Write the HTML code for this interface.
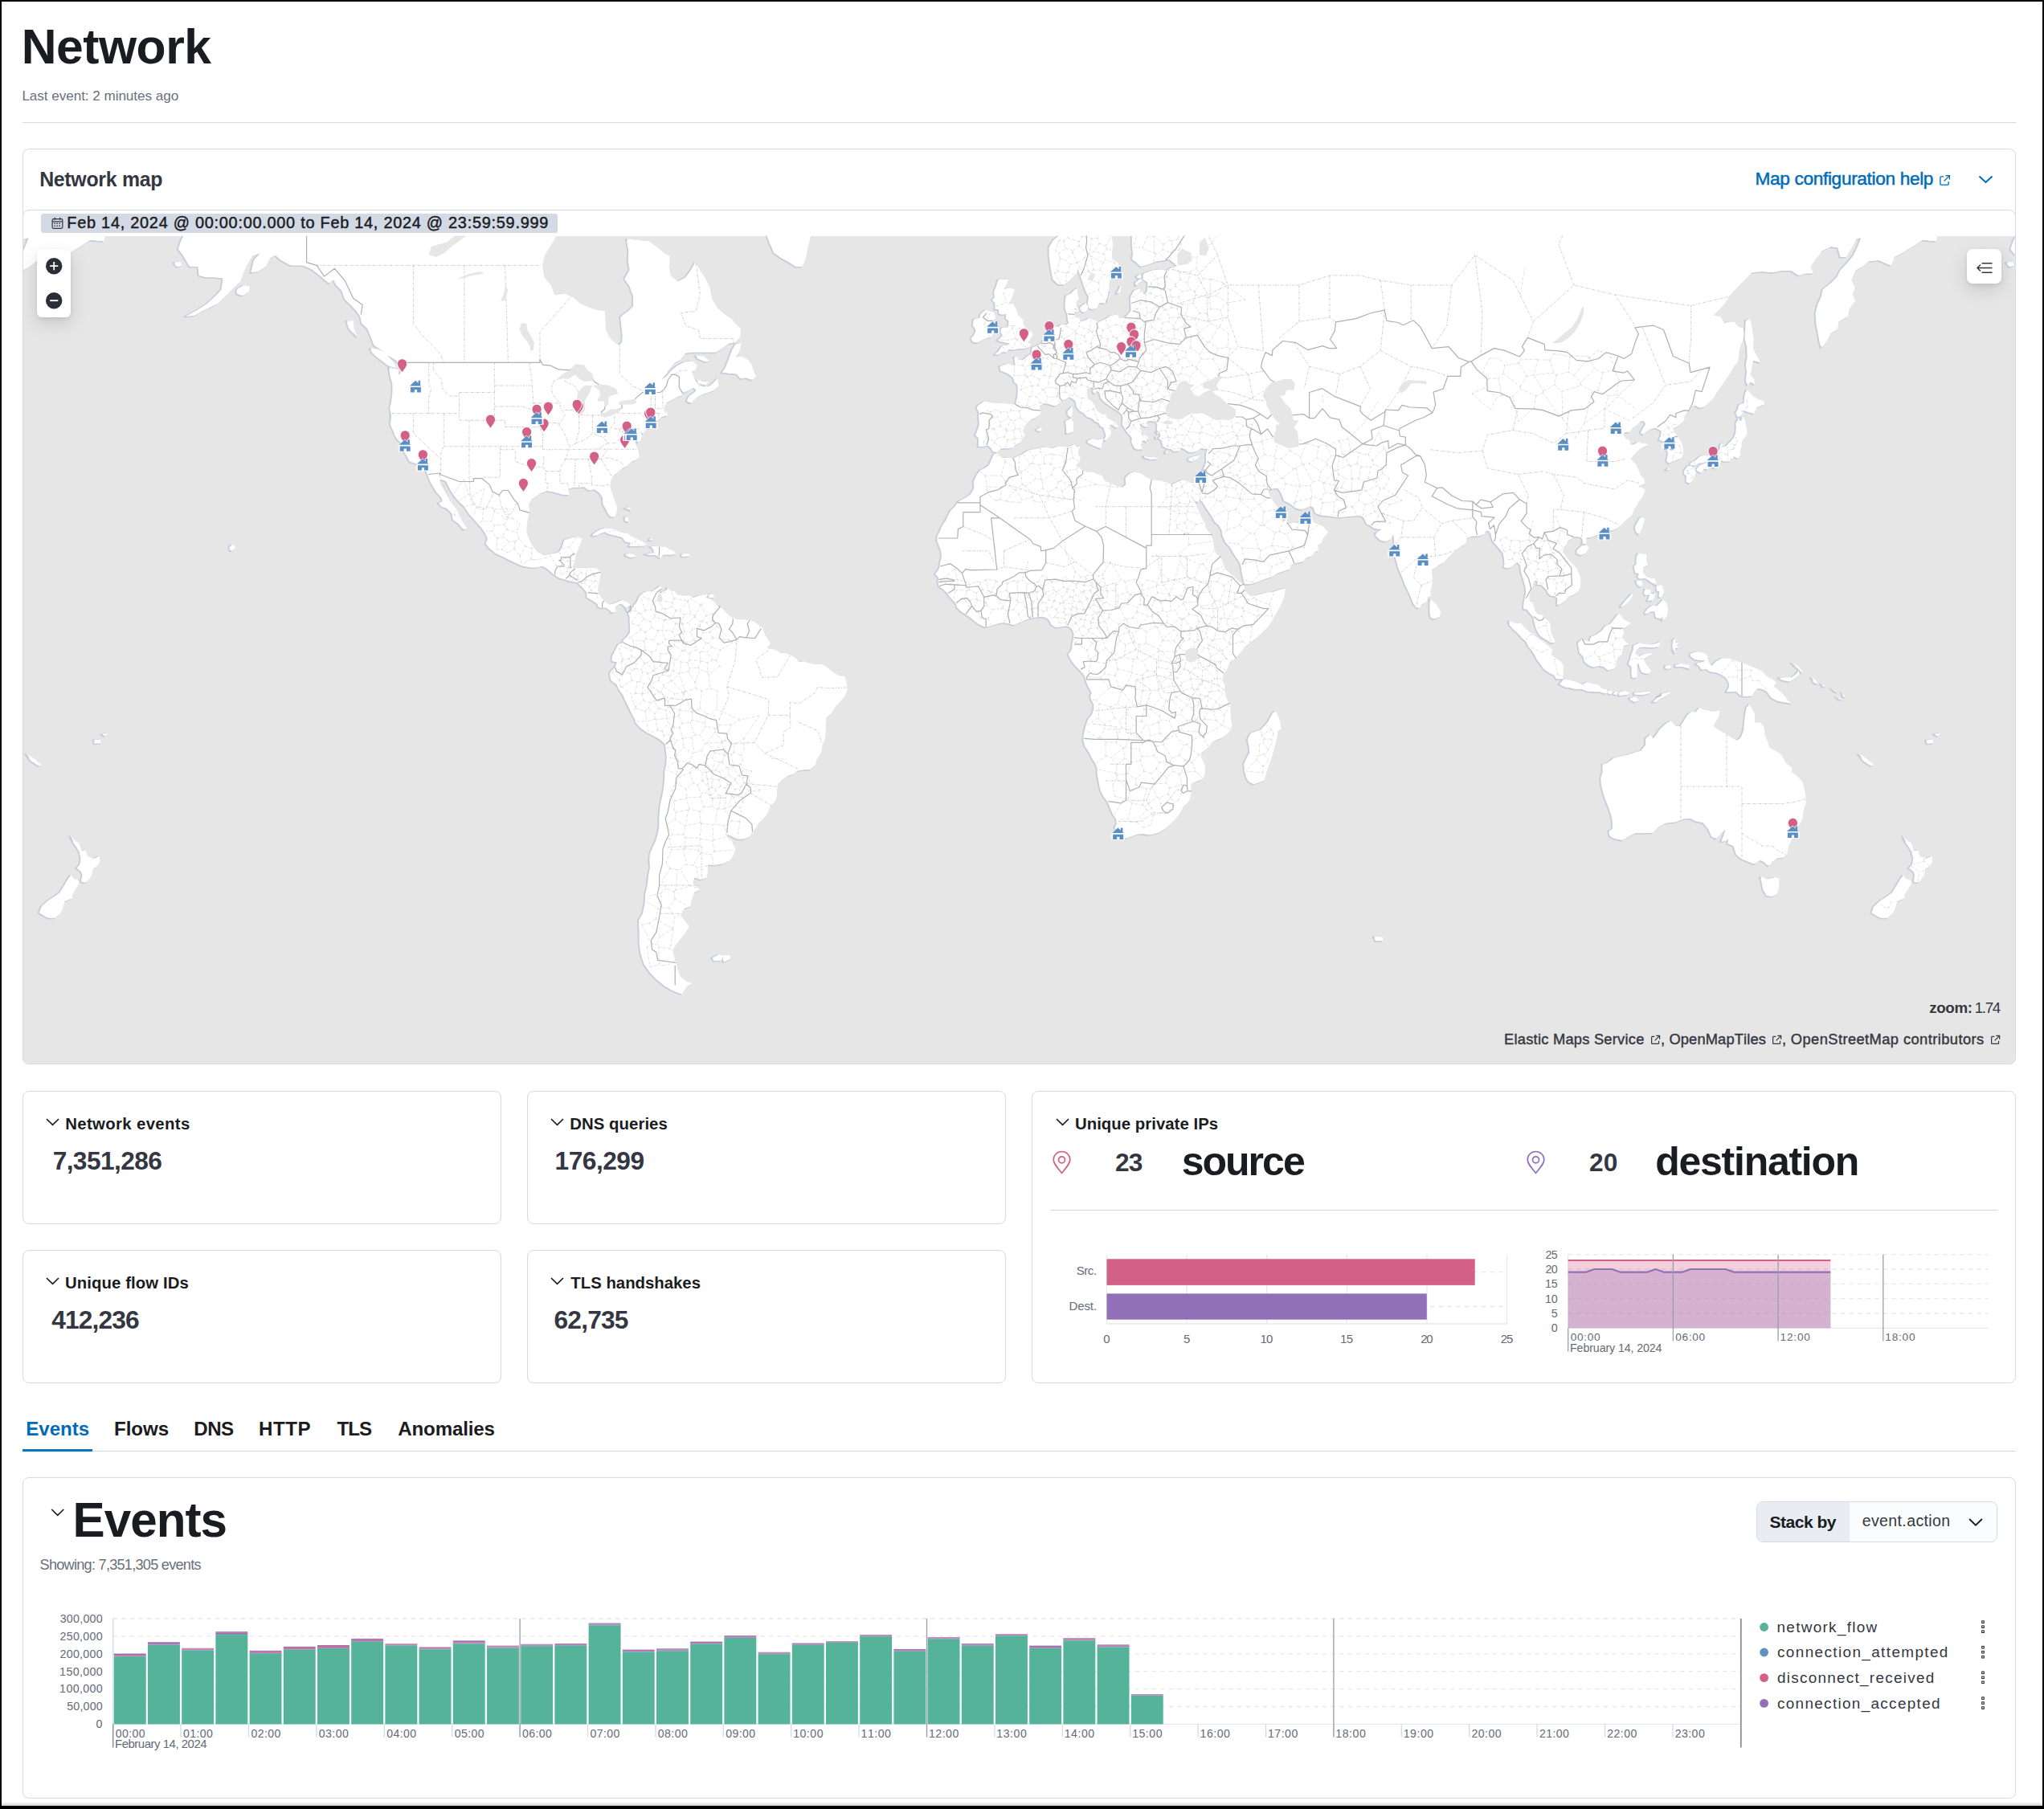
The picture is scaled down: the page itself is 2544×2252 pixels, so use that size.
<!DOCTYPE html><html lang="en"><head><meta charset="utf-8"><title>Network</title><style>
*{box-sizing:border-box;margin:0;padding:0}
html,body{width:2544px;height:2252px;background:#fff;overflow:hidden}
body{position:relative;font-family:"Liberation Sans",sans-serif;font-kerning:none;color:#343741}
.t{position:absolute;white-space:nowrap;line-height:1;display:block}
.p{position:absolute;border:1.3px solid #d3dae6;border-radius:8px;background:#fff}
.a{position:absolute}
svg{position:absolute;overflow:visible}
</style></head><body>
<div class="a" style="left:0;top:0;width:2544px;height:2px;background:#000"></div>
<div class="a" style="left:0;top:0;width:2px;height:2252px;background:#000"></div>
<div class="a" style="left:2542px;top:0;width:2px;height:2252px;background:#000"></div>
<div class="a" style="left:2px;top:2243px;width:2540px;height:5px;background:linear-gradient(#fff,#d4d4d4)"></div>
<div class="a" style="left:0;top:2248px;width:2544px;height:4px;background:#000"></div>
<header>
<span class="t" style="left:26.75px;top:28.39px;font-size:60.61px;letter-spacing:-0.489px;color:#1a1c21;font-weight:700;">Network</span>
<span class="t" style="left:27.39px;top:110.78px;font-size:17.15px;letter-spacing:-0.062px;color:#69707d;">Last event: 2 minutes ago</span>
<div class="a" style="left:28px;top:151.5px;width:2481px;height:1.3px;background:#d3dae6"></div>
</header>
<section class="p" style="left:28px;top:185px;width:2481px;height:1140px"></section>
<span class="t" style="left:49.14px;top:211.26px;font-size:24.86px;letter-spacing:-0.269px;color:#343741;font-weight:700;">Network map</span>
<span class="t" style="left:2184.54px;top:211.21px;font-size:22.67px;letter-spacing:-0.348px;color:#006bb8;-webkit-text-stroke:0.5px #006bb8;">Map configuration help</span>
<svg style="left:2413px;top:217px" width="15" height="15" viewBox="0 0 16 16" fill="none" stroke="#006bb8" stroke-width="1.4"><path d="M6.5 3H3.2A1.2 1.2 0 0 0 2 4.2v8.6A1.2 1.2 0 0 0 3.2 14h8.6a1.2 1.2 0 0 0 1.2-1.2V9.5M9 1.7h5.3V7M14 2 7 9"/></svg>
<svg style="left:2462px;top:218px" width="19" height="11" viewBox="0 0 19 11" fill="none" stroke="#006bb8" stroke-width="2"><path d="M1.5 1.5 9.5 9 17.5 1.5"/></svg>
<div class="p" style="left:28px;top:261px;width:2481px;height:1064px;border-radius:8px;overflow:hidden">
<div class="a" style="left:0;top:31.5px;width:2481px;height:1031px;background:#e6e6e6"></div>
<svg style="left:0;top:0" width="2478.4" height="1061.0" viewBox="0 0 2478.4 1061.0"><defs><clipPath id="mc"><rect x="0" y="31.5" width="2478.4" height="1029.5"/></clipPath></defs><g clip-path="url(#mc)"><path d="M837.2 180.6L846.7 181.5L854.3 187.4L849.9 188.4L840.4 184.5ZM749.1 370.8L754.2 369.4L756.7 373.6L752.3 371.5ZM749.1 382.1L752.9 381.4L753.6 387.6L750.4 386.9ZM779.5 408.9L782.7 408.3L783.3 410.6L779.5 410.6ZM708.0 404.5L711.8 400.7L718.1 397.3L724.4 395.2L731.4 395.9L737.1 397.3L744.1 400.7L751.7 402.1L756.7 405.5L764.3 408.9L770.7 412.3L775.7 415.7L773.2 417.4L765.6 417.7L754.2 418.1L756.7 413.7L750.4 412.3L746.6 406.9L737.7 404.8L729.5 402.8L725.1 400.1L718.7 402.1L713.7 404.8ZM858.1 930.3L865.7 926.2L872.0 927.2L868.9 933.4L860.6 934.4ZM872.0 926.7L879.6 927.2L879.6 932.3L872.0 935.4ZM910.0 -15.6L916.4 7.1L922.7 21.5L929.0 38.2L935.4 52.9L944.9 59.4L954.4 64.6L962.0 69.7L969.6 69.7L973.4 60.7L975.9 49.0L979.7 32.7L987.3 17.2L992.4 -0.4L1005.1 -15.6L1005.1 -83.5L910.0 -83.5ZM403.2 137.3L410.8 137.3L411.5 146.9L415.9 157.4L410.8 152.2L405.8 145.9ZM774.2 427.8L781.4 426.4L786.5 426.4L784.6 421.1L780.8 418.4L786.5 417.7L791.6 418.4L799.2 418.4L803.6 421.8L809.3 423.8L812.5 427.1L808.7 428.5L802.3 428.5L796.6 428.5L792.8 432.4L788.4 429.1L780.2 429.1ZM749.5 428.1L754.8 427.1L761.8 429.1L762.4 431.1L756.7 432.1L750.4 429.5ZM266.4 97.8L274.6 93.0L281.6 94.2L281.0 101.3L273.4 106.0L266.4 103.6ZM870.1 201.7L874.6 195.1L878.4 185.4L882.8 173.6L886.6 166.6L893.6 164.6L891.7 174.6L886.6 182.5L893.6 181.5L901.2 185.4L906.2 191.3L909.4 200.8L911.9 206.4L907.5 211.0L900.5 208.3L893.6 209.2L889.1 203.6L879.6 202.7ZM181.5 -15.6L206.9 -23.5L222.7 7.1L213.2 7.1L201.8 27.1L196.7 38.2L193.6 47.6L200.5 56.8L208.1 69.7L218.3 69.7L219.5 80.9L229.0 83.3L239.8 83.3L249.3 84.6L247.4 97.8L239.8 106.0L228.4 116.3L216.4 124.1L201.8 131.9L213.2 130.8L222.7 125.3L232.2 120.8L241.7 116.3L253.7 104.8L262.6 95.4L270.2 88.2L274.0 77.2L280.3 64.6L285.4 56.8L295.5 52.9L287.9 60.7L284.1 77.2L292.4 75.9L301.9 69.7L307.0 59.4L314.6 55.5L322.2 62.0L333.6 68.4L349.4 68.4L360.2 73.4L371.6 82.1L381.1 90.6L386.8 85.8L390.6 93.0L396.9 99.0L401.3 110.6L409.6 118.5L415.9 125.3L420.3 131.9L422.2 140.5L429.2 146.9L433.7 157.4L437.5 167.6L446.3 173.6L453.9 179.6L461.5 184.5L466.0 187.4L468.5 191.3L470.4 198.9L469.8 205.5L466.6 202.7L467.9 197.9L461.5 197.0L455.8 195.1L457.7 206.4L460.3 215.6L460.3 226.5L459.0 237.1L457.1 245.8L459.0 254.4L457.7 266.2L461.5 274.4L464.1 281.0L467.2 285.8L470.4 288.2L472.3 294.6L473.6 298.5L478.0 304.8L481.8 312.5L488.8 314.8L495.1 317.1L498.3 319.4L502.7 324.7L504.0 328.5L506.5 335.2L510.9 343.4L515.4 350.7L521.7 357.9L522.3 362.2L517.3 363.7L521.7 368.7L528.0 370.8L534.4 377.1L535.6 384.8L542.6 389.7L548.9 397.3L552.1 395.2L547.0 388.3L542.6 379.3L538.8 371.5L532.5 363.7L528.7 355.8L523.6 348.5L519.2 341.2L518.5 334.5L526.8 336.7L529.9 342.6L533.7 349.9L538.8 357.2L543.2 362.2L550.2 368.7L553.4 374.3L558.5 380.7L564.8 387.6L571.1 394.6L576.2 402.1L578.7 408.3L576.2 414.4L581.9 421.1L589.5 427.1L598.4 431.1L606.0 435.1L612.9 438.4L621.8 442.4L631.3 444.4L638.9 444.4L646.5 442.4L652.8 445.7L661.1 452.9L668.0 457.5L675.6 459.4L683.3 462.0L690.2 462.7L692.8 465.3L697.8 469.8L702.3 475.6L702.3 481.4L707.3 484.7L709.9 485.9L715.6 489.8L716.2 493.0L720.6 494.9L726.3 494.3L731.4 498.1L733.3 500.7L737.7 499.4L736.5 494.3L740.9 490.4L745.3 489.2L749.8 493.0L751.0 496.8L754.2 500.0L758.0 498.8L756.1 491.7L751.7 487.2L745.3 485.3L739.6 487.2L733.9 489.8L729.5 490.4L725.1 487.9L720.6 483.4L716.2 477.6L714.9 471.1L716.8 463.3L718.1 455.5L718.7 450.3L713.7 445.7L707.3 444.4L699.7 445.0L691.5 445.0L685.2 445.0L683.3 443.7L686.4 437.1L687.7 428.5L690.9 421.1L693.4 414.4L695.9 408.3L689.6 406.2L682.0 407.6L673.7 410.3L671.8 417.7L668.0 424.4L663.0 426.4L655.4 427.8L647.1 429.1L640.8 425.8L636.4 421.1L631.9 414.4L628.1 406.2L626.2 399.4L626.9 389.7L628.8 380.7L630.0 373.6L628.8 365.8L632.6 359.4L638.9 355.8L645.2 351.4L651.6 349.2L659.2 349.9L666.1 352.1L671.8 353.6L679.5 354.3L678.2 347.0L684.5 344.8L691.5 344.8L699.1 344.1L704.8 348.5L711.8 347.0L718.1 351.4L721.9 357.2L721.9 364.4L726.3 372.2L728.2 376.4L732.0 381.4L735.8 381.4L738.4 376.4L739.0 369.4L735.8 360.1L732.7 351.4L730.1 343.4L731.4 336.0L734.6 330.0L739.6 326.2L745.3 320.9L751.7 317.9L757.4 312.5L761.8 311.0L766.9 307.1L765.6 300.1L763.7 294.6L761.8 289.8L762.4 284.2L761.2 276.1L764.3 279.3L765.0 289.0L768.1 286.6L770.0 281.0L767.5 274.4L771.3 277.7L775.7 272.0L777.0 266.2L777.6 262.8L784.6 262.8L789.7 261.2L794.7 257.0L798.5 256.1L802.3 255.3L801.1 251.9L797.3 250.1L797.9 244.1L801.1 238.9L806.8 236.3L813.1 232.7L819.5 230.1L822.0 226.5L829.0 223.8L835.3 220.2L838.5 223.8L829.0 231.0L826.4 237.1L831.5 239.8L838.5 232.7L844.8 229.2L853.0 226.5L859.4 223.8L865.7 218.4L863.8 209.2L858.1 215.6L853.0 219.3L844.8 219.3L838.5 214.7L834.7 208.3L832.1 200.8L836.6 198.9L838.5 192.2L832.8 187.4L823.3 188.4L813.8 193.2L806.2 199.8L800.4 207.3L794.7 210.1L799.2 204.5L803.6 197.9L810.0 190.3L818.2 185.4L824.5 177.6L834.0 176.6L843.5 176.6L853.0 176.6L862.5 176.6L870.1 171.6L878.4 165.6L886.0 164.6L892.3 157.4L892.9 146.9L886.0 140.5L881.5 135.1L873.3 129.7L864.4 121.9L856.8 109.4L854.3 95.4L848.0 83.3L841.6 73.4L836.6 64.6L830.9 74.7L824.5 83.3L815.0 88.2L806.2 82.1L803.6 70.9L804.9 56.8L797.3 52.9L789.7 46.3L778.3 38.2L764.3 36.8L751.7 35.5L754.2 50.3L753.6 63.3L755.5 73.4L749.1 84.6L755.5 94.2L759.9 106.0L759.9 118.5L752.9 125.3L744.1 131.9L745.3 143.7L746.6 154.3L746.0 163.5L741.5 167.6L735.8 164.6L729.5 157.4L725.1 149.0L724.4 136.2L723.8 125.3L713.7 124.1L704.2 120.8L693.4 116.3L684.5 108.3L673.7 103.6L661.1 104.8L656.6 93.0L648.4 83.3L645.9 68.4L649.0 55.5L656.6 43.6L663.0 32.7L672.5 20.1L675.6 -83.5L181.5 -83.5ZM2462.1 -15.6L2487.5 -23.5L2503.3 7.1L2493.8 7.1L2482.4 27.1L2477.3 38.2L2474.2 47.6L2481.1 56.8L2488.7 69.7L2498.9 69.7L2500.1 80.9L2509.6 83.3L2520.4 83.3L2529.9 84.6L2528.0 97.8L2520.4 106.0L2509.0 116.3L2497.0 124.1L2482.4 131.9L2493.8 130.8L2503.3 125.3L2512.8 120.8L2522.3 116.3L2534.3 104.8L2543.2 95.4L2550.8 88.2L2554.6 77.2L2560.9 64.6L2566.0 56.8L2576.1 52.9L2568.5 60.7L2564.7 77.2L2573.0 75.9L2582.5 69.7L2587.6 59.4L2595.2 55.5L2602.8 62.0L2614.2 68.4L2630.0 68.4L2640.8 73.4L2652.2 82.1L2661.7 90.6L2667.4 85.8L2671.2 93.0L2677.5 99.0L2681.9 110.6L2690.2 118.5L2696.5 125.3L2700.9 131.9L2702.8 140.5L2709.8 146.9L2714.3 157.4L2718.1 167.6L2726.9 173.6L2734.5 179.6L2742.1 184.5L2746.6 187.4L2749.1 191.3L2751.0 198.9L2750.4 205.5L2747.2 202.7L2748.5 197.9L2742.1 197.0L2736.4 195.1L2738.3 206.4L2740.9 215.6L2740.9 226.5L2739.6 237.1L2737.7 245.8L2739.6 254.4L2738.3 266.2L2742.1 274.4L2744.7 281.0L2747.8 285.8L2751.0 288.2L2752.9 294.6L2754.2 298.5L2758.6 304.8L2762.4 312.5L2769.4 314.8L2775.7 317.1L2778.9 319.4L2783.3 324.7L2784.6 328.5L2787.1 335.2L2791.5 343.4L2796.0 350.7L2802.3 357.9L2802.9 362.2L2797.9 363.7L2802.3 368.7L2808.6 370.8L2815.0 377.1L2816.2 384.8L2823.2 389.7L2829.5 397.3L2832.7 395.2L2827.6 388.3L2823.2 379.3L2819.4 371.5L2813.1 363.7L2809.3 355.8L2804.2 348.5L2799.8 341.2L2799.1 334.5L2807.4 336.7L2810.5 342.6L2814.3 349.9L2819.4 357.2L2823.8 362.2L2830.8 368.7L2834.0 374.3L2839.1 380.7L2845.4 387.6L2851.7 394.6L2856.8 402.1L2859.3 408.3L2856.8 414.4L2862.5 421.1L2870.1 427.1L2879.0 431.1L2886.6 435.1L2893.5 438.4L2902.4 442.4L2911.9 444.4L2919.5 444.4L2927.1 442.4L2933.4 445.7L2941.7 452.9L2948.6 457.5L2956.2 459.4L2963.9 462.0L2970.8 462.7L2973.4 465.3L2978.4 469.8L2982.9 475.6L2982.9 481.4L2987.9 484.7L2990.5 485.9L2996.2 489.8L2996.8 493.0L3001.2 494.9L3006.9 494.3L3012.0 498.1L3013.9 500.7L3018.3 499.4L3017.1 494.3L3021.5 490.4L3025.9 489.2L3030.4 493.0L3031.6 496.8L3034.8 500.0L3038.6 498.8L3036.7 491.7L3032.3 487.2L3025.9 485.3L3020.2 487.2L3014.5 489.8L3010.1 490.4L3005.7 487.9L3001.2 483.4L2996.8 477.6L2995.5 471.1L2997.4 463.3L2998.7 455.5L2999.3 450.3L2994.3 445.7L2987.9 444.4L2980.3 445.0L2972.1 445.0L2965.8 445.0L2963.9 443.7L2967.0 437.1L2968.3 428.5L2971.5 421.1L2974.0 414.4L2976.5 408.3L2970.2 406.2L2962.6 407.6L2954.3 410.3L2952.4 417.7L2948.6 424.4L2943.6 426.4L2936.0 427.8L2927.7 429.1L2921.4 425.8L2917.0 421.1L2912.5 414.4L2908.7 406.2L2906.8 399.4L2907.5 389.7L2909.4 380.7L2910.6 373.6L2909.4 365.8L2913.2 359.4L2919.5 355.8L2925.8 351.4L2932.2 349.2L2939.8 349.9L2946.7 352.1L2952.4 353.6L2960.1 354.3L2958.8 347.0L2965.1 344.8L2972.1 344.8L2979.7 344.1L2985.4 348.5L2992.4 347.0L2998.7 351.4L3002.5 357.2L3002.5 364.4L3006.9 372.2L3008.8 376.4L3012.6 381.4L3016.4 381.4L3019.0 376.4L3019.6 369.4L3016.4 360.1L3013.3 351.4L3010.7 343.4L3012.0 336.0L3015.2 330.0L3020.2 326.2L3025.9 320.9L3032.3 317.9L3038.0 312.5L3042.4 311.0L3047.5 307.1L3046.2 300.1L3044.3 294.6L3042.4 289.8L3043.0 284.2L3041.8 276.1L3044.9 279.3L3045.6 289.0L3048.7 286.6L3050.6 281.0L3048.1 274.4L3051.9 277.7L3056.3 272.0L3057.6 266.2L3058.2 262.8L3065.2 262.8L3070.3 261.2L3075.3 257.0L3079.1 256.1L3082.9 255.3L3081.7 251.9L3077.9 250.1L3078.5 244.1L3081.7 238.9L3087.4 236.3L3093.7 232.7L3100.1 230.1L3102.6 226.5L3109.6 223.8L3115.9 220.2L3119.1 223.8L3109.6 231.0L3107.0 237.1L3112.1 239.8L3119.1 232.7L3125.4 229.2L3133.6 226.5L3140.0 223.8L3146.3 218.4L3144.4 209.2L3138.7 215.6L3133.6 219.3L3125.4 219.3L3119.1 214.7L3115.3 208.3L3112.7 200.8L3117.2 198.9L3119.1 192.2L3113.4 187.4L3103.9 188.4L3094.4 193.2L3086.8 199.8L3081.0 207.3L3075.3 210.1L3079.8 204.5L3084.2 197.9L3090.6 190.3L3098.8 185.4L3105.1 177.6L3114.6 176.6L3124.1 176.6L3133.6 176.6L3143.1 176.6L3150.7 171.6L3159.0 165.6L3166.6 164.6L3172.9 157.4L3173.5 146.9L3166.6 140.5L3162.1 135.1L3153.9 129.7L3145.0 121.9L3137.4 109.4L3134.9 95.4L3128.6 83.3L3122.2 73.4L3117.2 64.6L3111.5 74.7L3105.1 83.3L3095.6 88.2L3086.8 82.1L3084.2 70.9L3085.5 56.8L3077.9 52.9L3070.3 46.3L3058.9 38.2L3044.9 36.8L3032.3 35.5L3034.8 50.3L3034.2 63.3L3036.1 73.4L3029.7 84.6L3036.1 94.2L3040.5 106.0L3040.5 118.5L3033.5 125.3L3024.7 131.9L3025.9 143.7L3027.2 154.3L3026.6 163.5L3022.1 167.6L3016.4 164.6L3010.1 157.4L3005.7 149.0L3005.0 136.2L3004.4 125.3L2994.3 124.1L2984.8 120.8L2974.0 116.3L2965.1 108.3L2954.3 103.6L2941.7 104.8L2937.2 93.0L2929.0 83.3L2926.5 68.4L2929.6 55.5L2937.2 43.6L2943.6 32.7L2953.1 20.1L2956.2 -83.5L2462.1 -83.5ZM187.9 64.6L195.5 64.0L197.4 68.4L192.3 70.3ZM2468.5 64.6L2476.1 64.0L2478.0 68.4L2472.9 70.3ZM837.8 210.1L845.4 212.9L853.0 213.3L849.9 217.5L841.6 215.6ZM819.8 427.5L826.4 427.1L829.9 428.5L828.3 430.5L820.1 430.8ZM755.5 491.7L758.6 495.6L761.2 490.4L765.0 485.9L767.5 479.5L771.3 476.3L775.7 474.3L782.1 474.3L787.8 471.1L792.8 467.2L794.7 470.5L790.9 474.3L792.8 477.6L796.0 474.3L801.1 473.1L802.3 468.9L804.3 473.1L810.6 474.3L813.8 478.2L821.4 479.5L827.7 478.9L834.0 482.1L840.4 479.5L846.7 478.2L853.0 478.2L849.2 481.4L854.9 483.4L860.0 487.2L863.8 492.4L870.1 495.6L875.2 501.3L881.5 506.4L887.9 509.0L895.5 509.0L903.7 510.2L910.0 512.1L916.4 517.2L920.8 520.4L922.7 527.4L927.1 534.4L929.7 540.1L925.2 545.1L932.2 545.8L938.6 548.3L941.7 550.8L948.1 550.8L955.7 554.0L962.0 557.8L965.2 562.2L971.5 561.6L979.7 564.1L987.3 564.8L993.7 564.8L1001.3 569.2L1008.2 574.9L1014.6 578.7L1022.2 580.0L1024.7 587.7L1025.3 597.2L1022.2 605.6L1015.8 612.6L1010.1 619.1L1005.1 626.9L999.4 631.4L998.7 641.2L998.7 649.1L997.5 659.7L994.3 665.7L993.7 673.7L990.5 678.4L986.7 685.2L986.1 690.0L979.7 695.8L972.1 696.2L963.9 697.6L958.2 701.7L951.9 703.8L944.9 708.6L939.2 714.2L937.9 721.3L937.9 729.9L935.4 736.3L929.7 742.1L925.9 750.9L920.2 758.3L915.1 762.8L911.3 769.6L906.9 774.9L903.7 779.5L897.4 782.6L889.8 782.6L883.4 779.5L877.1 776.4L875.2 778.7L881.5 784.1L883.4 789.6L886.6 795.1L883.4 803.8L879.0 809.4L870.1 813.5L859.4 815.1L851.8 814.3L851.8 823.3L850.5 830.8L843.5 832.9L835.3 830.0L833.4 837.5L839.1 842.7L842.3 846.1L835.3 848.7L832.1 857.4L830.2 866.3L822.6 869.0L818.2 877.2L823.3 884.5L829.0 891.1L824.5 898.7L817.6 907.4L811.2 915.2L808.1 921.2L810.0 929.3L812.5 936.5L813.8 942.7L817.6 953.3L825.2 959.8L832.8 962.0L825.8 966.4L819.5 975.4L808.7 970.9L799.2 965.3L789.7 957.7L781.4 949.1L773.8 938.5L769.4 925.2L767.5 911.3L767.5 896.8L766.9 882.7L771.9 874.4L774.5 861.8L775.1 850.4L777.6 839.2L778.9 827.4L780.8 817.5L780.2 807.0L780.8 800.6L784.6 791.1L788.4 783.3L790.9 774.1L792.2 766.6L792.2 756.8L792.8 748.0L793.5 739.9L795.4 731.3L797.3 722.7L798.5 713.5L799.2 705.2L799.2 697.6L801.1 689.3L801.7 679.1L800.4 669.0L799.8 664.3L794.1 659.0L787.1 655.0L778.3 650.4L769.4 644.5L763.1 637.3L761.8 632.7L757.4 624.3L754.2 617.8L750.4 610.1L747.2 603.0L742.2 596.0L739.6 590.2L732.7 585.1L731.4 580.0L730.8 574.9L734.6 570.5L737.7 567.3L739.6 562.2L733.3 561.0L733.9 554.0L736.5 548.9L739.0 543.9L740.9 540.1L746.0 538.2L747.9 533.7L752.3 529.9L756.1 524.2L756.1 517.9L755.5 510.9L755.5 504.5L752.9 499.4L750.4 495.6ZM853.7 477.9L859.4 477.6L859.4 481.8L853.7 482.4ZM432.4 171.6L441.3 172.6L451.4 177.6L457.7 185.4L463.4 193.2L462.8 196.0L455.2 193.2L447.6 187.4L440.0 181.5L434.9 176.6ZM1208.4 303.2L1212.2 302.5L1217.9 307.9L1224.9 307.9L1231.9 308.7L1238.2 305.6L1243.9 303.2L1250.9 298.5L1258.5 297.0L1264.8 295.4L1272.4 294.6L1280.0 296.2L1287.6 293.8L1295.2 293.8L1301.5 293.8L1307.9 291.4L1311.1 294.6L1315.5 293.8L1313.0 298.5L1313.0 304.0L1316.1 307.9L1314.2 313.3L1309.8 317.9L1314.2 320.2L1318.0 323.2L1324.4 325.5L1330.7 325.5L1337.7 328.5L1342.7 330.0L1345.9 336.7L1353.5 339.7L1361.1 343.4L1368.1 344.8L1373.1 340.4L1372.5 332.2L1377.6 327.0L1383.9 325.5L1391.5 327.8L1397.8 332.2L1404.2 335.2L1413.7 336.0L1421.9 338.2L1429.5 341.2L1435.8 338.2L1442.2 335.6L1448.5 336.7L1450.7 337.8L1452.0 347.0L1452.3 350.7L1454.2 357.2L1458.0 362.2L1460.6 368.7L1463.7 375.7L1466.9 382.8L1470.7 389.7L1471.3 395.2L1477.0 401.4L1479.6 406.9L1481.5 414.4L1482.1 422.4L1485.3 427.8L1489.7 430.5L1492.9 438.4L1496.0 446.3L1501.1 450.9L1507.4 456.2L1513.1 462.0L1518.8 465.9L1520.1 470.5L1516.9 473.1L1521.4 474.3L1526.4 479.5L1532.8 479.5L1540.4 477.6L1547.3 475.6L1554.9 475.0L1562.5 472.4L1570.2 470.5L1570.2 476.3L1569.5 480.2L1567.6 485.9L1564.5 492.4L1561.3 498.1L1557.5 505.1L1553.7 512.1L1549.2 518.5L1542.3 525.5L1534.7 532.5L1527.7 537.5L1520.7 543.2L1515.0 550.2L1510.0 555.9L1505.5 560.3L1501.1 562.9L1499.8 567.3L1497.3 572.4L1494.1 577.5L1491.6 584.5L1495.4 590.2L1495.4 597.2L1496.7 604.9L1499.8 611.4L1502.4 615.2L1502.4 624.3L1503.0 632.7L1504.3 639.9L1503.0 646.5L1498.6 651.7L1492.2 656.4L1485.3 659.0L1479.6 662.3L1475.8 667.7L1469.4 673.1L1466.3 675.1L1465.6 680.5L1468.8 685.9L1470.7 691.4L1470.7 698.9L1470.1 704.5L1466.3 708.6L1458.7 711.4L1453.6 714.2L1453.0 717.8L1454.2 723.4L1452.3 731.3L1449.8 737.0L1444.1 742.1L1440.9 748.0L1437.1 753.9L1432.0 759.8L1426.3 765.8L1421.3 769.6L1414.3 774.1L1408.6 775.7L1402.9 777.2L1394.7 776.0L1387.1 776.4L1380.1 779.1L1372.5 781.8L1367.4 779.5L1362.7 778.0L1362.4 774.1L1359.2 767.3L1361.7 762.8L1361.1 757.6L1356.7 750.9L1353.5 742.9L1350.3 735.6L1345.9 729.9L1342.1 722.7L1340.2 715.7L1338.9 708.6L1337.3 700.3L1337.7 694.8L1335.1 688.0L1330.7 681.2L1327.5 674.4L1322.5 667.0L1320.2 659.7L1320.6 652.4L1321.8 646.5L1323.7 639.2L1326.3 632.1L1330.7 626.9L1333.2 620.4L1333.2 614.6L1330.1 608.8L1328.8 603.6L1330.7 599.8L1326.9 593.4L1323.7 585.8L1323.1 582.6L1321.2 578.1L1317.4 573.7L1312.3 568.6L1307.9 563.5L1304.1 557.8L1301.2 551.5L1304.7 548.3L1306.0 543.9L1306.6 538.8L1307.9 531.8L1308.5 526.8L1306.6 521.7L1302.2 517.9L1298.4 517.2L1292.0 518.2L1285.7 519.1L1280.6 515.3L1277.5 509.6L1273.0 506.4L1266.7 505.8L1260.4 506.4L1253.4 507.7L1247.7 509.6L1240.7 512.8L1233.1 516.0L1226.8 514.1L1220.5 513.1L1214.1 514.1L1207.8 516.0L1201.5 517.9L1197.7 518.5L1192.0 516.0L1185.6 511.5L1179.3 506.4L1173.6 502.6L1167.9 498.8L1163.4 494.3L1161.5 489.2L1158.4 485.3L1153.3 480.2L1150.8 476.3L1145.7 471.1L1140.6 467.9L1139.4 462.0L1140.0 456.8L1135.6 452.2L1138.1 449.0L1141.3 443.7L1141.9 437.1L1143.8 430.5L1143.2 423.8L1141.3 418.4L1138.1 411.0L1138.1 405.5L1141.9 398.0L1144.4 391.8L1148.9 385.5L1152.0 378.6L1154.6 373.6L1159.6 368.7L1164.1 362.2L1171.0 358.6L1177.4 355.0L1181.8 349.9L1184.4 344.1L1183.7 336.7L1186.9 329.3L1191.3 323.2L1197.7 320.2L1202.7 316.4L1205.9 309.5ZM1300.3 249.3L1305.3 244.1L1306.3 251.0L1304.1 257.8L1300.9 254.4ZM1394.7 305.6L1399.7 306.7L1405.4 306.7L1412.4 307.9L1410.5 309.5L1402.9 309.8L1395.3 307.5ZM1450.4 309.1L1454.9 306.7L1464.7 304.4L1461.2 309.5L1454.9 312.5L1451.1 311.4ZM1392.8 278.1L1398.5 281.0L1401.3 285.8L1395.3 281.8ZM-899.9 -83.5L-899.9 29.9L-899.9 42.3L-898.6 52.9L-899.9 60.7L-894.2 64.6L-889.1 69.7L-879.6 67.1L-870.1 63.3L-860.6 62.0L-853.0 60.7L-843.5 69.0L-851.1 70.9L-857.4 74.7L-866.9 73.4L-876.4 74.7L-885.9 78.4L-885.9 85.8L-880.2 89.4L-880.9 100.1L-885.3 104.8L-891.6 97.8L-897.3 99.0L-901.8 107.1L-901.4 116.3L-901.1 124.1L-904.9 128.6L-909.4 133.5L-916.3 134.0L-918.9 129.7L-927.1 130.8L-933.4 135.1L-942.3 138.9L-948.0 136.2L-953.7 134.0L-958.8 136.8L-965.1 138.4L-966.4 134.0L-971.5 133.0L-972.1 127.5L-969.5 120.8L-970.2 114.0L-966.4 110.6L-968.9 102.5L-968.0 96.6L-972.1 98.4L-976.5 103.6L-982.2 106.0L-983.2 116.3L-982.9 123.0L-980.3 128.6L-979.7 136.2L-978.4 139.5L-982.9 142.7L-989.2 142.1L-991.7 144.8L-999.3 145.3L-1004.4 150.1L-1006.9 157.4L-1010.1 161.5L-1013.3 165.6L-1019.0 168.6L-1024.7 170.6L-1024.7 177.6L-1030.4 181.0L-1034.2 184.5L-1037.3 186.4L-1042.4 185.4L-1043.0 182.5L-1046.8 182.5L-1044.9 192.2L-1049.4 192.7L-1055.7 190.8L-1064.6 194.1L-1063.3 199.4L-1055.1 202.7L-1050.6 205.5L-1047.5 208.3L-1046.2 213.8L-1042.4 216.6L-1041.8 222.0L-1042.4 230.1L-1044.3 239.8L-1047.5 241.5L-1057.0 240.2L-1066.5 239.8L-1076.0 239.3L-1084.8 237.6L-1091.8 242.4L-1093.4 245.0L-1090.5 251.0L-1090.5 258.6L-1089.9 265.4L-1092.4 273.6L-1095.0 279.7L-1091.2 282.2L-1090.5 287.4L-1091.5 293.8L-1084.8 293.8L-1079.8 292.2L-1075.3 295.4L-1072.8 300.1L-1069.0 300.9L-1063.3 296.2L-1057.0 296.2L-1049.4 295.4L-1046.2 292.2L-1039.9 289.0L-1036.1 282.6L-1033.5 279.7L-1036.7 274.4L-1032.9 267.0L-1029.1 262.8L-1024.7 259.5L-1020.2 257.8L-1014.5 253.6L-1014.5 249.3L-1015.8 244.1L-1010.1 239.8L-1005.0 240.6L-1000.6 242.0L-995.5 243.3L-991.1 240.2L-987.3 237.1L-982.2 234.5L-978.4 231.9L-973.4 234.5L-970.2 237.1L-968.9 244.1L-965.1 249.3L-960.0 251.9L-955.6 257.0L-949.3 259.1L-945.5 262.8L-941.0 264.5L-938.5 269.1L-935.3 270.3L-933.4 276.1L-932.2 280.2L-935.3 285.8L-932.8 286.2L-929.6 282.6L-926.5 277.7L-927.1 273.6L-929.6 272.0L-927.7 266.2L-923.9 267.0L-920.1 270.3L-917.6 268.7L-920.8 264.1L-927.1 260.8L-933.4 257.4L-932.2 253.6L-938.5 253.6L-944.2 249.3L-948.0 241.5L-951.2 237.1L-955.6 234.5L-956.9 227.4L-956.2 222.9L-950.5 219.7L-947.7 221.1L-948.6 225.6L-946.7 228.3L-944.2 223.8L-940.4 226.5L-938.5 233.6L-933.4 238.9L-927.1 243.3L-920.8 247.6L-916.3 250.1L-911.9 254.4L-911.3 259.5L-911.9 266.2L-908.1 272.0L-904.9 276.9L-901.8 280.2L-899.9 283.0L-900.5 287.4L-898.0 293.0L-896.7 295.8L-892.9 297.7L-889.7 297.0L-887.8 298.1L-889.7 291.4L-887.8 289.0L-888.5 286.6L-884.7 286.2L-882.4 288.2L-882.1 284.2L-886.6 281.0L-889.7 277.7L-889.1 275.3L-891.0 270.3L-891.0 266.2L-889.1 264.5L-885.9 267.8L-883.4 269.5L-880.2 268.3L-883.4 265.4L-881.5 262.4L-876.4 262.0L-870.1 262.8L-868.2 266.2L-868.8 269.1L-868.8 273.6L-865.0 276.1L-864.4 281.0L-867.6 283.4L-863.1 285.8L-861.9 290.6L-861.2 293.8L-856.2 296.2L-851.1 297.0L-847.3 300.1L-841.6 299.3L-839.7 295.0L-834.6 297.0L-828.9 300.9L-824.5 300.9L-819.4 299.3L-814.3 295.4L-809.3 297.0L-805.5 295.4L-807.4 300.9L-808.0 306.4L-807.4 312.5L-809.3 317.1L-811.8 323.2L-813.4 327.0L-815.0 333.0L-817.5 336.7L-821.9 338.9L-827.6 338.9L-829.9 337.8L-828.6 347.0L-827.6 350.7L-824.5 357.2L-821.3 361.5L-817.8 363.3L-816.2 358.6L-813.7 351.4L-813.1 350.7L-814.0 355.0L-815.0 360.1L-811.8 362.9L-808.0 369.4L-803.6 375.7L-799.1 382.8L-796.6 387.6L-792.2 391.1L-788.4 397.3L-787.1 404.8L-783.3 413.0L-778.2 418.4L-773.8 425.8L-770.0 431.8L-765.6 437.8L-763.7 445.0L-763.0 451.6L-761.1 459.4L-759.2 465.3L-752.9 465.0L-746.6 463.3L-740.2 460.7L-733.3 458.1L-726.3 456.2L-719.3 451.6L-711.7 449.0L-704.1 446.3L-702.8 441.7L-695.9 438.7L-687.6 437.1L-683.8 432.4L-677.5 430.5L-672.4 424.4L-668.6 423.8L-669.3 417.1L-664.8 413.7L-662.9 408.3L-658.5 403.5L-656.0 400.1L-659.1 398.0L-662.9 393.2L-668.6 391.1L-673.7 389.0L-676.9 384.8L-677.5 378.6L-677.2 373.6L-679.4 375.7L-680.0 378.6L-684.5 381.0L-688.9 385.5L-694.0 389.0L-700.3 388.7L-706.0 389.7L-707.9 386.9L-707.9 381.4L-709.2 375.0L-712.3 377.8L-713.0 384.2L-716.1 379.3L-717.4 373.6L-720.6 367.9L-724.4 362.9L-727.6 357.2L-730.7 351.4L-731.4 347.0L-726.9 347.0L-721.2 345.6L-717.4 346.3L-713.6 352.9L-710.4 361.5L-705.4 363.7L-700.9 366.5L-695.2 370.8L-688.9 372.2L-682.6 370.1L-677.5 367.6L-673.7 370.1L-671.8 376.4L-667.4 378.6L-661.0 380.0L-654.7 380.3L-648.4 381.4L-642.0 381.7L-635.7 381.4L-629.4 380.7L-623.0 380.3L-616.7 379.6L-612.3 381.4L-610.4 384.2L-607.2 390.4L-602.8 392.5L-597.7 395.9L-589.4 397.0L-596.4 401.1L-596.4 404.8L-590.7 410.3L-585.0 412.3L-578.7 409.6L-576.1 404.2L-574.9 401.4L-573.6 408.3L-573.6 415.7L-573.6 423.1L-572.3 430.5L-570.4 437.1L-568.5 444.4L-565.4 451.6L-562.2 459.4L-559.7 466.6L-555.9 473.7L-552.1 482.7L-549.5 489.2L-545.7 494.3L-543.2 494.9L-540.0 490.4L-534.3 487.2L-532.4 481.4L-529.0 480.8L-529.3 473.1L-527.4 466.6L-526.1 460.7L-527.4 453.6L-527.4 447.6L-522.9 444.7L-519.1 441.7L-513.4 439.1L-507.7 433.1L-502.7 427.8L-497.0 422.4L-491.3 418.4L-485.6 414.4L-483.7 408.3L-478.0 405.5L-472.3 405.5L-466.6 404.8L-462.1 402.8L-460.2 398.7L-455.8 398.7L-453.2 402.1L-452.0 408.3L-450.1 412.3L-446.3 416.4L-441.8 421.8L-438.0 426.4L-436.8 433.1L-436.1 439.7L-437.7 443.7L-433.0 445.3L-428.5 443.7L-424.7 440.4L-420.3 437.1L-419.0 439.1L-416.5 441.7L-415.9 448.3L-414.0 454.9L-412.1 461.4L-410.2 468.5L-409.5 475.0L-410.8 481.4L-412.1 487.9L-412.7 494.3L-411.4 496.5L-408.3 496.2L-405.7 500.0L-401.9 503.9L-400.0 507.0L-399.1 512.1L-397.5 518.5L-395.6 522.9L-393.1 527.7L-389.3 531.2L-385.5 533.4L-380.4 536.6L-378.5 538.2L-374.7 537.8L-374.7 534.4L-377.2 529.9L-379.4 524.8L-379.8 519.8L-379.8 516.0L-381.7 512.1L-384.8 509.0L-387.4 507.0L-391.2 502.9L-395.6 502.6L-398.1 500.0L-400.7 493.0L-401.9 487.9L-405.7 486.6L-406.4 480.2L-404.5 475.0L-402.6 469.8L-401.3 463.3L-398.1 460.1L-395.0 461.4L-395.6 465.9L-390.5 465.9L-386.7 469.2L-383.6 472.4L-381.7 476.3L-378.5 479.5L-373.4 480.2L-370.3 482.7L-370.9 491.4L-367.1 489.8L-362.0 486.6L-358.9 482.7L-355.7 480.2L-350.6 478.2L-345.6 474.3L-343.0 470.5L-342.4 464.6L-342.4 458.8L-344.3 452.2L-346.8 446.3L-349.4 442.7L-353.8 439.1L-358.2 433.8L-361.4 429.1L-364.6 425.1L-363.9 419.7L-360.1 415.7L-358.2 411.6L-353.8 408.9L-349.4 406.2L-344.3 406.2L-340.5 406.9L-338.6 411.0L-339.9 414.4L-336.0 415.0L-334.8 410.3L-335.4 407.6L-329.7 406.9L-324.0 404.8L-318.9 402.8L-315.1 400.1L-311.3 401.4L-307.5 398.7L-301.8 398.0L-296.1 395.2L-291.1 391.1L-286.6 386.2L-282.2 382.8L-277.8 378.6L-276.5 373.6L-273.3 368.7L-270.2 362.9L-266.4 358.6L-263.8 352.9L-261.9 347.8L-266.4 344.8L-270.8 344.1L-266.4 341.9L-262.6 339.7L-263.2 334.5L-267.6 330.0L-269.5 324.7L-272.7 317.1L-277.1 312.5L-279.7 309.5L-276.5 304.8L-272.7 300.9L-268.3 297.0L-262.6 294.2L-258.4 292.2L-261.3 289.8L-266.4 289.4L-271.4 288.2L-275.9 291.4L-280.9 291.4L-280.9 286.6L-286.0 284.2L-289.2 279.3L-287.3 276.1L-281.6 276.1L-277.8 271.2L-272.1 267.0L-267.6 262.4L-262.6 262.0L-260.7 265.4L-263.8 270.3L-267.0 276.1L-264.5 278.9L-260.0 275.3L-254.3 272.0L-248.0 270.3L-244.2 272.8L-241.0 274.4L-241.7 280.2L-244.2 285.0L-239.1 287.4L-235.3 288.2L-232.8 292.2L-234.7 296.2L-232.8 300.9L-233.4 306.4L-234.7 311.0L-232.2 314.5L-227.1 312.5L-222.7 310.6L-217.6 308.7L-215.1 304.8L-214.4 300.9L-215.1 294.6L-216.3 289.8L-219.5 284.2L-222.0 280.2L-226.5 275.7L-227.1 271.2L-222.0 268.7L-216.3 264.5L-213.2 261.2L-213.2 256.1L-209.3 251.0L-206.8 250.1L-203.0 244.1L-198.6 242.4L-193.5 245.8L-188.4 244.6L-182.7 239.8L-177.7 234.5L-173.2 227.4L-168.8 221.1L-164.4 214.7L-159.3 207.3L-154.9 200.8L-151.1 194.1L-146.6 188.4L-145.4 179.6L-144.1 170.6L-140.3 161.5L-139.0 153.2L-140.3 145.9L-146.0 144.8L-151.1 138.4L-157.4 138.4L-163.7 140.5L-168.2 131.9L-177.0 130.8L-170.1 124.1L-163.1 116.3L-157.4 107.1L-147.9 96.6L-138.4 87.0L-128.9 77.2L-116.2 75.9L-103.6 77.2L-90.9 74.7L-79.5 74.7L-70.0 80.9L-62.4 78.4L-52.9 78.4L-56.0 69.7L-49.7 60.7L-41.5 50.3L-30.7 45.0L-21.2 46.3L-18.0 58.1L-11.7 58.1L-5.4 47.6L1.0 35.5L7.3 34.1L2.9 45.0L-2.2 55.5L-8.5 63.3L-18.0 73.4L-22.5 82.1L-30.7 90.6L-40.2 97.8L-42.1 107.1L-46.5 116.3L-49.1 127.5L-48.4 140.5L-45.9 153.2L-44.0 163.5L-42.1 170.6L-36.4 163.5L-31.3 153.2L-22.5 148.0L-21.2 138.4L-9.8 131.9L-7.9 123.0L-2.8 115.2L-0.3 112.9L-4.1 104.8L-0.9 95.4L-5.4 87.0L-0.3 74.7L8.6 69.7L16.8 63.3L29.5 62.0L44.1 68.4L48.5 58.1L58.0 52.9L70.7 45.0L83.3 36.8L100.4 38.2L102.3 28.5L96.0 14.3L105.5 -0.4L130.8 7.1L149.8 10.0L168.8 -12.5L168.8 -83.5ZM1380.7 -83.5L1380.7 29.9L1380.7 42.3L1382.0 52.9L1380.7 60.7L1386.4 64.6L1391.5 69.7L1401.0 67.1L1410.5 63.3L1420.0 62.0L1427.6 60.7L1437.1 69.0L1429.5 70.9L1423.2 74.7L1413.7 73.4L1404.2 74.7L1394.7 78.4L1394.7 85.8L1400.4 89.4L1399.7 100.1L1395.3 104.8L1389.0 97.8L1383.3 99.0L1378.8 107.1L1379.2 116.3L1379.5 124.1L1375.7 128.6L1371.2 133.5L1364.3 134.0L1361.7 129.7L1353.5 130.8L1347.2 135.1L1338.3 138.9L1332.6 136.2L1326.9 134.0L1321.8 136.8L1315.5 138.4L1314.2 134.0L1309.1 133.0L1308.5 127.5L1311.1 120.8L1310.4 114.0L1314.2 110.6L1311.7 102.5L1312.6 96.6L1308.5 98.4L1304.1 103.6L1298.4 106.0L1297.4 116.3L1297.7 123.0L1300.3 128.6L1300.9 136.2L1302.2 139.5L1297.7 142.7L1291.4 142.1L1288.9 144.8L1281.3 145.3L1276.2 150.1L1273.7 157.4L1270.5 161.5L1267.3 165.6L1261.6 168.6L1255.9 170.6L1255.9 177.6L1250.2 181.0L1246.4 184.5L1243.3 186.4L1238.2 185.4L1237.6 182.5L1233.8 182.5L1235.7 192.2L1231.2 192.7L1224.9 190.8L1216.0 194.1L1217.3 199.4L1225.5 202.7L1230.0 205.5L1233.1 208.3L1234.4 213.8L1238.2 216.6L1238.8 222.0L1238.2 230.1L1236.3 239.8L1233.1 241.5L1223.6 240.2L1214.1 239.8L1204.6 239.3L1195.8 237.6L1188.8 242.4L1187.2 245.0L1190.1 251.0L1190.1 258.6L1190.7 265.4L1188.2 273.6L1185.6 279.7L1189.4 282.2L1190.1 287.4L1189.1 293.8L1195.8 293.8L1200.8 292.2L1205.3 295.4L1207.8 300.1L1211.6 300.9L1217.3 296.2L1223.6 296.2L1231.2 295.4L1234.4 292.2L1240.7 289.0L1244.5 282.6L1247.1 279.7L1243.9 274.4L1247.7 267.0L1251.5 262.8L1255.9 259.5L1260.4 257.8L1266.1 253.6L1266.1 249.3L1264.8 244.1L1270.5 239.8L1275.6 240.6L1280.0 242.0L1285.1 243.3L1289.5 240.2L1293.3 237.1L1298.4 234.5L1302.2 231.9L1307.2 234.5L1310.4 237.1L1311.7 244.1L1315.5 249.3L1320.6 251.9L1325.0 257.0L1331.3 259.1L1335.1 262.8L1339.6 264.5L1342.1 269.1L1345.3 270.3L1347.2 276.1L1348.4 280.2L1345.3 285.8L1347.8 286.2L1351.0 282.6L1354.1 277.7L1353.5 273.6L1351.0 272.0L1352.9 266.2L1356.7 267.0L1360.5 270.3L1363.0 268.7L1359.8 264.1L1353.5 260.8L1347.2 257.4L1348.4 253.6L1342.1 253.6L1336.4 249.3L1332.6 241.5L1329.4 237.1L1325.0 234.5L1323.7 227.4L1324.4 222.9L1330.1 219.7L1332.9 221.1L1332.0 225.6L1333.9 228.3L1336.4 223.8L1340.2 226.5L1342.1 233.6L1347.2 238.9L1353.5 243.3L1359.8 247.6L1364.3 250.1L1368.7 254.4L1369.3 259.5L1368.7 266.2L1372.5 272.0L1375.7 276.9L1378.8 280.2L1380.7 283.0L1380.1 287.4L1382.6 293.0L1383.9 295.8L1387.7 297.7L1390.9 297.0L1392.8 298.1L1390.9 291.4L1392.8 289.0L1392.1 286.6L1395.9 286.2L1398.2 288.2L1398.5 284.2L1394.0 281.0L1390.9 277.7L1391.5 275.3L1389.6 270.3L1389.6 266.2L1391.5 264.5L1394.7 267.8L1397.2 269.5L1400.4 268.3L1397.2 265.4L1399.1 262.4L1404.2 262.0L1410.5 262.8L1412.4 266.2L1411.8 269.1L1411.8 273.6L1415.6 276.1L1416.2 281.0L1413.0 283.4L1417.5 285.8L1418.7 290.6L1419.4 293.8L1424.4 296.2L1429.5 297.0L1433.3 300.1L1439.0 299.3L1440.9 295.0L1446.0 297.0L1451.7 300.9L1456.1 300.9L1461.2 299.3L1466.3 295.4L1471.3 297.0L1475.1 295.4L1473.2 300.9L1472.6 306.4L1473.2 312.5L1471.3 317.1L1468.8 323.2L1467.2 327.0L1465.6 333.0L1463.1 336.7L1458.7 338.9L1453.0 338.9L1450.7 337.8L1452.0 347.0L1453.0 350.7L1456.1 357.2L1459.3 361.5L1462.8 363.3L1464.4 358.6L1466.9 351.4L1467.5 350.7L1466.6 355.0L1465.6 360.1L1468.8 362.9L1472.6 369.4L1477.0 375.7L1481.5 382.8L1484.0 387.6L1488.4 391.1L1492.2 397.3L1493.5 404.8L1497.3 413.0L1502.4 418.4L1506.8 425.8L1510.6 431.8L1515.0 437.8L1516.9 445.0L1517.6 451.6L1519.5 459.4L1521.4 465.3L1527.7 465.0L1534.0 463.3L1540.4 460.7L1547.3 458.1L1554.3 456.2L1561.3 451.6L1568.9 449.0L1576.5 446.3L1577.8 441.7L1584.7 438.7L1593.0 437.1L1596.8 432.4L1603.1 430.5L1608.2 424.4L1612.0 423.8L1611.3 417.1L1615.8 413.7L1617.7 408.3L1622.1 403.5L1624.6 400.1L1621.5 398.0L1617.7 393.2L1612.0 391.1L1606.9 389.0L1603.7 384.8L1603.1 378.6L1603.4 373.6L1601.2 375.7L1600.6 378.6L1596.1 381.0L1591.7 385.5L1586.6 389.0L1580.3 388.7L1574.6 389.7L1572.7 386.9L1572.7 381.4L1571.4 375.0L1568.3 377.8L1567.6 384.2L1564.5 379.3L1563.2 373.6L1560.0 367.9L1556.2 362.9L1553.0 357.2L1549.9 351.4L1549.2 347.0L1553.7 347.0L1559.4 345.6L1563.2 346.3L1567.0 352.9L1570.2 361.5L1575.2 363.7L1579.7 366.5L1585.4 370.8L1591.7 372.2L1598.0 370.1L1603.1 367.6L1606.9 370.1L1608.8 376.4L1613.2 378.6L1619.6 380.0L1625.9 380.3L1632.2 381.4L1638.6 381.7L1644.9 381.4L1651.2 380.7L1657.6 380.3L1663.9 379.6L1668.3 381.4L1670.2 384.2L1673.4 390.4L1677.8 392.5L1682.9 395.9L1691.2 397.0L1684.2 401.1L1684.2 404.8L1689.9 410.3L1695.6 412.3L1701.9 409.6L1704.5 404.2L1705.7 401.4L1707.0 408.3L1707.0 415.7L1707.0 423.1L1708.3 430.5L1710.2 437.1L1712.1 444.4L1715.2 451.6L1718.4 459.4L1720.9 466.6L1724.7 473.7L1728.5 482.7L1731.1 489.2L1734.9 494.3L1737.4 494.9L1740.6 490.4L1746.3 487.2L1748.2 481.4L1751.6 480.8L1751.3 473.1L1753.2 466.6L1754.5 460.7L1753.2 453.6L1753.2 447.6L1757.7 444.7L1761.5 441.7L1767.2 439.1L1772.9 433.1L1777.9 427.8L1783.6 422.4L1789.3 418.4L1795.0 414.4L1796.9 408.3L1802.6 405.5L1808.3 405.5L1814.0 404.8L1818.5 402.8L1820.4 398.7L1824.8 398.7L1827.4 402.1L1828.6 408.3L1830.5 412.3L1834.3 416.4L1838.8 421.8L1842.6 426.4L1843.8 433.1L1844.5 439.7L1842.9 443.7L1847.6 445.3L1852.1 443.7L1855.9 440.4L1860.3 437.1L1861.6 439.1L1864.1 441.7L1864.7 448.3L1866.6 454.9L1868.5 461.4L1870.4 468.5L1871.1 475.0L1869.8 481.4L1868.5 487.9L1867.9 494.3L1869.2 496.5L1872.3 496.2L1874.9 500.0L1878.7 503.9L1880.6 507.0L1881.5 512.1L1883.1 518.5L1885.0 522.9L1887.5 527.7L1891.3 531.2L1895.1 533.4L1900.2 536.6L1902.1 538.2L1905.9 537.8L1905.9 534.4L1903.4 529.9L1901.2 524.8L1900.8 519.8L1900.8 516.0L1898.9 512.1L1895.8 509.0L1893.2 507.0L1889.4 502.9L1885.0 502.6L1882.5 500.0L1879.9 493.0L1878.7 487.9L1874.9 486.6L1874.2 480.2L1876.1 475.0L1878.0 469.8L1879.3 463.3L1882.5 460.1L1885.6 461.4L1885.0 465.9L1890.1 465.9L1893.9 469.2L1897.0 472.4L1898.9 476.3L1902.1 479.5L1907.2 480.2L1910.3 482.7L1909.7 491.4L1913.5 489.8L1918.6 486.6L1921.7 482.7L1924.9 480.2L1930.0 478.2L1935.0 474.3L1937.6 470.5L1938.2 464.6L1938.2 458.8L1936.3 452.2L1933.8 446.3L1931.2 442.7L1926.8 439.1L1922.4 433.8L1919.2 429.1L1916.0 425.1L1916.7 419.7L1920.5 415.7L1922.4 411.6L1926.8 408.9L1931.2 406.2L1936.3 406.2L1940.1 406.9L1942.0 411.0L1940.7 414.4L1944.6 415.0L1945.8 410.3L1945.2 407.6L1950.9 406.9L1956.6 404.8L1961.7 402.8L1965.5 400.1L1969.3 401.4L1973.1 398.7L1978.8 398.0L1984.5 395.2L1989.5 391.1L1994.0 386.2L1998.4 382.8L2002.8 378.6L2004.1 373.6L2007.3 368.7L2010.4 362.9L2014.2 358.6L2016.8 352.9L2018.7 347.8L2014.2 344.8L2009.8 344.1L2014.2 341.9L2018.0 339.7L2017.4 334.5L2013.0 330.0L2011.1 324.7L2007.9 317.1L2003.5 312.5L2000.9 309.5L2004.1 304.8L2007.9 300.9L2012.3 297.0L2018.0 294.2L2022.2 292.2L2019.3 289.8L2014.2 289.4L2009.2 288.2L2004.7 291.4L1999.7 291.4L1999.7 286.6L1994.6 284.2L1991.4 279.3L1993.3 276.1L1999.0 276.1L2002.8 271.2L2008.5 267.0L2013.0 262.4L2018.0 262.0L2019.9 265.4L2016.8 270.3L2013.6 276.1L2016.1 278.9L2020.6 275.3L2026.3 272.0L2032.6 270.3L2036.4 272.8L2039.6 274.4L2038.9 280.2L2036.4 285.0L2041.5 287.4L2045.3 288.2L2047.8 292.2L2045.9 296.2L2047.8 300.9L2047.2 306.4L2045.9 311.0L2048.4 314.5L2053.5 312.5L2057.9 310.6L2063.0 308.7L2065.5 304.8L2066.2 300.9L2065.5 294.6L2064.3 289.8L2061.1 284.2L2058.6 280.2L2054.1 275.7L2053.5 271.2L2058.6 268.7L2064.3 264.5L2067.4 261.2L2067.4 256.1L2071.3 251.0L2073.8 250.1L2077.6 244.1L2082.0 242.4L2087.1 245.8L2092.2 244.6L2097.9 239.8L2102.9 234.5L2107.4 227.4L2111.8 221.1L2116.2 214.7L2121.3 207.3L2125.7 200.8L2129.5 194.1L2134.0 188.4L2135.2 179.6L2136.5 170.6L2140.3 161.5L2141.6 153.2L2140.3 145.9L2134.6 144.8L2129.5 138.4L2123.2 138.4L2116.9 140.5L2112.4 131.9L2103.6 130.8L2110.5 124.1L2117.5 116.3L2123.2 107.1L2132.7 96.6L2142.2 87.0L2151.7 77.2L2164.4 75.9L2177.0 77.2L2189.7 74.7L2201.1 74.7L2210.6 80.9L2218.2 78.4L2227.7 78.4L2224.6 69.7L2230.9 60.7L2239.1 50.3L2249.9 45.0L2259.4 46.3L2262.6 58.1L2268.9 58.1L2275.2 47.6L2281.6 35.5L2287.9 34.1L2283.5 45.0L2278.4 55.5L2272.1 63.3L2262.6 73.4L2258.1 82.1L2249.9 90.6L2240.4 97.8L2238.5 107.1L2234.1 116.3L2231.5 127.5L2232.2 140.5L2234.7 153.2L2236.6 163.5L2238.5 170.6L2244.2 163.5L2249.3 153.2L2258.1 148.0L2259.4 138.4L2270.8 131.9L2272.7 123.0L2277.8 115.2L2280.3 112.9L2276.5 104.8L2279.7 95.4L2275.2 87.0L2280.3 74.7L2289.2 69.7L2297.4 63.3L2310.1 62.0L2324.7 68.4L2329.1 58.1L2338.6 52.9L2351.3 45.0L2363.9 36.8L2381.0 38.2L2382.9 28.5L2376.6 14.3L2386.1 -0.4L2411.4 7.1L2430.4 10.0L2449.4 -12.5L2449.4 -83.5ZM1307.9 121.9L1312.3 120.8L1314.2 125.3L1310.4 126.9ZM1361.1 103.6L1365.5 94.2L1366.8 95.4L1364.3 102.5ZM1209.7 179.1L1213.5 179.6L1219.2 176.1L1223.6 176.6L1226.8 172.6L1233.1 173.6L1238.8 172.1L1245.8 172.1L1252.1 170.1L1254.7 166.6L1250.2 165.1L1252.8 161.5L1256.6 154.3L1254.0 149.6L1247.7 150.1L1247.1 145.9L1244.5 141.6L1244.5 136.2L1238.2 130.8L1235.7 123.0L1231.9 116.3L1225.5 116.3L1229.3 111.7L1231.9 104.8L1233.8 97.8L1226.8 96.6L1220.5 97.8L1224.3 90.6L1226.2 85.8L1217.3 85.8L1214.1 85.8L1211.6 94.2L1209.1 100.1L1209.7 108.3L1206.5 110.6L1210.3 115.2L1210.3 123.0L1214.8 123.0L1215.4 128.6L1219.2 129.7L1224.3 128.6L1223.6 134.0L1227.4 137.3L1226.8 143.7L1224.9 145.3L1217.9 145.9L1217.3 151.1L1219.8 155.3L1216.0 158.9L1212.9 161.5L1218.6 163.5L1225.5 165.1L1228.7 164.6L1224.9 167.6L1218.6 168.6L1214.1 175.1ZM1934.4 422.4L1939.5 417.4L1945.8 416.7L1949.0 419.7L1944.6 426.4L1939.5 429.1L1934.4 427.1ZM1385.8 82.1L1389.6 79.7L1391.5 83.3L1388.3 84.6ZM2134.6 257.4L2139.0 254.4L2140.9 248.4L2147.9 251.0L2153.6 252.7L2158.0 245.0L2166.9 241.5L2166.3 237.1L2159.9 235.4L2153.0 231.0L2145.4 222.9L2143.5 228.3L2142.2 239.8L2135.9 241.5L2134.6 247.6L2132.1 251.0ZM2138.4 257.0L2141.6 257.8L2144.7 269.5L2145.4 277.7L2142.2 283.4L2139.0 287.4L2138.4 294.6L2136.5 300.1L2137.8 304.0L2134.0 308.7L2131.4 307.1L2130.8 304.8L2127.6 307.9L2125.1 309.5L2124.5 311.8L2121.3 312.5L2116.9 312.2L2113.1 310.2L2112.4 314.1L2109.3 317.9L2106.1 321.3L2101.7 317.9L2102.3 314.1L2097.9 311.8L2091.5 314.1L2085.2 314.8L2080.8 317.5L2075.1 317.1L2075.7 314.1L2080.8 311.8L2086.5 306.4L2090.3 305.2L2096.6 305.2L2102.9 304.8L2107.4 304.0L2111.8 297.0L2112.4 291.0L2115.6 289.8L2113.7 295.0L2120.0 293.0L2125.1 287.4L2129.5 282.6L2132.1 276.1L2132.7 269.5L2132.1 264.5L2134.6 259.9L2137.8 262.4L2139.7 259.5ZM1091.2 -7.9L1106.4 -21.9L1131.8 -20.3L1153.3 -15.6L1159.6 -0.4L1150.8 10.0L1128.6 22.9L1115.9 21.5L1102.6 16.5L1106.4 7.1L1093.8 1.1ZM1207.2 145.9L1206.5 137.3L1210.3 134.0L1208.4 127.5L1202.7 125.3L1197.7 124.1L1192.0 128.6L1191.3 134.0L1183.7 135.1L1182.5 142.7L1186.3 148.0L1184.4 154.3L1180.5 158.4L1182.5 163.5L1187.5 164.6L1193.9 161.5L1200.2 158.4L1205.3 157.4L1207.2 152.2ZM2045.0 322.5L2047.8 320.6L2050.0 321.3L2047.2 323.2ZM2068.1 323.2L2071.9 317.9L2075.7 317.9L2080.1 320.9L2082.0 326.2L2078.9 333.7L2075.7 338.2L2073.8 339.7L2070.6 337.5L2070.6 330.0L2067.4 327.0ZM2009.8 427.1L2016.1 427.5L2020.6 427.8L2019.9 435.1L2021.8 441.1L2016.1 445.0L2016.1 450.9L2020.6 456.2L2025.0 457.5L2030.7 458.1L2032.0 465.9L2026.9 462.7L2022.5 459.4L2017.4 457.5L2012.3 458.8L2009.8 454.9L2011.7 452.2L2007.3 450.9L2005.4 442.4L2008.5 439.7L2008.5 433.1ZM1558.1 623.0L1561.9 629.5L1564.5 637.3L1565.7 645.8L1561.3 649.1L1560.6 655.7L1558.7 663.7L1556.2 672.4L1553.7 681.2L1549.9 691.4L1546.7 701.7L1544.2 709.3L1538.5 712.1L1532.1 714.2L1525.8 710.7L1522.6 704.5L1520.7 696.2L1520.1 688.0L1523.3 681.2L1527.1 674.4L1526.4 666.4L1524.5 658.4L1527.7 651.1L1534.0 648.4L1540.4 646.5L1545.4 641.2L1549.9 636.0L1552.4 631.4L1555.6 625.6ZM1261.0 272.8L1266.1 269.9L1267.7 272.8L1265.1 275.3ZM2018.7 500.7L2021.8 495.6L2027.5 491.7L2033.2 492.4L2036.4 489.2L2040.8 484.7L2045.3 488.5L2047.2 496.8L2045.3 505.8L2040.2 510.9L2041.5 503.2L2038.3 508.3L2032.6 506.4L2031.3 499.4L2026.9 498.8L2019.9 502.6ZM1349.7 114.0L1354.1 101.3L1352.9 101.3L1350.3 110.6ZM1988.3 493.0L1994.6 485.3L2002.2 476.9L2003.5 479.5L1997.1 487.9L1990.2 493.6ZM2033.2 466.6L2039.6 466.6L2042.1 475.0L2038.9 481.4L2036.4 481.4L2037.0 473.7L2033.9 473.7ZM2018.7 471.1L2025.6 472.4L2025.0 476.9L2019.9 479.5L2018.0 476.3ZM2024.4 476.9L2028.2 476.9L2026.9 485.3L2021.8 485.9L2024.4 480.8ZM2027.5 479.5L2031.3 475.0L2029.4 482.7L2026.9 486.6ZM2007.9 460.7L2013.6 460.7L2015.5 466.6L2012.3 468.5L2008.5 463.3ZM1421.3 300.5L1424.4 298.5L1423.8 301.7L1421.9 302.5ZM1410.5 275.3L1414.3 276.9L1411.8 278.1ZM1409.9 281.4L1411.5 283.4L1409.9 284.2ZM1384.5 89.4L1390.2 85.2L1393.4 87.6L1388.3 90.6L1385.2 93.6ZM2144.7 136.2L2149.2 135.1L2151.7 146.9L2153.6 159.4L2153.0 171.6L2156.8 179.6L2161.8 189.3L2153.0 186.4L2151.1 198.9L2149.2 204.5L2154.2 210.1L2154.9 216.6L2149.8 212.9L2146.0 217.5L2144.7 210.1L2146.0 200.8L2144.7 191.3L2146.6 180.6L2146.0 169.6L2143.5 159.4L2144.1 146.9ZM1297.7 262.0L1304.1 259.1L1307.2 264.5L1306.6 275.3L1302.8 276.9L1299.0 277.7L1299.0 270.3ZM1356.7 -83.5L1354.8 31.3L1356.0 42.3L1354.8 55.5L1355.4 60.7L1361.7 64.6L1365.5 70.9L1361.7 77.2L1356.7 83.3L1351.6 88.2L1351.0 97.8L1349.7 108.3L1345.9 115.2L1338.9 115.2L1335.8 121.9L1330.1 123.0L1326.9 120.8L1325.6 114.0L1326.9 107.1L1323.1 100.1L1320.6 93.0L1317.4 83.3L1315.5 78.4L1313.0 70.9L1311.7 77.2L1307.2 82.1L1301.5 88.2L1295.2 92.4L1288.9 91.8L1282.5 85.8L1280.6 77.2L1278.7 65.9L1277.5 55.5L1277.5 45.0L1282.5 36.8L1288.9 31.3L1296.5 21.5L1306.0 14.3L1309.1 -83.5ZM2082.7 322.1L2087.1 317.1L2093.4 314.5L2098.5 315.6L2099.1 318.7L2096.0 322.5L2092.2 320.9L2088.4 326.6L2085.2 324.7ZM1324.7 286.6L1330.1 284.2L1337.7 285.4L1344.6 283.8L1342.1 291.4L1341.5 296.2L1336.4 294.2L1330.1 291.4L1325.6 289.0ZM1751.3 484.0L1754.5 485.9L1760.2 492.4L1764.3 499.4L1762.7 505.8L1756.4 508.6L1752.6 506.4L1751.3 500.7L1751.3 493.6ZM2006.6 393.2L2012.3 382.8L2016.1 381.4L2018.0 384.8L2014.9 395.2L2011.1 403.5L2007.9 399.4ZM1316.1 119.7L1322.5 115.2L1325.6 119.7L1323.1 125.3L1319.9 126.9L1316.8 124.1ZM2148.5 614.6L2154.9 626.2L2154.9 637.3L2161.2 637.3L2166.3 642.5L2167.5 652.4L2171.3 662.3L2173.2 668.4L2181.5 673.1L2188.4 677.8L2193.5 688.0L2201.1 693.4L2201.1 699.6L2207.5 703.8L2214.4 711.4L2216.3 718.5L2218.2 727.7L2218.9 737.0L2215.7 747.2L2214.4 757.6L2210.6 764.3L2205.6 770.3L2203.7 775.7L2201.1 783.3L2197.3 791.1L2195.4 800.6L2191.0 805.4L2183.4 806.2L2177.0 811.0L2172.6 815.9L2167.5 811.0L2162.5 808.6L2154.9 813.5L2146.6 810.2L2139.0 807.0L2132.7 801.4L2129.5 791.1L2121.9 788.0L2123.2 781.8L2118.8 784.9L2113.7 785.7L2116.9 778.0L2119.4 769.6L2115.0 774.1L2107.4 781.8L2102.3 779.5L2097.9 769.6L2091.5 762.0L2083.3 760.6L2075.7 756.8L2066.2 757.6L2056.7 761.3L2044.0 762.8L2034.5 768.1L2028.2 774.9L2018.7 774.9L2006.0 775.3L1996.5 780.3L1990.2 784.1L1980.7 781.8L1975.0 778.0L1974.3 771.9L1978.8 769.6L1978.8 760.6L1976.9 751.6L1973.7 742.1L1969.3 731.3L1966.7 722.7L1964.8 714.2L1964.2 705.9L1966.7 697.6L1966.1 689.3L1971.2 688.0L1979.4 681.8L1987.0 679.8L1996.5 677.8L2004.7 675.1L2013.6 672.4L2019.9 665.0L2019.9 657.0L2025.0 652.4L2028.8 657.7L2033.2 651.7L2037.7 645.2L2044.0 639.2L2050.3 635.3L2056.7 641.9L2063.0 641.9L2067.4 634.7L2071.3 628.2L2075.7 624.3L2082.0 624.3L2085.8 619.1L2092.2 621.7L2101.0 623.6L2111.2 622.3L2110.5 629.5L2106.7 636.0L2103.6 641.9L2110.5 647.1L2118.1 651.1L2126.4 656.4L2132.7 659.7L2138.4 655.7L2142.2 645.8L2142.8 636.0L2144.1 626.2L2145.4 618.5ZM1971.2 598.2L1975.6 597.6L1978.8 599.8L1975.6 602.4L1971.8 599.8ZM1980.0 599.2L1985.1 599.2L1983.8 603.0L1980.0 602.4ZM1985.7 599.8L1993.3 597.9L1999.7 600.4L1996.5 602.7L1987.0 604.0ZM2005.4 600.4L2012.3 599.8L2023.7 598.5L2024.4 601.1L2015.5 603.0L2005.4 602.4ZM1999.7 606.9L2006.0 605.6L2011.1 610.1L2006.0 612.0L2000.9 608.8ZM2028.2 612.0L2034.5 605.6L2038.9 601.7L2047.2 599.8L2051.6 599.8L2044.0 604.9L2037.7 608.1L2032.0 612.0ZM1936.3 536.9L1940.1 533.7L1944.6 535.6L1950.3 536.9L1951.5 530.6L1959.1 527.4L1965.5 522.3L1969.3 517.2L1975.6 514.7L1980.7 508.3L1985.1 502.3L1988.9 504.5L1991.4 509.0L1996.5 511.5L2000.9 513.4L1995.2 518.5L1990.8 520.4L1992.1 525.5L1990.2 531.2L1993.3 536.3L1998.4 540.1L1992.1 542.0L1990.2 547.7L1989.5 552.7L1983.8 557.8L1982.6 565.4L1980.7 569.9L1973.1 572.4L1968.0 568.0L1961.7 566.7L1954.7 568.6L1948.4 565.4L1943.9 561.6L1942.6 555.3L1937.6 550.2L1936.9 543.9L1935.7 540.1ZM2053.5 534.4L2056.7 532.5L2056.0 538.2L2061.1 537.5L2057.3 542.0L2060.5 544.5L2056.0 545.1L2056.0 551.5L2053.5 546.4L2053.5 540.1ZM257.2 418.7L260.1 415.7L263.6 418.4L263.2 421.1L259.4 424.1L257.9 421.8ZM1912.2 589.6L1917.3 583.8L1923.6 584.2L1931.9 586.4L1939.5 589.9L1946.5 587.3L1952.2 588.9L1959.1 590.2L1965.5 595.3L1971.2 596.0L1970.5 601.7L1962.9 599.2L1955.3 599.2L1947.7 598.5L1939.5 595.6L1932.5 596.0L1925.5 594.0L1919.8 593.4L1914.1 590.2ZM1681.6 903.5L1691.8 904.4L1692.4 909.3L1684.2 909.3ZM2185.3 581.9L2192.9 581.3L2201.1 581.3L2206.2 577.5L2210.0 573.0L2210.6 578.1L2204.9 582.6L2198.6 586.4L2191.0 585.1ZM2075.7 551.5L2083.9 548.9L2091.5 550.8L2096.0 554.0L2096.6 560.3L2101.0 567.3L2107.4 561.0L2115.0 557.2L2123.2 557.8L2132.7 561.0L2139.0 562.9L2148.5 566.7L2158.0 570.5L2164.4 573.7L2169.4 580.0L2177.0 583.8L2182.1 587.7L2178.3 592.1L2184.6 597.2L2191.6 603.6L2197.3 611.4L2201.1 613.9L2194.1 612.6L2184.6 610.7L2177.0 606.9L2170.7 598.5L2163.1 595.3L2158.0 595.3L2154.2 599.8L2151.7 604.3L2145.4 604.9L2139.0 604.3L2132.7 598.5L2125.1 599.2L2120.0 599.2L2123.8 592.8L2123.8 587.7L2120.0 581.3L2113.7 577.5L2107.4 574.9L2101.0 574.3L2094.7 570.5L2089.6 571.8L2087.1 567.3L2082.0 564.1L2089.6 562.2L2094.1 560.3L2087.1 559.7L2082.0 559.1L2077.0 555.9L2075.1 552.7ZM2201.1 562.9L2208.7 567.3L2215.1 574.3L2213.8 575.6L2207.5 569.2ZM59.3 778.7L63.1 783.3L69.4 788.0L72.6 797.4L77.6 796.6L79.5 803.8L87.8 807.0L94.7 803.8L95.4 811.0L91.6 816.7L86.5 820.0L85.2 827.4L79.5 835.8L75.1 836.7L72.6 834.2L74.5 827.4L72.6 822.5L66.9 818.4L71.3 813.5L72.6 806.2L70.7 799.0L67.5 792.7L62.4 785.7ZM2339.9 778.7L2343.7 783.3L2350.0 788.0L2353.2 797.4L2358.2 796.6L2360.1 803.8L2368.4 807.0L2375.3 803.8L2376.0 811.0L2372.2 816.7L2367.1 820.0L2365.8 827.4L2360.1 835.8L2355.7 836.7L2353.2 834.2L2355.1 827.4L2353.2 822.5L2347.5 818.4L2351.9 813.5L2353.2 806.2L2351.3 799.0L2348.1 792.7L2343.0 785.7ZM59.3 827.4L62.4 831.6L68.8 834.2L69.4 838.4L65.6 844.4L61.2 851.3L60.5 856.5L51.7 860.1L49.1 869.0L46.0 875.3L39.6 880.8L32.0 880.8L25.7 877.2L20.6 874.4L23.1 866.3L30.7 859.2L39.0 853.9L46.0 848.7L50.4 841.8L54.8 834.2ZM2339.9 827.4L2343.0 831.6L2349.4 834.2L2350.0 838.4L2346.2 844.4L2341.8 851.3L2341.1 856.5L2332.3 860.1L2329.7 869.0L2326.6 875.3L2320.2 880.8L2312.6 880.8L2306.3 877.2L2301.2 874.4L2303.7 866.3L2311.3 859.2L2319.6 853.9L2326.6 848.7L2331.0 841.8L2335.4 834.2ZM2056.7 565.4L2063.0 564.1L2073.2 566.0L2074.4 570.5L2066.2 568.0L2056.7 568.0ZM2044.0 566.7L2049.7 566.0L2051.6 569.2L2047.2 571.1L2044.0 569.2ZM2225.8 581.3L2230.9 584.5L2233.4 589.6L2229.6 588.3ZM2237.9 588.9L2243.6 592.8L2240.4 592.8ZM2256.9 605.6L2264.5 608.8L2260.7 608.8ZM2263.8 599.8L2267.6 606.2L2265.1 604.9ZM2250.5 594.7L2258.1 599.8L2254.3 598.5ZM2004.7 541.3L2011.1 538.2L2018.7 540.1L2026.3 540.4L2033.2 538.8L2038.3 536.3L2035.1 543.2L2026.9 544.2L2018.7 543.2L2011.7 543.9L2007.3 547.7L2006.0 552.1L2011.1 555.3L2016.8 552.1L2025.6 550.8L2027.5 552.7L2019.9 556.5L2016.1 558.8L2021.2 566.7L2026.3 573.0L2023.1 576.8L2019.3 576.2L2015.5 574.9L2012.3 568.0L2011.7 563.5L2008.5 565.4L2008.5 571.8L2008.5 581.3L2003.5 581.9L2002.2 574.9L2002.8 568.6L1998.4 564.1L2000.9 557.8L2002.2 551.5L2004.7 546.4ZM1849.5 510.9L1857.1 513.4L1863.5 513.4L1868.5 519.1L1874.2 524.2L1880.6 529.3L1885.6 533.1L1893.2 538.2L1898.9 542.6L1903.4 547.0L1901.5 552.7L1907.8 557.8L1913.5 561.6L1917.3 566.7L1916.7 574.3L1916.0 583.2L1909.1 583.2L1906.5 578.7L1900.2 575.6L1893.9 571.1L1888.8 564.1L1885.0 559.1L1881.8 552.7L1878.0 547.0L1874.2 542.6L1871.1 536.3L1865.4 531.2L1860.3 525.5L1855.2 521.0L1850.8 516.0ZM2162.5 829.1L2170.7 832.5L2180.2 830.0L2185.3 831.6L2185.3 841.8L2182.7 850.4L2177.0 853.9L2170.7 853.0L2166.3 845.2L2164.4 835.8ZM4.1 676.4L13.6 682.5L22.5 690.0L20.0 691.4L10.5 685.2ZM2284.7 676.4L2294.2 682.5L2303.1 690.0L2300.6 691.4L2291.1 685.2ZM88.4 659.0L96.0 658.4L96.6 663.0L89.7 663.7ZM2369.0 659.0L2376.6 658.4L2377.2 663.0L2370.3 663.7ZM97.9 651.7L105.5 650.4L102.3 654.4ZM2378.5 651.7L2386.1 650.4L2382.9 654.4Z" fill="#fff" stroke="#c7cfdc" stroke-width="2" stroke-linejoin="round" transform="translate(-1.9,0.7)"/><path d="M837.2 180.6L846.7 181.5L854.3 187.4L849.9 188.4L840.4 184.5ZM749.1 370.8L754.2 369.4L756.7 373.6L752.3 371.5ZM749.1 382.1L752.9 381.4L753.6 387.6L750.4 386.9ZM779.5 408.9L782.7 408.3L783.3 410.6L779.5 410.6ZM708.0 404.5L711.8 400.7L718.1 397.3L724.4 395.2L731.4 395.9L737.1 397.3L744.1 400.7L751.7 402.1L756.7 405.5L764.3 408.9L770.7 412.3L775.7 415.7L773.2 417.4L765.6 417.7L754.2 418.1L756.7 413.7L750.4 412.3L746.6 406.9L737.7 404.8L729.5 402.8L725.1 400.1L718.7 402.1L713.7 404.8ZM858.1 930.3L865.7 926.2L872.0 927.2L868.9 933.4L860.6 934.4ZM872.0 926.7L879.6 927.2L879.6 932.3L872.0 935.4ZM910.0 -15.6L916.4 7.1L922.7 21.5L929.0 38.2L935.4 52.9L944.9 59.4L954.4 64.6L962.0 69.7L969.6 69.7L973.4 60.7L975.9 49.0L979.7 32.7L987.3 17.2L992.4 -0.4L1005.1 -15.6L1005.1 -83.5L910.0 -83.5ZM403.2 137.3L410.8 137.3L411.5 146.9L415.9 157.4L410.8 152.2L405.8 145.9ZM774.2 427.8L781.4 426.4L786.5 426.4L784.6 421.1L780.8 418.4L786.5 417.7L791.6 418.4L799.2 418.4L803.6 421.8L809.3 423.8L812.5 427.1L808.7 428.5L802.3 428.5L796.6 428.5L792.8 432.4L788.4 429.1L780.2 429.1ZM749.5 428.1L754.8 427.1L761.8 429.1L762.4 431.1L756.7 432.1L750.4 429.5ZM266.4 97.8L274.6 93.0L281.6 94.2L281.0 101.3L273.4 106.0L266.4 103.6ZM870.1 201.7L874.6 195.1L878.4 185.4L882.8 173.6L886.6 166.6L893.6 164.6L891.7 174.6L886.6 182.5L893.6 181.5L901.2 185.4L906.2 191.3L909.4 200.8L911.9 206.4L907.5 211.0L900.5 208.3L893.6 209.2L889.1 203.6L879.6 202.7ZM181.5 -15.6L206.9 -23.5L222.7 7.1L213.2 7.1L201.8 27.1L196.7 38.2L193.6 47.6L200.5 56.8L208.1 69.7L218.3 69.7L219.5 80.9L229.0 83.3L239.8 83.3L249.3 84.6L247.4 97.8L239.8 106.0L228.4 116.3L216.4 124.1L201.8 131.9L213.2 130.8L222.7 125.3L232.2 120.8L241.7 116.3L253.7 104.8L262.6 95.4L270.2 88.2L274.0 77.2L280.3 64.6L285.4 56.8L295.5 52.9L287.9 60.7L284.1 77.2L292.4 75.9L301.9 69.7L307.0 59.4L314.6 55.5L322.2 62.0L333.6 68.4L349.4 68.4L360.2 73.4L371.6 82.1L381.1 90.6L386.8 85.8L390.6 93.0L396.9 99.0L401.3 110.6L409.6 118.5L415.9 125.3L420.3 131.9L422.2 140.5L429.2 146.9L433.7 157.4L437.5 167.6L446.3 173.6L453.9 179.6L461.5 184.5L466.0 187.4L468.5 191.3L470.4 198.9L469.8 205.5L466.6 202.7L467.9 197.9L461.5 197.0L455.8 195.1L457.7 206.4L460.3 215.6L460.3 226.5L459.0 237.1L457.1 245.8L459.0 254.4L457.7 266.2L461.5 274.4L464.1 281.0L467.2 285.8L470.4 288.2L472.3 294.6L473.6 298.5L478.0 304.8L481.8 312.5L488.8 314.8L495.1 317.1L498.3 319.4L502.7 324.7L504.0 328.5L506.5 335.2L510.9 343.4L515.4 350.7L521.7 357.9L522.3 362.2L517.3 363.7L521.7 368.7L528.0 370.8L534.4 377.1L535.6 384.8L542.6 389.7L548.9 397.3L552.1 395.2L547.0 388.3L542.6 379.3L538.8 371.5L532.5 363.7L528.7 355.8L523.6 348.5L519.2 341.2L518.5 334.5L526.8 336.7L529.9 342.6L533.7 349.9L538.8 357.2L543.2 362.2L550.2 368.7L553.4 374.3L558.5 380.7L564.8 387.6L571.1 394.6L576.2 402.1L578.7 408.3L576.2 414.4L581.9 421.1L589.5 427.1L598.4 431.1L606.0 435.1L612.9 438.4L621.8 442.4L631.3 444.4L638.9 444.4L646.5 442.4L652.8 445.7L661.1 452.9L668.0 457.5L675.6 459.4L683.3 462.0L690.2 462.7L692.8 465.3L697.8 469.8L702.3 475.6L702.3 481.4L707.3 484.7L709.9 485.9L715.6 489.8L716.2 493.0L720.6 494.9L726.3 494.3L731.4 498.1L733.3 500.7L737.7 499.4L736.5 494.3L740.9 490.4L745.3 489.2L749.8 493.0L751.0 496.8L754.2 500.0L758.0 498.8L756.1 491.7L751.7 487.2L745.3 485.3L739.6 487.2L733.9 489.8L729.5 490.4L725.1 487.9L720.6 483.4L716.2 477.6L714.9 471.1L716.8 463.3L718.1 455.5L718.7 450.3L713.7 445.7L707.3 444.4L699.7 445.0L691.5 445.0L685.2 445.0L683.3 443.7L686.4 437.1L687.7 428.5L690.9 421.1L693.4 414.4L695.9 408.3L689.6 406.2L682.0 407.6L673.7 410.3L671.8 417.7L668.0 424.4L663.0 426.4L655.4 427.8L647.1 429.1L640.8 425.8L636.4 421.1L631.9 414.4L628.1 406.2L626.2 399.4L626.9 389.7L628.8 380.7L630.0 373.6L628.8 365.8L632.6 359.4L638.9 355.8L645.2 351.4L651.6 349.2L659.2 349.9L666.1 352.1L671.8 353.6L679.5 354.3L678.2 347.0L684.5 344.8L691.5 344.8L699.1 344.1L704.8 348.5L711.8 347.0L718.1 351.4L721.9 357.2L721.9 364.4L726.3 372.2L728.2 376.4L732.0 381.4L735.8 381.4L738.4 376.4L739.0 369.4L735.8 360.1L732.7 351.4L730.1 343.4L731.4 336.0L734.6 330.0L739.6 326.2L745.3 320.9L751.7 317.9L757.4 312.5L761.8 311.0L766.9 307.1L765.6 300.1L763.7 294.6L761.8 289.8L762.4 284.2L761.2 276.1L764.3 279.3L765.0 289.0L768.1 286.6L770.0 281.0L767.5 274.4L771.3 277.7L775.7 272.0L777.0 266.2L777.6 262.8L784.6 262.8L789.7 261.2L794.7 257.0L798.5 256.1L802.3 255.3L801.1 251.9L797.3 250.1L797.9 244.1L801.1 238.9L806.8 236.3L813.1 232.7L819.5 230.1L822.0 226.5L829.0 223.8L835.3 220.2L838.5 223.8L829.0 231.0L826.4 237.1L831.5 239.8L838.5 232.7L844.8 229.2L853.0 226.5L859.4 223.8L865.7 218.4L863.8 209.2L858.1 215.6L853.0 219.3L844.8 219.3L838.5 214.7L834.7 208.3L832.1 200.8L836.6 198.9L838.5 192.2L832.8 187.4L823.3 188.4L813.8 193.2L806.2 199.8L800.4 207.3L794.7 210.1L799.2 204.5L803.6 197.9L810.0 190.3L818.2 185.4L824.5 177.6L834.0 176.6L843.5 176.6L853.0 176.6L862.5 176.6L870.1 171.6L878.4 165.6L886.0 164.6L892.3 157.4L892.9 146.9L886.0 140.5L881.5 135.1L873.3 129.7L864.4 121.9L856.8 109.4L854.3 95.4L848.0 83.3L841.6 73.4L836.6 64.6L830.9 74.7L824.5 83.3L815.0 88.2L806.2 82.1L803.6 70.9L804.9 56.8L797.3 52.9L789.7 46.3L778.3 38.2L764.3 36.8L751.7 35.5L754.2 50.3L753.6 63.3L755.5 73.4L749.1 84.6L755.5 94.2L759.9 106.0L759.9 118.5L752.9 125.3L744.1 131.9L745.3 143.7L746.6 154.3L746.0 163.5L741.5 167.6L735.8 164.6L729.5 157.4L725.1 149.0L724.4 136.2L723.8 125.3L713.7 124.1L704.2 120.8L693.4 116.3L684.5 108.3L673.7 103.6L661.1 104.8L656.6 93.0L648.4 83.3L645.9 68.4L649.0 55.5L656.6 43.6L663.0 32.7L672.5 20.1L675.6 -83.5L181.5 -83.5ZM2462.1 -15.6L2487.5 -23.5L2503.3 7.1L2493.8 7.1L2482.4 27.1L2477.3 38.2L2474.2 47.6L2481.1 56.8L2488.7 69.7L2498.9 69.7L2500.1 80.9L2509.6 83.3L2520.4 83.3L2529.9 84.6L2528.0 97.8L2520.4 106.0L2509.0 116.3L2497.0 124.1L2482.4 131.9L2493.8 130.8L2503.3 125.3L2512.8 120.8L2522.3 116.3L2534.3 104.8L2543.2 95.4L2550.8 88.2L2554.6 77.2L2560.9 64.6L2566.0 56.8L2576.1 52.9L2568.5 60.7L2564.7 77.2L2573.0 75.9L2582.5 69.7L2587.6 59.4L2595.2 55.5L2602.8 62.0L2614.2 68.4L2630.0 68.4L2640.8 73.4L2652.2 82.1L2661.7 90.6L2667.4 85.8L2671.2 93.0L2677.5 99.0L2681.9 110.6L2690.2 118.5L2696.5 125.3L2700.9 131.9L2702.8 140.5L2709.8 146.9L2714.3 157.4L2718.1 167.6L2726.9 173.6L2734.5 179.6L2742.1 184.5L2746.6 187.4L2749.1 191.3L2751.0 198.9L2750.4 205.5L2747.2 202.7L2748.5 197.9L2742.1 197.0L2736.4 195.1L2738.3 206.4L2740.9 215.6L2740.9 226.5L2739.6 237.1L2737.7 245.8L2739.6 254.4L2738.3 266.2L2742.1 274.4L2744.7 281.0L2747.8 285.8L2751.0 288.2L2752.9 294.6L2754.2 298.5L2758.6 304.8L2762.4 312.5L2769.4 314.8L2775.7 317.1L2778.9 319.4L2783.3 324.7L2784.6 328.5L2787.1 335.2L2791.5 343.4L2796.0 350.7L2802.3 357.9L2802.9 362.2L2797.9 363.7L2802.3 368.7L2808.6 370.8L2815.0 377.1L2816.2 384.8L2823.2 389.7L2829.5 397.3L2832.7 395.2L2827.6 388.3L2823.2 379.3L2819.4 371.5L2813.1 363.7L2809.3 355.8L2804.2 348.5L2799.8 341.2L2799.1 334.5L2807.4 336.7L2810.5 342.6L2814.3 349.9L2819.4 357.2L2823.8 362.2L2830.8 368.7L2834.0 374.3L2839.1 380.7L2845.4 387.6L2851.7 394.6L2856.8 402.1L2859.3 408.3L2856.8 414.4L2862.5 421.1L2870.1 427.1L2879.0 431.1L2886.6 435.1L2893.5 438.4L2902.4 442.4L2911.9 444.4L2919.5 444.4L2927.1 442.4L2933.4 445.7L2941.7 452.9L2948.6 457.5L2956.2 459.4L2963.9 462.0L2970.8 462.7L2973.4 465.3L2978.4 469.8L2982.9 475.6L2982.9 481.4L2987.9 484.7L2990.5 485.9L2996.2 489.8L2996.8 493.0L3001.2 494.9L3006.9 494.3L3012.0 498.1L3013.9 500.7L3018.3 499.4L3017.1 494.3L3021.5 490.4L3025.9 489.2L3030.4 493.0L3031.6 496.8L3034.8 500.0L3038.6 498.8L3036.7 491.7L3032.3 487.2L3025.9 485.3L3020.2 487.2L3014.5 489.8L3010.1 490.4L3005.7 487.9L3001.2 483.4L2996.8 477.6L2995.5 471.1L2997.4 463.3L2998.7 455.5L2999.3 450.3L2994.3 445.7L2987.9 444.4L2980.3 445.0L2972.1 445.0L2965.8 445.0L2963.9 443.7L2967.0 437.1L2968.3 428.5L2971.5 421.1L2974.0 414.4L2976.5 408.3L2970.2 406.2L2962.6 407.6L2954.3 410.3L2952.4 417.7L2948.6 424.4L2943.6 426.4L2936.0 427.8L2927.7 429.1L2921.4 425.8L2917.0 421.1L2912.5 414.4L2908.7 406.2L2906.8 399.4L2907.5 389.7L2909.4 380.7L2910.6 373.6L2909.4 365.8L2913.2 359.4L2919.5 355.8L2925.8 351.4L2932.2 349.2L2939.8 349.9L2946.7 352.1L2952.4 353.6L2960.1 354.3L2958.8 347.0L2965.1 344.8L2972.1 344.8L2979.7 344.1L2985.4 348.5L2992.4 347.0L2998.7 351.4L3002.5 357.2L3002.5 364.4L3006.9 372.2L3008.8 376.4L3012.6 381.4L3016.4 381.4L3019.0 376.4L3019.6 369.4L3016.4 360.1L3013.3 351.4L3010.7 343.4L3012.0 336.0L3015.2 330.0L3020.2 326.2L3025.9 320.9L3032.3 317.9L3038.0 312.5L3042.4 311.0L3047.5 307.1L3046.2 300.1L3044.3 294.6L3042.4 289.8L3043.0 284.2L3041.8 276.1L3044.9 279.3L3045.6 289.0L3048.7 286.6L3050.6 281.0L3048.1 274.4L3051.9 277.7L3056.3 272.0L3057.6 266.2L3058.2 262.8L3065.2 262.8L3070.3 261.2L3075.3 257.0L3079.1 256.1L3082.9 255.3L3081.7 251.9L3077.9 250.1L3078.5 244.1L3081.7 238.9L3087.4 236.3L3093.7 232.7L3100.1 230.1L3102.6 226.5L3109.6 223.8L3115.9 220.2L3119.1 223.8L3109.6 231.0L3107.0 237.1L3112.1 239.8L3119.1 232.7L3125.4 229.2L3133.6 226.5L3140.0 223.8L3146.3 218.4L3144.4 209.2L3138.7 215.6L3133.6 219.3L3125.4 219.3L3119.1 214.7L3115.3 208.3L3112.7 200.8L3117.2 198.9L3119.1 192.2L3113.4 187.4L3103.9 188.4L3094.4 193.2L3086.8 199.8L3081.0 207.3L3075.3 210.1L3079.8 204.5L3084.2 197.9L3090.6 190.3L3098.8 185.4L3105.1 177.6L3114.6 176.6L3124.1 176.6L3133.6 176.6L3143.1 176.6L3150.7 171.6L3159.0 165.6L3166.6 164.6L3172.9 157.4L3173.5 146.9L3166.6 140.5L3162.1 135.1L3153.9 129.7L3145.0 121.9L3137.4 109.4L3134.9 95.4L3128.6 83.3L3122.2 73.4L3117.2 64.6L3111.5 74.7L3105.1 83.3L3095.6 88.2L3086.8 82.1L3084.2 70.9L3085.5 56.8L3077.9 52.9L3070.3 46.3L3058.9 38.2L3044.9 36.8L3032.3 35.5L3034.8 50.3L3034.2 63.3L3036.1 73.4L3029.7 84.6L3036.1 94.2L3040.5 106.0L3040.5 118.5L3033.5 125.3L3024.7 131.9L3025.9 143.7L3027.2 154.3L3026.6 163.5L3022.1 167.6L3016.4 164.6L3010.1 157.4L3005.7 149.0L3005.0 136.2L3004.4 125.3L2994.3 124.1L2984.8 120.8L2974.0 116.3L2965.1 108.3L2954.3 103.6L2941.7 104.8L2937.2 93.0L2929.0 83.3L2926.5 68.4L2929.6 55.5L2937.2 43.6L2943.6 32.7L2953.1 20.1L2956.2 -83.5L2462.1 -83.5ZM187.9 64.6L195.5 64.0L197.4 68.4L192.3 70.3ZM2468.5 64.6L2476.1 64.0L2478.0 68.4L2472.9 70.3ZM837.8 210.1L845.4 212.9L853.0 213.3L849.9 217.5L841.6 215.6ZM819.8 427.5L826.4 427.1L829.9 428.5L828.3 430.5L820.1 430.8ZM755.5 491.7L758.6 495.6L761.2 490.4L765.0 485.9L767.5 479.5L771.3 476.3L775.7 474.3L782.1 474.3L787.8 471.1L792.8 467.2L794.7 470.5L790.9 474.3L792.8 477.6L796.0 474.3L801.1 473.1L802.3 468.9L804.3 473.1L810.6 474.3L813.8 478.2L821.4 479.5L827.7 478.9L834.0 482.1L840.4 479.5L846.7 478.2L853.0 478.2L849.2 481.4L854.9 483.4L860.0 487.2L863.8 492.4L870.1 495.6L875.2 501.3L881.5 506.4L887.9 509.0L895.5 509.0L903.7 510.2L910.0 512.1L916.4 517.2L920.8 520.4L922.7 527.4L927.1 534.4L929.7 540.1L925.2 545.1L932.2 545.8L938.6 548.3L941.7 550.8L948.1 550.8L955.7 554.0L962.0 557.8L965.2 562.2L971.5 561.6L979.7 564.1L987.3 564.8L993.7 564.8L1001.3 569.2L1008.2 574.9L1014.6 578.7L1022.2 580.0L1024.7 587.7L1025.3 597.2L1022.2 605.6L1015.8 612.6L1010.1 619.1L1005.1 626.9L999.4 631.4L998.7 641.2L998.7 649.1L997.5 659.7L994.3 665.7L993.7 673.7L990.5 678.4L986.7 685.2L986.1 690.0L979.7 695.8L972.1 696.2L963.9 697.6L958.2 701.7L951.9 703.8L944.9 708.6L939.2 714.2L937.9 721.3L937.9 729.9L935.4 736.3L929.7 742.1L925.9 750.9L920.2 758.3L915.1 762.8L911.3 769.6L906.9 774.9L903.7 779.5L897.4 782.6L889.8 782.6L883.4 779.5L877.1 776.4L875.2 778.7L881.5 784.1L883.4 789.6L886.6 795.1L883.4 803.8L879.0 809.4L870.1 813.5L859.4 815.1L851.8 814.3L851.8 823.3L850.5 830.8L843.5 832.9L835.3 830.0L833.4 837.5L839.1 842.7L842.3 846.1L835.3 848.7L832.1 857.4L830.2 866.3L822.6 869.0L818.2 877.2L823.3 884.5L829.0 891.1L824.5 898.7L817.6 907.4L811.2 915.2L808.1 921.2L810.0 929.3L812.5 936.5L813.8 942.7L817.6 953.3L825.2 959.8L832.8 962.0L825.8 966.4L819.5 975.4L808.7 970.9L799.2 965.3L789.7 957.7L781.4 949.1L773.8 938.5L769.4 925.2L767.5 911.3L767.5 896.8L766.9 882.7L771.9 874.4L774.5 861.8L775.1 850.4L777.6 839.2L778.9 827.4L780.8 817.5L780.2 807.0L780.8 800.6L784.6 791.1L788.4 783.3L790.9 774.1L792.2 766.6L792.2 756.8L792.8 748.0L793.5 739.9L795.4 731.3L797.3 722.7L798.5 713.5L799.2 705.2L799.2 697.6L801.1 689.3L801.7 679.1L800.4 669.0L799.8 664.3L794.1 659.0L787.1 655.0L778.3 650.4L769.4 644.5L763.1 637.3L761.8 632.7L757.4 624.3L754.2 617.8L750.4 610.1L747.2 603.0L742.2 596.0L739.6 590.2L732.7 585.1L731.4 580.0L730.8 574.9L734.6 570.5L737.7 567.3L739.6 562.2L733.3 561.0L733.9 554.0L736.5 548.9L739.0 543.9L740.9 540.1L746.0 538.2L747.9 533.7L752.3 529.9L756.1 524.2L756.1 517.9L755.5 510.9L755.5 504.5L752.9 499.4L750.4 495.6ZM853.7 477.9L859.4 477.6L859.4 481.8L853.7 482.4ZM432.4 171.6L441.3 172.6L451.4 177.6L457.7 185.4L463.4 193.2L462.8 196.0L455.2 193.2L447.6 187.4L440.0 181.5L434.9 176.6ZM1208.4 303.2L1212.2 302.5L1217.9 307.9L1224.9 307.9L1231.9 308.7L1238.2 305.6L1243.9 303.2L1250.9 298.5L1258.5 297.0L1264.8 295.4L1272.4 294.6L1280.0 296.2L1287.6 293.8L1295.2 293.8L1301.5 293.8L1307.9 291.4L1311.1 294.6L1315.5 293.8L1313.0 298.5L1313.0 304.0L1316.1 307.9L1314.2 313.3L1309.8 317.9L1314.2 320.2L1318.0 323.2L1324.4 325.5L1330.7 325.5L1337.7 328.5L1342.7 330.0L1345.9 336.7L1353.5 339.7L1361.1 343.4L1368.1 344.8L1373.1 340.4L1372.5 332.2L1377.6 327.0L1383.9 325.5L1391.5 327.8L1397.8 332.2L1404.2 335.2L1413.7 336.0L1421.9 338.2L1429.5 341.2L1435.8 338.2L1442.2 335.6L1448.5 336.7L1450.7 337.8L1452.0 347.0L1452.3 350.7L1454.2 357.2L1458.0 362.2L1460.6 368.7L1463.7 375.7L1466.9 382.8L1470.7 389.7L1471.3 395.2L1477.0 401.4L1479.6 406.9L1481.5 414.4L1482.1 422.4L1485.3 427.8L1489.7 430.5L1492.9 438.4L1496.0 446.3L1501.1 450.9L1507.4 456.2L1513.1 462.0L1518.8 465.9L1520.1 470.5L1516.9 473.1L1521.4 474.3L1526.4 479.5L1532.8 479.5L1540.4 477.6L1547.3 475.6L1554.9 475.0L1562.5 472.4L1570.2 470.5L1570.2 476.3L1569.5 480.2L1567.6 485.9L1564.5 492.4L1561.3 498.1L1557.5 505.1L1553.7 512.1L1549.2 518.5L1542.3 525.5L1534.7 532.5L1527.7 537.5L1520.7 543.2L1515.0 550.2L1510.0 555.9L1505.5 560.3L1501.1 562.9L1499.8 567.3L1497.3 572.4L1494.1 577.5L1491.6 584.5L1495.4 590.2L1495.4 597.2L1496.7 604.9L1499.8 611.4L1502.4 615.2L1502.4 624.3L1503.0 632.7L1504.3 639.9L1503.0 646.5L1498.6 651.7L1492.2 656.4L1485.3 659.0L1479.6 662.3L1475.8 667.7L1469.4 673.1L1466.3 675.1L1465.6 680.5L1468.8 685.9L1470.7 691.4L1470.7 698.9L1470.1 704.5L1466.3 708.6L1458.7 711.4L1453.6 714.2L1453.0 717.8L1454.2 723.4L1452.3 731.3L1449.8 737.0L1444.1 742.1L1440.9 748.0L1437.1 753.9L1432.0 759.8L1426.3 765.8L1421.3 769.6L1414.3 774.1L1408.6 775.7L1402.9 777.2L1394.7 776.0L1387.1 776.4L1380.1 779.1L1372.5 781.8L1367.4 779.5L1362.7 778.0L1362.4 774.1L1359.2 767.3L1361.7 762.8L1361.1 757.6L1356.7 750.9L1353.5 742.9L1350.3 735.6L1345.9 729.9L1342.1 722.7L1340.2 715.7L1338.9 708.6L1337.3 700.3L1337.7 694.8L1335.1 688.0L1330.7 681.2L1327.5 674.4L1322.5 667.0L1320.2 659.7L1320.6 652.4L1321.8 646.5L1323.7 639.2L1326.3 632.1L1330.7 626.9L1333.2 620.4L1333.2 614.6L1330.1 608.8L1328.8 603.6L1330.7 599.8L1326.9 593.4L1323.7 585.8L1323.1 582.6L1321.2 578.1L1317.4 573.7L1312.3 568.6L1307.9 563.5L1304.1 557.8L1301.2 551.5L1304.7 548.3L1306.0 543.9L1306.6 538.8L1307.9 531.8L1308.5 526.8L1306.6 521.7L1302.2 517.9L1298.4 517.2L1292.0 518.2L1285.7 519.1L1280.6 515.3L1277.5 509.6L1273.0 506.4L1266.7 505.8L1260.4 506.4L1253.4 507.7L1247.7 509.6L1240.7 512.8L1233.1 516.0L1226.8 514.1L1220.5 513.1L1214.1 514.1L1207.8 516.0L1201.5 517.9L1197.7 518.5L1192.0 516.0L1185.6 511.5L1179.3 506.4L1173.6 502.6L1167.9 498.8L1163.4 494.3L1161.5 489.2L1158.4 485.3L1153.3 480.2L1150.8 476.3L1145.7 471.1L1140.6 467.9L1139.4 462.0L1140.0 456.8L1135.6 452.2L1138.1 449.0L1141.3 443.7L1141.9 437.1L1143.8 430.5L1143.2 423.8L1141.3 418.4L1138.1 411.0L1138.1 405.5L1141.9 398.0L1144.4 391.8L1148.9 385.5L1152.0 378.6L1154.6 373.6L1159.6 368.7L1164.1 362.2L1171.0 358.6L1177.4 355.0L1181.8 349.9L1184.4 344.1L1183.7 336.7L1186.9 329.3L1191.3 323.2L1197.7 320.2L1202.7 316.4L1205.9 309.5ZM1300.3 249.3L1305.3 244.1L1306.3 251.0L1304.1 257.8L1300.9 254.4ZM1394.7 305.6L1399.7 306.7L1405.4 306.7L1412.4 307.9L1410.5 309.5L1402.9 309.8L1395.3 307.5ZM1450.4 309.1L1454.9 306.7L1464.7 304.4L1461.2 309.5L1454.9 312.5L1451.1 311.4ZM1392.8 278.1L1398.5 281.0L1401.3 285.8L1395.3 281.8ZM-899.9 -83.5L-899.9 29.9L-899.9 42.3L-898.6 52.9L-899.9 60.7L-894.2 64.6L-889.1 69.7L-879.6 67.1L-870.1 63.3L-860.6 62.0L-853.0 60.7L-843.5 69.0L-851.1 70.9L-857.4 74.7L-866.9 73.4L-876.4 74.7L-885.9 78.4L-885.9 85.8L-880.2 89.4L-880.9 100.1L-885.3 104.8L-891.6 97.8L-897.3 99.0L-901.8 107.1L-901.4 116.3L-901.1 124.1L-904.9 128.6L-909.4 133.5L-916.3 134.0L-918.9 129.7L-927.1 130.8L-933.4 135.1L-942.3 138.9L-948.0 136.2L-953.7 134.0L-958.8 136.8L-965.1 138.4L-966.4 134.0L-971.5 133.0L-972.1 127.5L-969.5 120.8L-970.2 114.0L-966.4 110.6L-968.9 102.5L-968.0 96.6L-972.1 98.4L-976.5 103.6L-982.2 106.0L-983.2 116.3L-982.9 123.0L-980.3 128.6L-979.7 136.2L-978.4 139.5L-982.9 142.7L-989.2 142.1L-991.7 144.8L-999.3 145.3L-1004.4 150.1L-1006.9 157.4L-1010.1 161.5L-1013.3 165.6L-1019.0 168.6L-1024.7 170.6L-1024.7 177.6L-1030.4 181.0L-1034.2 184.5L-1037.3 186.4L-1042.4 185.4L-1043.0 182.5L-1046.8 182.5L-1044.9 192.2L-1049.4 192.7L-1055.7 190.8L-1064.6 194.1L-1063.3 199.4L-1055.1 202.7L-1050.6 205.5L-1047.5 208.3L-1046.2 213.8L-1042.4 216.6L-1041.8 222.0L-1042.4 230.1L-1044.3 239.8L-1047.5 241.5L-1057.0 240.2L-1066.5 239.8L-1076.0 239.3L-1084.8 237.6L-1091.8 242.4L-1093.4 245.0L-1090.5 251.0L-1090.5 258.6L-1089.9 265.4L-1092.4 273.6L-1095.0 279.7L-1091.2 282.2L-1090.5 287.4L-1091.5 293.8L-1084.8 293.8L-1079.8 292.2L-1075.3 295.4L-1072.8 300.1L-1069.0 300.9L-1063.3 296.2L-1057.0 296.2L-1049.4 295.4L-1046.2 292.2L-1039.9 289.0L-1036.1 282.6L-1033.5 279.7L-1036.7 274.4L-1032.9 267.0L-1029.1 262.8L-1024.7 259.5L-1020.2 257.8L-1014.5 253.6L-1014.5 249.3L-1015.8 244.1L-1010.1 239.8L-1005.0 240.6L-1000.6 242.0L-995.5 243.3L-991.1 240.2L-987.3 237.1L-982.2 234.5L-978.4 231.9L-973.4 234.5L-970.2 237.1L-968.9 244.1L-965.1 249.3L-960.0 251.9L-955.6 257.0L-949.3 259.1L-945.5 262.8L-941.0 264.5L-938.5 269.1L-935.3 270.3L-933.4 276.1L-932.2 280.2L-935.3 285.8L-932.8 286.2L-929.6 282.6L-926.5 277.7L-927.1 273.6L-929.6 272.0L-927.7 266.2L-923.9 267.0L-920.1 270.3L-917.6 268.7L-920.8 264.1L-927.1 260.8L-933.4 257.4L-932.2 253.6L-938.5 253.6L-944.2 249.3L-948.0 241.5L-951.2 237.1L-955.6 234.5L-956.9 227.4L-956.2 222.9L-950.5 219.7L-947.7 221.1L-948.6 225.6L-946.7 228.3L-944.2 223.8L-940.4 226.5L-938.5 233.6L-933.4 238.9L-927.1 243.3L-920.8 247.6L-916.3 250.1L-911.9 254.4L-911.3 259.5L-911.9 266.2L-908.1 272.0L-904.9 276.9L-901.8 280.2L-899.9 283.0L-900.5 287.4L-898.0 293.0L-896.7 295.8L-892.9 297.7L-889.7 297.0L-887.8 298.1L-889.7 291.4L-887.8 289.0L-888.5 286.6L-884.7 286.2L-882.4 288.2L-882.1 284.2L-886.6 281.0L-889.7 277.7L-889.1 275.3L-891.0 270.3L-891.0 266.2L-889.1 264.5L-885.9 267.8L-883.4 269.5L-880.2 268.3L-883.4 265.4L-881.5 262.4L-876.4 262.0L-870.1 262.8L-868.2 266.2L-868.8 269.1L-868.8 273.6L-865.0 276.1L-864.4 281.0L-867.6 283.4L-863.1 285.8L-861.9 290.6L-861.2 293.8L-856.2 296.2L-851.1 297.0L-847.3 300.1L-841.6 299.3L-839.7 295.0L-834.6 297.0L-828.9 300.9L-824.5 300.9L-819.4 299.3L-814.3 295.4L-809.3 297.0L-805.5 295.4L-807.4 300.9L-808.0 306.4L-807.4 312.5L-809.3 317.1L-811.8 323.2L-813.4 327.0L-815.0 333.0L-817.5 336.7L-821.9 338.9L-827.6 338.9L-829.9 337.8L-828.6 347.0L-827.6 350.7L-824.5 357.2L-821.3 361.5L-817.8 363.3L-816.2 358.6L-813.7 351.4L-813.1 350.7L-814.0 355.0L-815.0 360.1L-811.8 362.9L-808.0 369.4L-803.6 375.7L-799.1 382.8L-796.6 387.6L-792.2 391.1L-788.4 397.3L-787.1 404.8L-783.3 413.0L-778.2 418.4L-773.8 425.8L-770.0 431.8L-765.6 437.8L-763.7 445.0L-763.0 451.6L-761.1 459.4L-759.2 465.3L-752.9 465.0L-746.6 463.3L-740.2 460.7L-733.3 458.1L-726.3 456.2L-719.3 451.6L-711.7 449.0L-704.1 446.3L-702.8 441.7L-695.9 438.7L-687.6 437.1L-683.8 432.4L-677.5 430.5L-672.4 424.4L-668.6 423.8L-669.3 417.1L-664.8 413.7L-662.9 408.3L-658.5 403.5L-656.0 400.1L-659.1 398.0L-662.9 393.2L-668.6 391.1L-673.7 389.0L-676.9 384.8L-677.5 378.6L-677.2 373.6L-679.4 375.7L-680.0 378.6L-684.5 381.0L-688.9 385.5L-694.0 389.0L-700.3 388.7L-706.0 389.7L-707.9 386.9L-707.9 381.4L-709.2 375.0L-712.3 377.8L-713.0 384.2L-716.1 379.3L-717.4 373.6L-720.6 367.9L-724.4 362.9L-727.6 357.2L-730.7 351.4L-731.4 347.0L-726.9 347.0L-721.2 345.6L-717.4 346.3L-713.6 352.9L-710.4 361.5L-705.4 363.7L-700.9 366.5L-695.2 370.8L-688.9 372.2L-682.6 370.1L-677.5 367.6L-673.7 370.1L-671.8 376.4L-667.4 378.6L-661.0 380.0L-654.7 380.3L-648.4 381.4L-642.0 381.7L-635.7 381.4L-629.4 380.7L-623.0 380.3L-616.7 379.6L-612.3 381.4L-610.4 384.2L-607.2 390.4L-602.8 392.5L-597.7 395.9L-589.4 397.0L-596.4 401.1L-596.4 404.8L-590.7 410.3L-585.0 412.3L-578.7 409.6L-576.1 404.2L-574.9 401.4L-573.6 408.3L-573.6 415.7L-573.6 423.1L-572.3 430.5L-570.4 437.1L-568.5 444.4L-565.4 451.6L-562.2 459.4L-559.7 466.6L-555.9 473.7L-552.1 482.7L-549.5 489.2L-545.7 494.3L-543.2 494.9L-540.0 490.4L-534.3 487.2L-532.4 481.4L-529.0 480.8L-529.3 473.1L-527.4 466.6L-526.1 460.7L-527.4 453.6L-527.4 447.6L-522.9 444.7L-519.1 441.7L-513.4 439.1L-507.7 433.1L-502.7 427.8L-497.0 422.4L-491.3 418.4L-485.6 414.4L-483.7 408.3L-478.0 405.5L-472.3 405.5L-466.6 404.8L-462.1 402.8L-460.2 398.7L-455.8 398.7L-453.2 402.1L-452.0 408.3L-450.1 412.3L-446.3 416.4L-441.8 421.8L-438.0 426.4L-436.8 433.1L-436.1 439.7L-437.7 443.7L-433.0 445.3L-428.5 443.7L-424.7 440.4L-420.3 437.1L-419.0 439.1L-416.5 441.7L-415.9 448.3L-414.0 454.9L-412.1 461.4L-410.2 468.5L-409.5 475.0L-410.8 481.4L-412.1 487.9L-412.7 494.3L-411.4 496.5L-408.3 496.2L-405.7 500.0L-401.9 503.9L-400.0 507.0L-399.1 512.1L-397.5 518.5L-395.6 522.9L-393.1 527.7L-389.3 531.2L-385.5 533.4L-380.4 536.6L-378.5 538.2L-374.7 537.8L-374.7 534.4L-377.2 529.9L-379.4 524.8L-379.8 519.8L-379.8 516.0L-381.7 512.1L-384.8 509.0L-387.4 507.0L-391.2 502.9L-395.6 502.6L-398.1 500.0L-400.7 493.0L-401.9 487.9L-405.7 486.6L-406.4 480.2L-404.5 475.0L-402.6 469.8L-401.3 463.3L-398.1 460.1L-395.0 461.4L-395.6 465.9L-390.5 465.9L-386.7 469.2L-383.6 472.4L-381.7 476.3L-378.5 479.5L-373.4 480.2L-370.3 482.7L-370.9 491.4L-367.1 489.8L-362.0 486.6L-358.9 482.7L-355.7 480.2L-350.6 478.2L-345.6 474.3L-343.0 470.5L-342.4 464.6L-342.4 458.8L-344.3 452.2L-346.8 446.3L-349.4 442.7L-353.8 439.1L-358.2 433.8L-361.4 429.1L-364.6 425.1L-363.9 419.7L-360.1 415.7L-358.2 411.6L-353.8 408.9L-349.4 406.2L-344.3 406.2L-340.5 406.9L-338.6 411.0L-339.9 414.4L-336.0 415.0L-334.8 410.3L-335.4 407.6L-329.7 406.9L-324.0 404.8L-318.9 402.8L-315.1 400.1L-311.3 401.4L-307.5 398.7L-301.8 398.0L-296.1 395.2L-291.1 391.1L-286.6 386.2L-282.2 382.8L-277.8 378.6L-276.5 373.6L-273.3 368.7L-270.2 362.9L-266.4 358.6L-263.8 352.9L-261.9 347.8L-266.4 344.8L-270.8 344.1L-266.4 341.9L-262.6 339.7L-263.2 334.5L-267.6 330.0L-269.5 324.7L-272.7 317.1L-277.1 312.5L-279.7 309.5L-276.5 304.8L-272.7 300.9L-268.3 297.0L-262.6 294.2L-258.4 292.2L-261.3 289.8L-266.4 289.4L-271.4 288.2L-275.9 291.4L-280.9 291.4L-280.9 286.6L-286.0 284.2L-289.2 279.3L-287.3 276.1L-281.6 276.1L-277.8 271.2L-272.1 267.0L-267.6 262.4L-262.6 262.0L-260.7 265.4L-263.8 270.3L-267.0 276.1L-264.5 278.9L-260.0 275.3L-254.3 272.0L-248.0 270.3L-244.2 272.8L-241.0 274.4L-241.7 280.2L-244.2 285.0L-239.1 287.4L-235.3 288.2L-232.8 292.2L-234.7 296.2L-232.8 300.9L-233.4 306.4L-234.7 311.0L-232.2 314.5L-227.1 312.5L-222.7 310.6L-217.6 308.7L-215.1 304.8L-214.4 300.9L-215.1 294.6L-216.3 289.8L-219.5 284.2L-222.0 280.2L-226.5 275.7L-227.1 271.2L-222.0 268.7L-216.3 264.5L-213.2 261.2L-213.2 256.1L-209.3 251.0L-206.8 250.1L-203.0 244.1L-198.6 242.4L-193.5 245.8L-188.4 244.6L-182.7 239.8L-177.7 234.5L-173.2 227.4L-168.8 221.1L-164.4 214.7L-159.3 207.3L-154.9 200.8L-151.1 194.1L-146.6 188.4L-145.4 179.6L-144.1 170.6L-140.3 161.5L-139.0 153.2L-140.3 145.9L-146.0 144.8L-151.1 138.4L-157.4 138.4L-163.7 140.5L-168.2 131.9L-177.0 130.8L-170.1 124.1L-163.1 116.3L-157.4 107.1L-147.9 96.6L-138.4 87.0L-128.9 77.2L-116.2 75.9L-103.6 77.2L-90.9 74.7L-79.5 74.7L-70.0 80.9L-62.4 78.4L-52.9 78.4L-56.0 69.7L-49.7 60.7L-41.5 50.3L-30.7 45.0L-21.2 46.3L-18.0 58.1L-11.7 58.1L-5.4 47.6L1.0 35.5L7.3 34.1L2.9 45.0L-2.2 55.5L-8.5 63.3L-18.0 73.4L-22.5 82.1L-30.7 90.6L-40.2 97.8L-42.1 107.1L-46.5 116.3L-49.1 127.5L-48.4 140.5L-45.9 153.2L-44.0 163.5L-42.1 170.6L-36.4 163.5L-31.3 153.2L-22.5 148.0L-21.2 138.4L-9.8 131.9L-7.9 123.0L-2.8 115.2L-0.3 112.9L-4.1 104.8L-0.9 95.4L-5.4 87.0L-0.3 74.7L8.6 69.7L16.8 63.3L29.5 62.0L44.1 68.4L48.5 58.1L58.0 52.9L70.7 45.0L83.3 36.8L100.4 38.2L102.3 28.5L96.0 14.3L105.5 -0.4L130.8 7.1L149.8 10.0L168.8 -12.5L168.8 -83.5ZM1380.7 -83.5L1380.7 29.9L1380.7 42.3L1382.0 52.9L1380.7 60.7L1386.4 64.6L1391.5 69.7L1401.0 67.1L1410.5 63.3L1420.0 62.0L1427.6 60.7L1437.1 69.0L1429.5 70.9L1423.2 74.7L1413.7 73.4L1404.2 74.7L1394.7 78.4L1394.7 85.8L1400.4 89.4L1399.7 100.1L1395.3 104.8L1389.0 97.8L1383.3 99.0L1378.8 107.1L1379.2 116.3L1379.5 124.1L1375.7 128.6L1371.2 133.5L1364.3 134.0L1361.7 129.7L1353.5 130.8L1347.2 135.1L1338.3 138.9L1332.6 136.2L1326.9 134.0L1321.8 136.8L1315.5 138.4L1314.2 134.0L1309.1 133.0L1308.5 127.5L1311.1 120.8L1310.4 114.0L1314.2 110.6L1311.7 102.5L1312.6 96.6L1308.5 98.4L1304.1 103.6L1298.4 106.0L1297.4 116.3L1297.7 123.0L1300.3 128.6L1300.9 136.2L1302.2 139.5L1297.7 142.7L1291.4 142.1L1288.9 144.8L1281.3 145.3L1276.2 150.1L1273.7 157.4L1270.5 161.5L1267.3 165.6L1261.6 168.6L1255.9 170.6L1255.9 177.6L1250.2 181.0L1246.4 184.5L1243.3 186.4L1238.2 185.4L1237.6 182.5L1233.8 182.5L1235.7 192.2L1231.2 192.7L1224.9 190.8L1216.0 194.1L1217.3 199.4L1225.5 202.7L1230.0 205.5L1233.1 208.3L1234.4 213.8L1238.2 216.6L1238.8 222.0L1238.2 230.1L1236.3 239.8L1233.1 241.5L1223.6 240.2L1214.1 239.8L1204.6 239.3L1195.8 237.6L1188.8 242.4L1187.2 245.0L1190.1 251.0L1190.1 258.6L1190.7 265.4L1188.2 273.6L1185.6 279.7L1189.4 282.2L1190.1 287.4L1189.1 293.8L1195.8 293.8L1200.8 292.2L1205.3 295.4L1207.8 300.1L1211.6 300.9L1217.3 296.2L1223.6 296.2L1231.2 295.4L1234.4 292.2L1240.7 289.0L1244.5 282.6L1247.1 279.7L1243.9 274.4L1247.7 267.0L1251.5 262.8L1255.9 259.5L1260.4 257.8L1266.1 253.6L1266.1 249.3L1264.8 244.1L1270.5 239.8L1275.6 240.6L1280.0 242.0L1285.1 243.3L1289.5 240.2L1293.3 237.1L1298.4 234.5L1302.2 231.9L1307.2 234.5L1310.4 237.1L1311.7 244.1L1315.5 249.3L1320.6 251.9L1325.0 257.0L1331.3 259.1L1335.1 262.8L1339.6 264.5L1342.1 269.1L1345.3 270.3L1347.2 276.1L1348.4 280.2L1345.3 285.8L1347.8 286.2L1351.0 282.6L1354.1 277.7L1353.5 273.6L1351.0 272.0L1352.9 266.2L1356.7 267.0L1360.5 270.3L1363.0 268.7L1359.8 264.1L1353.5 260.8L1347.2 257.4L1348.4 253.6L1342.1 253.6L1336.4 249.3L1332.6 241.5L1329.4 237.1L1325.0 234.5L1323.7 227.4L1324.4 222.9L1330.1 219.7L1332.9 221.1L1332.0 225.6L1333.9 228.3L1336.4 223.8L1340.2 226.5L1342.1 233.6L1347.2 238.9L1353.5 243.3L1359.8 247.6L1364.3 250.1L1368.7 254.4L1369.3 259.5L1368.7 266.2L1372.5 272.0L1375.7 276.9L1378.8 280.2L1380.7 283.0L1380.1 287.4L1382.6 293.0L1383.9 295.8L1387.7 297.7L1390.9 297.0L1392.8 298.1L1390.9 291.4L1392.8 289.0L1392.1 286.6L1395.9 286.2L1398.2 288.2L1398.5 284.2L1394.0 281.0L1390.9 277.7L1391.5 275.3L1389.6 270.3L1389.6 266.2L1391.5 264.5L1394.7 267.8L1397.2 269.5L1400.4 268.3L1397.2 265.4L1399.1 262.4L1404.2 262.0L1410.5 262.8L1412.4 266.2L1411.8 269.1L1411.8 273.6L1415.6 276.1L1416.2 281.0L1413.0 283.4L1417.5 285.8L1418.7 290.6L1419.4 293.8L1424.4 296.2L1429.5 297.0L1433.3 300.1L1439.0 299.3L1440.9 295.0L1446.0 297.0L1451.7 300.9L1456.1 300.9L1461.2 299.3L1466.3 295.4L1471.3 297.0L1475.1 295.4L1473.2 300.9L1472.6 306.4L1473.2 312.5L1471.3 317.1L1468.8 323.2L1467.2 327.0L1465.6 333.0L1463.1 336.7L1458.7 338.9L1453.0 338.9L1450.7 337.8L1452.0 347.0L1453.0 350.7L1456.1 357.2L1459.3 361.5L1462.8 363.3L1464.4 358.6L1466.9 351.4L1467.5 350.7L1466.6 355.0L1465.6 360.1L1468.8 362.9L1472.6 369.4L1477.0 375.7L1481.5 382.8L1484.0 387.6L1488.4 391.1L1492.2 397.3L1493.5 404.8L1497.3 413.0L1502.4 418.4L1506.8 425.8L1510.6 431.8L1515.0 437.8L1516.9 445.0L1517.6 451.6L1519.5 459.4L1521.4 465.3L1527.7 465.0L1534.0 463.3L1540.4 460.7L1547.3 458.1L1554.3 456.2L1561.3 451.6L1568.9 449.0L1576.5 446.3L1577.8 441.7L1584.7 438.7L1593.0 437.1L1596.8 432.4L1603.1 430.5L1608.2 424.4L1612.0 423.8L1611.3 417.1L1615.8 413.7L1617.7 408.3L1622.1 403.5L1624.6 400.1L1621.5 398.0L1617.7 393.2L1612.0 391.1L1606.9 389.0L1603.7 384.8L1603.1 378.6L1603.4 373.6L1601.2 375.7L1600.6 378.6L1596.1 381.0L1591.7 385.5L1586.6 389.0L1580.3 388.7L1574.6 389.7L1572.7 386.9L1572.7 381.4L1571.4 375.0L1568.3 377.8L1567.6 384.2L1564.5 379.3L1563.2 373.6L1560.0 367.9L1556.2 362.9L1553.0 357.2L1549.9 351.4L1549.2 347.0L1553.7 347.0L1559.4 345.6L1563.2 346.3L1567.0 352.9L1570.2 361.5L1575.2 363.7L1579.7 366.5L1585.4 370.8L1591.7 372.2L1598.0 370.1L1603.1 367.6L1606.9 370.1L1608.8 376.4L1613.2 378.6L1619.6 380.0L1625.9 380.3L1632.2 381.4L1638.6 381.7L1644.9 381.4L1651.2 380.7L1657.6 380.3L1663.9 379.6L1668.3 381.4L1670.2 384.2L1673.4 390.4L1677.8 392.5L1682.9 395.9L1691.2 397.0L1684.2 401.1L1684.2 404.8L1689.9 410.3L1695.6 412.3L1701.9 409.6L1704.5 404.2L1705.7 401.4L1707.0 408.3L1707.0 415.7L1707.0 423.1L1708.3 430.5L1710.2 437.1L1712.1 444.4L1715.2 451.6L1718.4 459.4L1720.9 466.6L1724.7 473.7L1728.5 482.7L1731.1 489.2L1734.9 494.3L1737.4 494.9L1740.6 490.4L1746.3 487.2L1748.2 481.4L1751.6 480.8L1751.3 473.1L1753.2 466.6L1754.5 460.7L1753.2 453.6L1753.2 447.6L1757.7 444.7L1761.5 441.7L1767.2 439.1L1772.9 433.1L1777.9 427.8L1783.6 422.4L1789.3 418.4L1795.0 414.4L1796.9 408.3L1802.6 405.5L1808.3 405.5L1814.0 404.8L1818.5 402.8L1820.4 398.7L1824.8 398.7L1827.4 402.1L1828.6 408.3L1830.5 412.3L1834.3 416.4L1838.8 421.8L1842.6 426.4L1843.8 433.1L1844.5 439.7L1842.9 443.7L1847.6 445.3L1852.1 443.7L1855.9 440.4L1860.3 437.1L1861.6 439.1L1864.1 441.7L1864.7 448.3L1866.6 454.9L1868.5 461.4L1870.4 468.5L1871.1 475.0L1869.8 481.4L1868.5 487.9L1867.9 494.3L1869.2 496.5L1872.3 496.2L1874.9 500.0L1878.7 503.9L1880.6 507.0L1881.5 512.1L1883.1 518.5L1885.0 522.9L1887.5 527.7L1891.3 531.2L1895.1 533.4L1900.2 536.6L1902.1 538.2L1905.9 537.8L1905.9 534.4L1903.4 529.9L1901.2 524.8L1900.8 519.8L1900.8 516.0L1898.9 512.1L1895.8 509.0L1893.2 507.0L1889.4 502.9L1885.0 502.6L1882.5 500.0L1879.9 493.0L1878.7 487.9L1874.9 486.6L1874.2 480.2L1876.1 475.0L1878.0 469.8L1879.3 463.3L1882.5 460.1L1885.6 461.4L1885.0 465.9L1890.1 465.9L1893.9 469.2L1897.0 472.4L1898.9 476.3L1902.1 479.5L1907.2 480.2L1910.3 482.7L1909.7 491.4L1913.5 489.8L1918.6 486.6L1921.7 482.7L1924.9 480.2L1930.0 478.2L1935.0 474.3L1937.6 470.5L1938.2 464.6L1938.2 458.8L1936.3 452.2L1933.8 446.3L1931.2 442.7L1926.8 439.1L1922.4 433.8L1919.2 429.1L1916.0 425.1L1916.7 419.7L1920.5 415.7L1922.4 411.6L1926.8 408.9L1931.2 406.2L1936.3 406.2L1940.1 406.9L1942.0 411.0L1940.7 414.4L1944.6 415.0L1945.8 410.3L1945.2 407.6L1950.9 406.9L1956.6 404.8L1961.7 402.8L1965.5 400.1L1969.3 401.4L1973.1 398.7L1978.8 398.0L1984.5 395.2L1989.5 391.1L1994.0 386.2L1998.4 382.8L2002.8 378.6L2004.1 373.6L2007.3 368.7L2010.4 362.9L2014.2 358.6L2016.8 352.9L2018.7 347.8L2014.2 344.8L2009.8 344.1L2014.2 341.9L2018.0 339.7L2017.4 334.5L2013.0 330.0L2011.1 324.7L2007.9 317.1L2003.5 312.5L2000.9 309.5L2004.1 304.8L2007.9 300.9L2012.3 297.0L2018.0 294.2L2022.2 292.2L2019.3 289.8L2014.2 289.4L2009.2 288.2L2004.7 291.4L1999.7 291.4L1999.7 286.6L1994.6 284.2L1991.4 279.3L1993.3 276.1L1999.0 276.1L2002.8 271.2L2008.5 267.0L2013.0 262.4L2018.0 262.0L2019.9 265.4L2016.8 270.3L2013.6 276.1L2016.1 278.9L2020.6 275.3L2026.3 272.0L2032.6 270.3L2036.4 272.8L2039.6 274.4L2038.9 280.2L2036.4 285.0L2041.5 287.4L2045.3 288.2L2047.8 292.2L2045.9 296.2L2047.8 300.9L2047.2 306.4L2045.9 311.0L2048.4 314.5L2053.5 312.5L2057.9 310.6L2063.0 308.7L2065.5 304.8L2066.2 300.9L2065.5 294.6L2064.3 289.8L2061.1 284.2L2058.6 280.2L2054.1 275.7L2053.5 271.2L2058.6 268.7L2064.3 264.5L2067.4 261.2L2067.4 256.1L2071.3 251.0L2073.8 250.1L2077.6 244.1L2082.0 242.4L2087.1 245.8L2092.2 244.6L2097.9 239.8L2102.9 234.5L2107.4 227.4L2111.8 221.1L2116.2 214.7L2121.3 207.3L2125.7 200.8L2129.5 194.1L2134.0 188.4L2135.2 179.6L2136.5 170.6L2140.3 161.5L2141.6 153.2L2140.3 145.9L2134.6 144.8L2129.5 138.4L2123.2 138.4L2116.9 140.5L2112.4 131.9L2103.6 130.8L2110.5 124.1L2117.5 116.3L2123.2 107.1L2132.7 96.6L2142.2 87.0L2151.7 77.2L2164.4 75.9L2177.0 77.2L2189.7 74.7L2201.1 74.7L2210.6 80.9L2218.2 78.4L2227.7 78.4L2224.6 69.7L2230.9 60.7L2239.1 50.3L2249.9 45.0L2259.4 46.3L2262.6 58.1L2268.9 58.1L2275.2 47.6L2281.6 35.5L2287.9 34.1L2283.5 45.0L2278.4 55.5L2272.1 63.3L2262.6 73.4L2258.1 82.1L2249.9 90.6L2240.4 97.8L2238.5 107.1L2234.1 116.3L2231.5 127.5L2232.2 140.5L2234.7 153.2L2236.6 163.5L2238.5 170.6L2244.2 163.5L2249.3 153.2L2258.1 148.0L2259.4 138.4L2270.8 131.9L2272.7 123.0L2277.8 115.2L2280.3 112.9L2276.5 104.8L2279.7 95.4L2275.2 87.0L2280.3 74.7L2289.2 69.7L2297.4 63.3L2310.1 62.0L2324.7 68.4L2329.1 58.1L2338.6 52.9L2351.3 45.0L2363.9 36.8L2381.0 38.2L2382.9 28.5L2376.6 14.3L2386.1 -0.4L2411.4 7.1L2430.4 10.0L2449.4 -12.5L2449.4 -83.5ZM1307.9 121.9L1312.3 120.8L1314.2 125.3L1310.4 126.9ZM1361.1 103.6L1365.5 94.2L1366.8 95.4L1364.3 102.5ZM1209.7 179.1L1213.5 179.6L1219.2 176.1L1223.6 176.6L1226.8 172.6L1233.1 173.6L1238.8 172.1L1245.8 172.1L1252.1 170.1L1254.7 166.6L1250.2 165.1L1252.8 161.5L1256.6 154.3L1254.0 149.6L1247.7 150.1L1247.1 145.9L1244.5 141.6L1244.5 136.2L1238.2 130.8L1235.7 123.0L1231.9 116.3L1225.5 116.3L1229.3 111.7L1231.9 104.8L1233.8 97.8L1226.8 96.6L1220.5 97.8L1224.3 90.6L1226.2 85.8L1217.3 85.8L1214.1 85.8L1211.6 94.2L1209.1 100.1L1209.7 108.3L1206.5 110.6L1210.3 115.2L1210.3 123.0L1214.8 123.0L1215.4 128.6L1219.2 129.7L1224.3 128.6L1223.6 134.0L1227.4 137.3L1226.8 143.7L1224.9 145.3L1217.9 145.9L1217.3 151.1L1219.8 155.3L1216.0 158.9L1212.9 161.5L1218.6 163.5L1225.5 165.1L1228.7 164.6L1224.9 167.6L1218.6 168.6L1214.1 175.1ZM1934.4 422.4L1939.5 417.4L1945.8 416.7L1949.0 419.7L1944.6 426.4L1939.5 429.1L1934.4 427.1ZM1385.8 82.1L1389.6 79.7L1391.5 83.3L1388.3 84.6ZM2134.6 257.4L2139.0 254.4L2140.9 248.4L2147.9 251.0L2153.6 252.7L2158.0 245.0L2166.9 241.5L2166.3 237.1L2159.9 235.4L2153.0 231.0L2145.4 222.9L2143.5 228.3L2142.2 239.8L2135.9 241.5L2134.6 247.6L2132.1 251.0ZM2138.4 257.0L2141.6 257.8L2144.7 269.5L2145.4 277.7L2142.2 283.4L2139.0 287.4L2138.4 294.6L2136.5 300.1L2137.8 304.0L2134.0 308.7L2131.4 307.1L2130.8 304.8L2127.6 307.9L2125.1 309.5L2124.5 311.8L2121.3 312.5L2116.9 312.2L2113.1 310.2L2112.4 314.1L2109.3 317.9L2106.1 321.3L2101.7 317.9L2102.3 314.1L2097.9 311.8L2091.5 314.1L2085.2 314.8L2080.8 317.5L2075.1 317.1L2075.7 314.1L2080.8 311.8L2086.5 306.4L2090.3 305.2L2096.6 305.2L2102.9 304.8L2107.4 304.0L2111.8 297.0L2112.4 291.0L2115.6 289.8L2113.7 295.0L2120.0 293.0L2125.1 287.4L2129.5 282.6L2132.1 276.1L2132.7 269.5L2132.1 264.5L2134.6 259.9L2137.8 262.4L2139.7 259.5ZM1091.2 -7.9L1106.4 -21.9L1131.8 -20.3L1153.3 -15.6L1159.6 -0.4L1150.8 10.0L1128.6 22.9L1115.9 21.5L1102.6 16.5L1106.4 7.1L1093.8 1.1ZM1207.2 145.9L1206.5 137.3L1210.3 134.0L1208.4 127.5L1202.7 125.3L1197.7 124.1L1192.0 128.6L1191.3 134.0L1183.7 135.1L1182.5 142.7L1186.3 148.0L1184.4 154.3L1180.5 158.4L1182.5 163.5L1187.5 164.6L1193.9 161.5L1200.2 158.4L1205.3 157.4L1207.2 152.2ZM2045.0 322.5L2047.8 320.6L2050.0 321.3L2047.2 323.2ZM2068.1 323.2L2071.9 317.9L2075.7 317.9L2080.1 320.9L2082.0 326.2L2078.9 333.7L2075.7 338.2L2073.8 339.7L2070.6 337.5L2070.6 330.0L2067.4 327.0ZM2009.8 427.1L2016.1 427.5L2020.6 427.8L2019.9 435.1L2021.8 441.1L2016.1 445.0L2016.1 450.9L2020.6 456.2L2025.0 457.5L2030.7 458.1L2032.0 465.9L2026.9 462.7L2022.5 459.4L2017.4 457.5L2012.3 458.8L2009.8 454.9L2011.7 452.2L2007.3 450.9L2005.4 442.4L2008.5 439.7L2008.5 433.1ZM1558.1 623.0L1561.9 629.5L1564.5 637.3L1565.7 645.8L1561.3 649.1L1560.6 655.7L1558.7 663.7L1556.2 672.4L1553.7 681.2L1549.9 691.4L1546.7 701.7L1544.2 709.3L1538.5 712.1L1532.1 714.2L1525.8 710.7L1522.6 704.5L1520.7 696.2L1520.1 688.0L1523.3 681.2L1527.1 674.4L1526.4 666.4L1524.5 658.4L1527.7 651.1L1534.0 648.4L1540.4 646.5L1545.4 641.2L1549.9 636.0L1552.4 631.4L1555.6 625.6ZM1261.0 272.8L1266.1 269.9L1267.7 272.8L1265.1 275.3ZM2018.7 500.7L2021.8 495.6L2027.5 491.7L2033.2 492.4L2036.4 489.2L2040.8 484.7L2045.3 488.5L2047.2 496.8L2045.3 505.8L2040.2 510.9L2041.5 503.2L2038.3 508.3L2032.6 506.4L2031.3 499.4L2026.9 498.8L2019.9 502.6ZM1349.7 114.0L1354.1 101.3L1352.9 101.3L1350.3 110.6ZM1988.3 493.0L1994.6 485.3L2002.2 476.9L2003.5 479.5L1997.1 487.9L1990.2 493.6ZM2033.2 466.6L2039.6 466.6L2042.1 475.0L2038.9 481.4L2036.4 481.4L2037.0 473.7L2033.9 473.7ZM2018.7 471.1L2025.6 472.4L2025.0 476.9L2019.9 479.5L2018.0 476.3ZM2024.4 476.9L2028.2 476.9L2026.9 485.3L2021.8 485.9L2024.4 480.8ZM2027.5 479.5L2031.3 475.0L2029.4 482.7L2026.9 486.6ZM2007.9 460.7L2013.6 460.7L2015.5 466.6L2012.3 468.5L2008.5 463.3ZM1421.3 300.5L1424.4 298.5L1423.8 301.7L1421.9 302.5ZM1410.5 275.3L1414.3 276.9L1411.8 278.1ZM1409.9 281.4L1411.5 283.4L1409.9 284.2ZM1384.5 89.4L1390.2 85.2L1393.4 87.6L1388.3 90.6L1385.2 93.6ZM2144.7 136.2L2149.2 135.1L2151.7 146.9L2153.6 159.4L2153.0 171.6L2156.8 179.6L2161.8 189.3L2153.0 186.4L2151.1 198.9L2149.2 204.5L2154.2 210.1L2154.9 216.6L2149.8 212.9L2146.0 217.5L2144.7 210.1L2146.0 200.8L2144.7 191.3L2146.6 180.6L2146.0 169.6L2143.5 159.4L2144.1 146.9ZM1297.7 262.0L1304.1 259.1L1307.2 264.5L1306.6 275.3L1302.8 276.9L1299.0 277.7L1299.0 270.3ZM1356.7 -83.5L1354.8 31.3L1356.0 42.3L1354.8 55.5L1355.4 60.7L1361.7 64.6L1365.5 70.9L1361.7 77.2L1356.7 83.3L1351.6 88.2L1351.0 97.8L1349.7 108.3L1345.9 115.2L1338.9 115.2L1335.8 121.9L1330.1 123.0L1326.9 120.8L1325.6 114.0L1326.9 107.1L1323.1 100.1L1320.6 93.0L1317.4 83.3L1315.5 78.4L1313.0 70.9L1311.7 77.2L1307.2 82.1L1301.5 88.2L1295.2 92.4L1288.9 91.8L1282.5 85.8L1280.6 77.2L1278.7 65.9L1277.5 55.5L1277.5 45.0L1282.5 36.8L1288.9 31.3L1296.5 21.5L1306.0 14.3L1309.1 -83.5ZM2082.7 322.1L2087.1 317.1L2093.4 314.5L2098.5 315.6L2099.1 318.7L2096.0 322.5L2092.2 320.9L2088.4 326.6L2085.2 324.7ZM1324.7 286.6L1330.1 284.2L1337.7 285.4L1344.6 283.8L1342.1 291.4L1341.5 296.2L1336.4 294.2L1330.1 291.4L1325.6 289.0ZM1751.3 484.0L1754.5 485.9L1760.2 492.4L1764.3 499.4L1762.7 505.8L1756.4 508.6L1752.6 506.4L1751.3 500.7L1751.3 493.6ZM2006.6 393.2L2012.3 382.8L2016.1 381.4L2018.0 384.8L2014.9 395.2L2011.1 403.5L2007.9 399.4ZM1316.1 119.7L1322.5 115.2L1325.6 119.7L1323.1 125.3L1319.9 126.9L1316.8 124.1ZM2148.5 614.6L2154.9 626.2L2154.9 637.3L2161.2 637.3L2166.3 642.5L2167.5 652.4L2171.3 662.3L2173.2 668.4L2181.5 673.1L2188.4 677.8L2193.5 688.0L2201.1 693.4L2201.1 699.6L2207.5 703.8L2214.4 711.4L2216.3 718.5L2218.2 727.7L2218.9 737.0L2215.7 747.2L2214.4 757.6L2210.6 764.3L2205.6 770.3L2203.7 775.7L2201.1 783.3L2197.3 791.1L2195.4 800.6L2191.0 805.4L2183.4 806.2L2177.0 811.0L2172.6 815.9L2167.5 811.0L2162.5 808.6L2154.9 813.5L2146.6 810.2L2139.0 807.0L2132.7 801.4L2129.5 791.1L2121.9 788.0L2123.2 781.8L2118.8 784.9L2113.7 785.7L2116.9 778.0L2119.4 769.6L2115.0 774.1L2107.4 781.8L2102.3 779.5L2097.9 769.6L2091.5 762.0L2083.3 760.6L2075.7 756.8L2066.2 757.6L2056.7 761.3L2044.0 762.8L2034.5 768.1L2028.2 774.9L2018.7 774.9L2006.0 775.3L1996.5 780.3L1990.2 784.1L1980.7 781.8L1975.0 778.0L1974.3 771.9L1978.8 769.6L1978.8 760.6L1976.9 751.6L1973.7 742.1L1969.3 731.3L1966.7 722.7L1964.8 714.2L1964.2 705.9L1966.7 697.6L1966.1 689.3L1971.2 688.0L1979.4 681.8L1987.0 679.8L1996.5 677.8L2004.7 675.1L2013.6 672.4L2019.9 665.0L2019.9 657.0L2025.0 652.4L2028.8 657.7L2033.2 651.7L2037.7 645.2L2044.0 639.2L2050.3 635.3L2056.7 641.9L2063.0 641.9L2067.4 634.7L2071.3 628.2L2075.7 624.3L2082.0 624.3L2085.8 619.1L2092.2 621.7L2101.0 623.6L2111.2 622.3L2110.5 629.5L2106.7 636.0L2103.6 641.9L2110.5 647.1L2118.1 651.1L2126.4 656.4L2132.7 659.7L2138.4 655.7L2142.2 645.8L2142.8 636.0L2144.1 626.2L2145.4 618.5ZM1971.2 598.2L1975.6 597.6L1978.8 599.8L1975.6 602.4L1971.8 599.8ZM1980.0 599.2L1985.1 599.2L1983.8 603.0L1980.0 602.4ZM1985.7 599.8L1993.3 597.9L1999.7 600.4L1996.5 602.7L1987.0 604.0ZM2005.4 600.4L2012.3 599.8L2023.7 598.5L2024.4 601.1L2015.5 603.0L2005.4 602.4ZM1999.7 606.9L2006.0 605.6L2011.1 610.1L2006.0 612.0L2000.9 608.8ZM2028.2 612.0L2034.5 605.6L2038.9 601.7L2047.2 599.8L2051.6 599.8L2044.0 604.9L2037.7 608.1L2032.0 612.0ZM1936.3 536.9L1940.1 533.7L1944.6 535.6L1950.3 536.9L1951.5 530.6L1959.1 527.4L1965.5 522.3L1969.3 517.2L1975.6 514.7L1980.7 508.3L1985.1 502.3L1988.9 504.5L1991.4 509.0L1996.5 511.5L2000.9 513.4L1995.2 518.5L1990.8 520.4L1992.1 525.5L1990.2 531.2L1993.3 536.3L1998.4 540.1L1992.1 542.0L1990.2 547.7L1989.5 552.7L1983.8 557.8L1982.6 565.4L1980.7 569.9L1973.1 572.4L1968.0 568.0L1961.7 566.7L1954.7 568.6L1948.4 565.4L1943.9 561.6L1942.6 555.3L1937.6 550.2L1936.9 543.9L1935.7 540.1ZM2053.5 534.4L2056.7 532.5L2056.0 538.2L2061.1 537.5L2057.3 542.0L2060.5 544.5L2056.0 545.1L2056.0 551.5L2053.5 546.4L2053.5 540.1ZM257.2 418.7L260.1 415.7L263.6 418.4L263.2 421.1L259.4 424.1L257.9 421.8ZM1912.2 589.6L1917.3 583.8L1923.6 584.2L1931.9 586.4L1939.5 589.9L1946.5 587.3L1952.2 588.9L1959.1 590.2L1965.5 595.3L1971.2 596.0L1970.5 601.7L1962.9 599.2L1955.3 599.2L1947.7 598.5L1939.5 595.6L1932.5 596.0L1925.5 594.0L1919.8 593.4L1914.1 590.2ZM1681.6 903.5L1691.8 904.4L1692.4 909.3L1684.2 909.3ZM2185.3 581.9L2192.9 581.3L2201.1 581.3L2206.2 577.5L2210.0 573.0L2210.6 578.1L2204.9 582.6L2198.6 586.4L2191.0 585.1ZM2075.7 551.5L2083.9 548.9L2091.5 550.8L2096.0 554.0L2096.6 560.3L2101.0 567.3L2107.4 561.0L2115.0 557.2L2123.2 557.8L2132.7 561.0L2139.0 562.9L2148.5 566.7L2158.0 570.5L2164.4 573.7L2169.4 580.0L2177.0 583.8L2182.1 587.7L2178.3 592.1L2184.6 597.2L2191.6 603.6L2197.3 611.4L2201.1 613.9L2194.1 612.6L2184.6 610.7L2177.0 606.9L2170.7 598.5L2163.1 595.3L2158.0 595.3L2154.2 599.8L2151.7 604.3L2145.4 604.9L2139.0 604.3L2132.7 598.5L2125.1 599.2L2120.0 599.2L2123.8 592.8L2123.8 587.7L2120.0 581.3L2113.7 577.5L2107.4 574.9L2101.0 574.3L2094.7 570.5L2089.6 571.8L2087.1 567.3L2082.0 564.1L2089.6 562.2L2094.1 560.3L2087.1 559.7L2082.0 559.1L2077.0 555.9L2075.1 552.7ZM2201.1 562.9L2208.7 567.3L2215.1 574.3L2213.8 575.6L2207.5 569.2ZM59.3 778.7L63.1 783.3L69.4 788.0L72.6 797.4L77.6 796.6L79.5 803.8L87.8 807.0L94.7 803.8L95.4 811.0L91.6 816.7L86.5 820.0L85.2 827.4L79.5 835.8L75.1 836.7L72.6 834.2L74.5 827.4L72.6 822.5L66.9 818.4L71.3 813.5L72.6 806.2L70.7 799.0L67.5 792.7L62.4 785.7ZM2339.9 778.7L2343.7 783.3L2350.0 788.0L2353.2 797.4L2358.2 796.6L2360.1 803.8L2368.4 807.0L2375.3 803.8L2376.0 811.0L2372.2 816.7L2367.1 820.0L2365.8 827.4L2360.1 835.8L2355.7 836.7L2353.2 834.2L2355.1 827.4L2353.2 822.5L2347.5 818.4L2351.9 813.5L2353.2 806.2L2351.3 799.0L2348.1 792.7L2343.0 785.7ZM59.3 827.4L62.4 831.6L68.8 834.2L69.4 838.4L65.6 844.4L61.2 851.3L60.5 856.5L51.7 860.1L49.1 869.0L46.0 875.3L39.6 880.8L32.0 880.8L25.7 877.2L20.6 874.4L23.1 866.3L30.7 859.2L39.0 853.9L46.0 848.7L50.4 841.8L54.8 834.2ZM2339.9 827.4L2343.0 831.6L2349.4 834.2L2350.0 838.4L2346.2 844.4L2341.8 851.3L2341.1 856.5L2332.3 860.1L2329.7 869.0L2326.6 875.3L2320.2 880.8L2312.6 880.8L2306.3 877.2L2301.2 874.4L2303.7 866.3L2311.3 859.2L2319.6 853.9L2326.6 848.7L2331.0 841.8L2335.4 834.2ZM2056.7 565.4L2063.0 564.1L2073.2 566.0L2074.4 570.5L2066.2 568.0L2056.7 568.0ZM2044.0 566.7L2049.7 566.0L2051.6 569.2L2047.2 571.1L2044.0 569.2ZM2225.8 581.3L2230.9 584.5L2233.4 589.6L2229.6 588.3ZM2237.9 588.9L2243.6 592.8L2240.4 592.8ZM2256.9 605.6L2264.5 608.8L2260.7 608.8ZM2263.8 599.8L2267.6 606.2L2265.1 604.9ZM2250.5 594.7L2258.1 599.8L2254.3 598.5ZM2004.7 541.3L2011.1 538.2L2018.7 540.1L2026.3 540.4L2033.2 538.8L2038.3 536.3L2035.1 543.2L2026.9 544.2L2018.7 543.2L2011.7 543.9L2007.3 547.7L2006.0 552.1L2011.1 555.3L2016.8 552.1L2025.6 550.8L2027.5 552.7L2019.9 556.5L2016.1 558.8L2021.2 566.7L2026.3 573.0L2023.1 576.8L2019.3 576.2L2015.5 574.9L2012.3 568.0L2011.7 563.5L2008.5 565.4L2008.5 571.8L2008.5 581.3L2003.5 581.9L2002.2 574.9L2002.8 568.6L1998.4 564.1L2000.9 557.8L2002.2 551.5L2004.7 546.4ZM1849.5 510.9L1857.1 513.4L1863.5 513.4L1868.5 519.1L1874.2 524.2L1880.6 529.3L1885.6 533.1L1893.2 538.2L1898.9 542.6L1903.4 547.0L1901.5 552.7L1907.8 557.8L1913.5 561.6L1917.3 566.7L1916.7 574.3L1916.0 583.2L1909.1 583.2L1906.5 578.7L1900.2 575.6L1893.9 571.1L1888.8 564.1L1885.0 559.1L1881.8 552.7L1878.0 547.0L1874.2 542.6L1871.1 536.3L1865.4 531.2L1860.3 525.5L1855.2 521.0L1850.8 516.0ZM2162.5 829.1L2170.7 832.5L2180.2 830.0L2185.3 831.6L2185.3 841.8L2182.7 850.4L2177.0 853.9L2170.7 853.0L2166.3 845.2L2164.4 835.8ZM4.1 676.4L13.6 682.5L22.5 690.0L20.0 691.4L10.5 685.2ZM2284.7 676.4L2294.2 682.5L2303.1 690.0L2300.6 691.4L2291.1 685.2ZM88.4 659.0L96.0 658.4L96.6 663.0L89.7 663.7ZM2369.0 659.0L2376.6 658.4L2377.2 663.0L2370.3 663.7ZM97.9 651.7L105.5 650.4L102.3 654.4ZM2378.5 651.7L2386.1 650.4L2382.9 654.4Z" fill="#fff"/><path d="M2146 245L2145 235M536 352L548 335M2366 807L2366 810M2372 816L2366 810M2350 817L2360 823M2358 835L2360 823M2366 810L2353 814M2366 822L2360 823M2322 868L2325 860M2322 868L2318 868M2318 868L2312 864M548 335L554 353M543 361L554 353M536 379L538 373M1188 485L1182 496M1188 485L1187 484M1187 484L1173 486M1173 486L1178 496M1178 496L1182 496M1198 488L1199 491M1198 488L1188 485M1199 491L1189 500M1189 500L1182 496M1191 508L1189 500M1171 484L1175 474M1175 474L1177 472M1171 484L1173 486M1187 484L1186 476M1177 472L1186 476M1204 475L1198 488M1204 475L1202 474M1202 474L1194 472M1186 476L1194 472M551 368L560 366M554 353L558 356M560 366L558 356M1198 459L1198 460M1198 460L1190 463M1187 462L1190 463M1211 461L1198 459M1210 423L1209 415M1177 466L1175 463M1177 466L1187 462M1211 461L1211 462M1204 475L1205 475M1211 462L1205 475M1202 474L1198 460M1194 472L1190 463M1177 472L1177 466M1154 465L1156 470M1154 465L1162 459M1163 459L1162 459M1163 459L1163 472M1156 470L1160 474M1163 472L1160 474M1141 462L1154 465M1159 446L1162 459M1141 462L1159 446M1175 463L1163 459M1175 474L1163 472M1158 483L1160 474M1161 487L1171 484M1211 119L1224 115M1196 141L1204 127M1220 102L1224 115M1199 491L1206 497M1191 508L1201 508M1201 508L1206 497M602 371L604 383M609 383L604 383M1377 168L1375 152M1377 168L1378 168M1378 168L1388 161M1375 152L1384 149M1384 149L1388 161M1289 37L1285 50M1327 76L1328 78M1327 76L1326 76M1329 89L1322 94M1326 76L1318 78M1285 50L1289 54M1290 59L1289 54M2146 245L2142 248M2140 249L2137 251M590 408L589 422M590 408L596 406M596 406L605 412M605 412L595 422M589 422L595 422M611 421L603 426M611 421L612 412M612 412L605 412M603 426L595 422M611 421L618 430M618 430L620 440M770 889L782 913M776 917L782 913M776 917L780 942M770 889L779 887M779 887L793 904M782 913L788 913M793 904L788 913M604 383L602 385M602 371L586 372M586 372L586 374M602 385L586 374M560 366L564 369M574 346L568 369M558 356L574 346M568 369L564 369M584 370L573 370M568 369L573 370M536 379L543 381M564 369L560 381M599 391L602 385M599 391L586 392M586 374L583 387M586 392L583 387M584 370L586 372M573 370L571 387M583 387L571 387M571 387L567 389M733 574L745 575M732 575L742 585M742 585L745 575M744 562L746 574M746 574L745 575M743 593L742 585M1405 145L1398 152M1390 147L1398 152M1390 147L1399 138M1405 145L1403 140M1399 138L1403 140M1406 167L1393 169M1406 167L1404 159M1404 159L1401 157M1401 157L1390 162M1390 162L1393 169M1414 151L1405 145M1414 151L1404 159M1398 152L1401 157M1385 147L1384 149M1385 147L1390 147M1388 161L1390 162M1384 174L1378 168M1384 174L1391 174M1391 174L1393 169M1298 295L1293 305M1283 304L1293 305M1279 316L1282 304M1282 304L1283 304M1283 321L1294 319M1296 313L1294 319M1279 316L1283 321M1296 313L1293 305M1304 294L1306 308M1306 308L1314 312M1296 313L1306 308M1252 245L1266 239M1266 239L1268 241M1305 339L1314 332M1305 339L1299 325M1314 332L1311 322M1311 322L1299 324M1299 324L1299 325M1335 341L1314 332M1335 341L1307 346M1307 346L1304 342M1304 342L1305 339M1303 342L1291 337M1291 337L1299 325M1304 342L1303 342M1313 320L1311 322M1363 345L1335 341M1294 319L1299 324M1243 282L1240 272M1246 268L1240 272M1202 157L1202 147M1197 145L1202 147M1196 141L1197 145M1202 147L1206 147M1212 361L1210 361M1210 361L1202 355M1199 348L1202 355M1411 28L1407 32M1407 32L1419 42M1411 28L1417 26M1423 26L1427 37M1419 42L1427 37M1354 49L1349 48M1349 48L1347 44M1347 44L1354 32M1395 30L1399 33M1395 30L1389 27M1387 28L1382 44M1399 33L1393 46M1382 46L1393 46M1405 14L1411 28M1401 13L1395 30M1407 32L1399 33M1407 32L1407 32M1395 48L1393 46M1408 53L1395 48M1408 53L1407 32M1385 147L1383 139M1396 131L1399 138M1396 131L1390 129M1383 139L1390 129M1311 125L1312 122M1291 91L1283 78M1308 133L1302 135M1298 89L1298 78M1283 78L1287 76M1287 76L1298 78M1290 59L1290 60M1287 76L1290 60M1308 80L1300 77M1300 77L1298 78M1306 52L1298 62M1306 52L1312 65M1312 65L1312 65M1312 65L1303 67M1303 67L1298 62M1326 76L1321 59M1318 78L1312 65M1321 59L1312 65M1300 77L1303 67M1290 60L1298 62M1977 519L1974 516M1977 519L1990 522M2131 282L2133 286M2129 297L2130 292M2130 292L2132 291M2133 286L2132 291M1910 578L1915 579M1906 560L1907 558M1910 578L1906 560M1206 497L1216 496M1201 508L1205 516M1205 475L1209 477M1216 496L1219 495M1219 495L1219 494M1209 477L1219 494M1233 461L1225 464M1211 462L1225 464M1225 464L1225 464M1209 477L1224 473M1225 464L1224 473M1308 358L1307 346M1308 358L1317 362M762 498L755 501M761 494L762 498M755 492L751 494M636 435L650 433M602 397L614 401M602 397L599 391M609 383L618 390M618 390L614 401M612 412L617 408M602 397L596 406M617 408L614 401M805 919L791 917M805 919L807 921M791 917L791 939M811 936L798 940M798 940L791 939M808 894L793 904M808 894L809 895M809 895L805 919M788 913L791 917M780 942L791 939M587 405L584 399M584 399L576 400M590 408L587 405M586 392L584 399M1493 90L1494 91M1494 91L1521 111M1500 153L1499 170M1502 172L1499 170M1502 172L1496 195M1469 85L1460 72M1469 85L1478 86M1478 85L1478 86M1460 72L1461 58M1461 58L1463 56M1476 43L1486 33M1493 90L1478 85M1439 77L1453 76M1453 76L1460 72M1431 71L1439 77M1455 58L1461 58M883 538L879 535M879 535L865 518M1373 170L1365 169M1373 170L1375 185M1365 169L1365 183M1375 185L1365 183M1375 152L1370 151M1377 168L1373 170M1363 168L1361 159M1365 169L1363 168M1361 159L1370 151M1332 247L1322 251M1332 247L1337 262M1293 149L1299 144M1293 149L1292 158M1280 157L1277 152M1280 157L1284 159M1284 159L1292 158M1234 291L1233 285M1233 285L1225 286M1223 295L1225 286M1213 283L1221 282M1213 283L1209 288M1225 286L1221 282M1217 295L1209 289M1209 288L1209 289M1266 296L1266 300M1266 300L1270 305M1280 303L1270 305M1282 304L1280 303M1279 316L1271 315M1271 315L1270 305M1222 312L1222 309M1214 306L1209 304M1209 289L1205 294M1195 288L1196 293M1195 288L1199 283M1199 283L1209 288M1266 300L1258 307M1252 299L1258 307M1253 180L1256 183M1248 185L1244 193M1256 183L1256 190M1256 190L1247 196M1244 193L1247 196M1216 162L1231 146M1218 162L1235 160M1235 160L1231 146M1228 143L1231 144M1231 146L1231 144M1233 143L1231 144M1260 197L1256 190M1266 181L1269 183M1266 181L1256 183M1260 197L1268 198M1268 198L1268 198M1268 198L1269 183M1258 362L1271 364M1303 342L1293 349M1291 337L1288 338M1293 349L1286 345M1288 338L1286 345M1283 321L1280 329M1288 338L1280 329M1422 61L1413 53M1407 64L1409 54M1409 54L1413 53M1418 49L1428 52M1428 52L1428 60M1418 49L1413 53M1423 82L1426 74M1423 82L1412 84M1412 84L1410 84M1404 76L1410 84M1408 53L1409 54M1419 42L1418 49M1439 49L1431 50M1439 49L1441 41M1431 50L1429 38M1441 41L1437 36M1437 36L1429 38M1428 52L1431 50M1427 37L1429 38M1440 26L1437 36M1332 74L1327 76M1321 59L1325 54M1332 74L1329 57M1329 57L1327 54M1325 54L1327 54M1403 91L1410 84M1349 48L1345 54M1345 54L1347 62M1359 65L1347 62M1332 74L1340 74M1329 57L1344 65M1344 65L1340 74M1370 151L1367 144M1383 139L1373 133M1373 133L1367 144M1292 158L1295 160M1295 160L1309 151M1299 144L1309 150M1309 151L1309 150M1973 231L1983 229M1983 229L2008 248M1968 247L2002 263M1968 247L1973 231M1986 211L1983 229M2055 266L2059 267M2127 560L2114 576M2169 597L2160 585M2160 585L2153 586M2015 558L2003 558M1977 519L1982 533M1982 533L1990 532M1941 591L1943 590M2003 558L2001 560M2130 292L2124 290M1911 255L1891 227M1880 246L1911 255M1880 246L1883 231M1883 231L1891 227M1906 217L1892 225M1906 217L1915 225M1916 259L1911 255M1915 225L1916 259M1891 227L1892 225M1825 184L1816 201M1649 284L1652 300M1649 284L1638 287M1638 287L1642 303M1652 300L1644 304M1642 303L1644 304M1667 267L1649 284M1662 301L1652 300M1890 550L1900 545M1919 473L1920 465M1219 495L1224 498M1221 512L1225 506M1225 506L1224 498M812 498L807 509M812 498L808 493M799 510L807 509M799 510L799 496M799 496L808 493M842 517L843 512M836 506L843 512M842 517L833 522M836 506L828 513M833 522L828 513M715 483L712 475M706 473L712 475M667 426L673 432M671 421L679 419M685 427L679 419M685 427L674 432M673 432L674 432M656 429L662 441M670 442L673 432M670 442L668 443M662 441L668 443M690 458L690 455M690 458L694 465M690 455L694 451M700 460L701 455M700 460L698 463M694 465L698 463M701 455L700 453M694 451L700 453M711 454L701 455M711 454L711 454M711 454L705 446M700 453L702 446M757 415L761 413M767 417L761 413M633 421L625 418M633 421L634 420M625 418L617 409M632 434L633 421M632 434L620 440M618 430L625 418M650 433L655 429M636 435L632 434M617 408L617 409M804 782L807 796M806 797L807 796M1475 210L1476 210M1489 198L1486 206M1461 197L1460 195M1460 195L1466 185M1489 198L1481 185M1461 197L1475 210M1466 185L1481 185M1499 170L1487 172M1496 195L1489 198M1481 185L1487 172M1436 122L1442 117M1436 122L1439 133M1439 133L1445 135M1445 135L1450 117M1442 117L1450 117M1413 135L1403 140M1413 135L1413 135M1414 151L1416 151M1413 135L1418 140M1418 140L1416 151M1420 123L1413 135M1418 120L1420 123M1413 135L1404 127M1418 120L1408 120M1408 120L1404 127M1396 131L1399 128M1404 127L1399 128M1429 121L1436 122M1429 121L1430 108M1442 117L1438 108M1430 108L1438 108M1420 123L1422 123M1429 121L1422 123M1418 120L1418 109M1418 109L1428 107M1430 108L1428 107M1407 96L1413 97M1407 96L1403 103M1403 103L1410 107M1413 97L1416 98M1416 98L1416 106M1410 107L1416 106M1403 91L1407 96M1412 84L1413 97M1423 82L1420 96M1423 82L1423 82M1420 96L1416 98M1420 96L1428 99M1418 109L1416 106M1428 107L1428 99M1404 115L1408 120M1404 115L1410 107M812 514L808 524M812 514L807 509M798 510L795 522M799 510L798 510M808 524L795 522M790 523L795 522M782 519L790 523M782 519L781 512M798 510L786 506M786 506L781 512M795 522L795 522M782 559L784 561M784 561L786 571M784 573L776 563M784 573L785 573M776 563L782 559M785 573L786 571M821 600L822 600M824 599L822 600M821 600L807 586M824 599L816 577M807 586L816 577M791 585L797 591M791 585L791 582M791 582L795 578M795 578L804 580M797 591L806 586M806 586L804 580M743 593L745 593M745 593L758 603M757 607L758 603M775 533L785 535M775 533L773 536M773 536L774 547M774 547L782 550M782 550L787 548M787 548L790 540M790 540L785 535M774 525L782 519M790 523L785 535M774 525L775 533M782 559L782 550M773 564L768 556M773 548L768 556M773 564L776 563M773 548L774 547M792 562L793 552M793 552L787 548M784 561L792 562M760 545L759 535M760 545L757 548M757 548L742 541M759 535L755 532M755 532L753 531M773 548L760 545M773 536L759 535M768 556L763 557M757 555L763 557M757 555L757 548M754 558L746 559M754 558L757 555M746 559L741 543M774 525L769 522M769 522L755 532M744 562L745 561M745 561L746 559M745 561L758 572M754 558L761 571M761 571L758 572M763 557L763 570M761 571L763 570M773 564L769 572M763 570L769 572M746 574L755 576M758 572L755 576M745 593L757 585M755 576L757 585M762 601L758 603M762 601L764 587M757 585L764 587M1393 178L1391 174M1384 174L1381 185M1393 178L1385 186M1385 186L1381 185M1375 185L1375 186M1381 185L1375 186M1315 247L1318 234M1333 245L1332 247M1318 234L1324 232M1290 239L1287 231M1273 239L1275 233M1287 231L1275 233M1337 262L1345 255M1358 267L1358 264M1377 277L1382 269M1390 276L1382 269M1221 282L1224 274M1208 272L1216 268M1216 268L1223 273M1208 272L1213 283M1223 273L1224 274M1233 285L1234 284M1234 284L1233 274M1224 274L1233 274M1243 284L1234 284M1240 272L1235 272M1235 272L1233 274M1202 265L1207 272M1207 272L1198 279M1199 283L1198 279M1208 272L1207 272M1219 170L1224 175M1271 205L1265 210M1268 198L1271 205M1260 197L1255 205M1265 210L1255 205M1247 205L1247 196M1247 205L1249 206M1249 206L1250 207M1255 205L1250 207M1247 205L1233 206M1244 193L1237 192M1233 206L1234 193M1248 170L1237 162M1254 151L1249 152M1249 152L1237 161M1237 161L1237 162M1271 169L1269 169M1269 169L1267 167M1280 157L1271 169M1266 181L1269 169M1230 172L1237 162M1233 143L1249 152M1235 160L1237 161M1268 198L1280 191M1269 183L1274 184M1274 184L1280 191M1271 169L1284 174M1274 184L1284 174M1286 363L1295 358M1303 360L1295 358M1271 364L1277 355M1277 355L1286 363M1286 345L1276 351M1277 355L1276 351M1293 349L1295 358M1308 358L1303 360M1280 462L1280 462M1280 462L1269 454M1269 454L1263 462M1263 462L1270 468M1270 468L1280 462M1263 462L1259 463M1354 28L1339 31M1339 31L1333 20M1306 52L1306 50M1325 54L1314 44M1314 44L1306 50M1289 54L1297 47M1306 50L1297 47M1289 37L1295 38M1295 38L1297 47M1404 115L1397 113M1403 103L1397 104M1397 104L1397 113M1399 128L1397 113M1397 113L1397 113M1329 136L1327 149M1327 149L1314 144M1315 139L1314 144M1309 150L1314 144M1885 186L1880 205M1885 186L1900 186M1900 186L1905 202M1905 202L1880 205M1880 205L1880 205M1908 205L1906 217M1908 205L1905 202M1892 225L1880 205M1884 185L1863 186M1869 71L1863 106M1871 206L1880 205M1861 190L1871 206M1861 190L1863 186M1885 186L1884 185M1905 178L1900 186M1844 193L1837 184M1861 190L1844 193M1825 184L1837 184M1927 181L1925 182M1927 181L1948 182M1925 182L1923 201M1948 182L1949 183M1949 183L1930 205M1923 201L1930 205M1905 178L1925 182M1908 205L1923 201M1915 225L1935 219M1916 259L1926 274M1968 247L1943 265M1943 265L1930 285M1880 246L1861 263M1986 211L1980 198M1981 196L1980 198M2151 572L2150 580M2151 572L2134 572M2150 580L2135 585M2134 572L2133 581M2133 581L2135 585M2153 586L2150 580M2128 560L2134 572M2121 581L2133 581M1901 432L1901 431M1901 431L1904 427M1920 432L1907 439M1907 439L1901 432M1904 427L1915 423M1963 566L1962 559M1982 565L1962 559M1696 299L1697 317M1716 361L1694 346M1700 334L1694 346M1838 410L1845 407M1842 203L1836 209M1842 203L1863 219M1836 209L1840 230M1840 230L1854 232M1854 232L1863 222M1863 219L1863 222M1816 201L1824 209M1824 209L1836 209M1844 193L1842 203M1871 206L1863 219M1861 263L1854 232M1883 231L1863 222M1803 228L1818 221M1803 228L1826 248M1818 221L1834 233M1826 248L1834 233M1824 209L1818 221M1840 230L1834 233M1637 328L1635 324M1637 328L1645 334M1650 317L1652 318M1650 317L1636 323M1652 318L1654 334M1645 334L1654 334M1636 323L1635 324M1654 334L1654 334M1631 342L1637 328M1619 339L1631 342M1633 324L1635 324M1619 339L1633 324M1640 345L1645 334M1635 346L1640 345M1631 342L1635 346M1660 315L1663 302M1662 301L1663 302M1644 304L1650 317M1660 315L1652 318M1638 305L1636 323M1642 303L1638 305M1640 345L1650 350M1653 349L1650 350M1653 349L1654 334M1654 334L1662 334M1660 315L1665 319M1665 319L1662 334M1674 304L1679 311M1674 304L1687 276M1679 311L1694 296M1687 276L1694 296M1686 238L1667 267M1663 302L1674 304M1696 299L1694 296M1697 317L1691 321M1700 334L1692 327M1692 327L1691 321M1679 311L1681 316M1691 321L1681 316M1665 319L1677 319M1681 316L1677 319M1638 287L1638 286M1617 230L1618 239M1588 285L1597 290M1598 290L1597 290M1577 299L1576 297M1577 299L1590 307M1597 290L1590 307M1556 323L1559 309M1556 323L1566 333M1581 322L1568 333M1581 322L1566 309M1566 309L1559 309M1566 333L1568 333M1559 309L1557 307M1577 299L1566 309M1557 307L1561 291M1885 520L1895 516M1876 528L1879 529M1895 516L1901 536M1897 512L1895 516M1870 534L1876 528M1877 544L1890 550M1919 473L1906 478M1242 511L1239 503M1224 498L1232 497M1232 497L1239 503M1444 489L1433 498M1444 489L1445 488M1445 488L1441 480M1441 480L1427 479M1427 479L1428 498M1433 498L1428 498M1444 508L1451 503M1451 503L1444 489M1442 509L1444 508M1442 509L1440 508M1440 508L1433 498M1462 535L1461 520M1462 535L1474 532M1461 520L1472 527M1474 532L1472 527M1492 548L1496 558M1492 548L1501 541M1496 558L1504 560M1502 540L1501 541M1502 540L1518 537M1518 537L1523 540M1491 583L1486 583M1496 572L1491 568M1491 568L1486 573M1486 573L1486 582M1486 582L1486 583M1490 562L1496 558M1490 562L1491 568M799 496L796 495M808 488L808 493M808 488L796 486M793 489L796 495M786 506L786 503M796 495L786 503M858 511L864 518M858 511L850 513M850 513L858 521M864 518L858 521M865 518L864 518M858 502L865 494M858 502L858 511M858 502L850 505M845 511L850 505M845 511L850 513M842 517L846 526M843 512L845 511M846 526L855 525M855 525L858 521M879 535L858 532M858 532L855 525M829 551L837 547M836 536L837 547M823 548L829 551M823 548L825 538M836 536L835 535M825 538L835 535M843 533L846 526M843 533L836 536M833 522L831 525M835 535L831 525M828 513L820 515M820 515L823 524M831 525L823 524M857 544L851 550M857 544L853 539M853 539L850 538M850 538L844 549M844 549L851 550M868 547L857 544M868 547L862 560M862 560L858 560M858 560L851 550M858 532L853 539M883 538L868 547M843 533L850 538M837 547L842 550M842 550L844 549M862 560L867 567M868 568L867 567M842 550L843 560M829 551L829 560M829 560L843 560M827 486L831 502M827 486L817 498M831 502L822 503M817 498L822 503M827 486L827 486M810 483L827 486M810 483L808 488M812 498L817 498M836 505L831 502M836 506L836 505M820 514L820 515M820 514L822 503M812 514L820 514M788 486L785 487M785 487L769 479M799 475L795 477M810 483L807 475M786 503L781 497M781 497L785 487M774 498L781 497M774 498L768 481M766 517L757 514M766 517L772 509M757 513L766 501M772 509L769 502M766 501L769 502M769 522L766 517M781 512L772 509M762 498L766 501M774 498L769 502M704 468L711 462M704 468L706 473M706 473L715 465M716 463L713 461M713 461L711 462M698 463L704 468M700 460L711 462M706 473L706 473M711 454L713 461M685 427L687 428M679 419L689 407M681 455L677 449M681 455L680 460M677 449L669 454M690 455L686 453M690 458L682 461M686 453L681 455M670 442L678 445M678 445L677 449M668 443L669 454M677 436L679 445M677 436L686 436M679 445L683 445M674 432L677 436M678 445L679 445M686 453L685 446M694 451L692 446M761 413L763 409M729 401L731 399M737 398L731 399M804 868L811 880M804 868L794 868M787 882L808 894M787 882L790 870M808 894L811 880M790 870L794 868M811 857L828 866M817 877L811 880M811 857L804 868M779 887L787 882M808 894L808 894M795 835L800 844M800 844L794 850M794 850L776 854M810 848L811 857M794 868L794 850M810 848L800 844M790 870L776 860M823 794L840 797M823 794L824 781M824 781L842 781M840 797L843 782M842 781L843 782M1494 91L1485 106M1521 111L1499 115M1499 115L1485 106M1478 86L1477 107M1485 106L1477 107M1458 101L1469 85M1458 101L1459 105M1459 105L1476 108M1477 107L1476 108M1438 133L1432 144M1438 133L1427 133M1432 144L1425 138M1427 133L1425 138M1439 133L1438 133M1422 123L1427 133M1418 140L1425 138M1416 151L1418 152M1418 152L1432 147M1432 147L1432 144M1440 86L1449 91M1440 86L1434 92M1434 92L1434 94M1434 94L1442 101M1442 101L1453 99M1453 99L1449 91M1439 77L1440 86M1453 76L1449 91M1423 82L1434 92M1428 99L1434 94M1438 108L1442 101M1456 115L1450 117M1458 101L1453 99M1459 105L1456 115M793 552L804 551M804 551L805 547M790 540L795 538M805 547L795 538M795 522L798 534M795 538L798 534M786 571L793 567M795 578L797 573M785 573L791 582M797 573L793 567M792 562L794 564M793 567L794 564M762 618L772 610M762 618L757 607M762 601L770 602M772 610L770 602M807 586L806 586M821 600L811 602M797 591L797 593M811 602L797 593M777 576L771 574M777 576L781 589M771 574L767 586M767 586L772 589M772 589L781 589M781 589L781 589M784 573L777 576M769 572L771 574M791 585L781 589M764 587L767 586M770 602L770 602M770 602L772 589M770 602L782 599M782 599L781 589M797 593L794 598M785 603L794 598M782 599L785 603M1433 148L1432 147M1433 148L1432 159M1418 152L1419 156M1419 156L1429 161M1432 159L1429 161M1436 148L1446 159M1446 159L1441 162M1433 148L1436 148M1432 159L1441 162M1419 156L1416 169M1416 169L1428 166M1429 161L1428 166M1393 178L1394 178M1406 167L1410 172M1394 178L1405 178M1405 178L1410 172M1416 169L1413 172M1410 172L1413 172M1445 135L1446 136M1436 148L1445 144M1446 136L1445 144M1464 128L1458 135M1456 115L1464 128M1446 136L1458 135M1446 159L1453 159M1453 159L1455 157M1445 144L1455 157M1361 247L1365 241M1349 239L1360 231M1360 231L1365 241M1394 178L1396 194M1385 186L1391 193M1396 194L1391 193M1310 153L1309 151M1310 153L1320 156M1327 149L1328 150M1320 156L1328 150M1361 159L1357 157M1360 142L1367 144M1360 142L1351 146M1357 157L1351 146M1353 174L1348 169M1363 168L1353 174M1348 169L1350 160M1357 157L1350 160M1339 168L1342 158M1348 169L1339 168M1350 160L1342 158M1342 229L1353 224M1360 231L1360 229M1353 224L1360 229M1365 183L1361 186M1352 180L1353 174M1352 180L1353 183M1353 183L1361 186M1288 228L1287 231M1288 228L1297 226M1297 226L1305 231M1318 234L1308 229M1305 231L1308 229M1295 160L1298 168M1284 159L1285 174M1298 168L1285 174M1310 153L1309 166M1309 166L1299 169M1298 168L1299 169M1285 191L1281 191M1280 191L1281 191M1284 174L1285 174M1285 191L1287 178M1287 178L1285 174M1285 174L1285 174M1307 180L1300 179M1307 180L1310 187M1297 183L1300 179M1297 183L1297 193M1297 193L1300 194M1300 194L1307 193M1307 193L1310 187M1299 169L1300 179M1287 178L1297 183M1292 194L1285 191M1292 194L1297 193M1281 191L1278 206M1271 205L1277 207M1277 207L1278 206M1270 223L1275 220M1275 233L1270 223M1288 228L1286 222M1286 222L1275 220M1382 269L1382 267M1370 265L1375 263M1375 263L1382 267M1270 223L1269 223M1277 207L1275 220M1265 210L1263 218M1269 223L1263 218M1266 239L1261 232M1269 223L1261 232M1216 268L1216 264M1202 265L1206 258M1206 258L1212 258M1216 264L1212 258M1241 258L1232 262M1241 258L1240 250M1240 250L1229 249M1229 261L1232 262M1229 261L1226 258M1226 258L1225 252M1229 249L1225 252M1249 264L1241 258M1235 272L1232 262M1223 273L1229 261M1216 264L1226 258M1252 245L1249 243M1240 250L1244 244M1249 243L1244 244M1229 249L1231 242M1244 244L1238 238M1249 206L1240 223M1206 258L1203 251M1199 249L1203 251M1224 362L1241 364M1212 361L1216 360M1216 360L1223 362M1224 362L1223 362M1216 360L1217 345M1199 348L1200 344M1217 345L1200 344M1191 325L1197 330M1197 330L1200 344M1280 462L1280 462M1337 34L1330 35M1337 34L1339 41M1330 35L1327 53M1339 41L1333 51M1333 51L1327 53M1347 44L1339 41M1339 31L1337 34M1345 54L1333 51M1327 54L1327 53M1344 65L1347 62M1390 129L1386 123M1386 123L1380 122M1397 113L1391 116M1386 123L1391 116M1391 101L1383 107M1391 116L1383 107M2048 271L2051 276M2048 271L2047 270M2047 270L2040 277M2040 279L2048 279M2048 279L2051 276M2055 266L2048 271M2041 263L2047 270M2049 286L2046 288M2049 286L2048 279M1938 215L1956 197M1938 215L1938 217M1938 217L1953 225M1966 202L1956 197M1966 202L1960 224M1960 224L1953 225M1949 183L1956 197M1949 183L1949 183M1930 205L1938 215M1935 219L1938 217M1943 265L1953 225M1973 231L1960 224M1980 198L1966 202M1976 183L1961 174M1949 183L1961 174M1981 196L1976 183M1923 436L1915 448M1918 452L1915 448M1920 465L1916 462M1918 452L1916 462M1906 478L1909 464M1916 462L1909 464M1849 435L1845 432M1838 410L1843 425M1904 427L1897 411M1897 411L1894 411M1901 431L1889 422M1894 411L1889 422M1899 410L1910 412M1910 412L1914 398M1907 380L1914 398M1916 419L1910 412M1897 411L1899 410M1928 407L1914 398M1961 556L1979 549M1961 556L1955 552M1956 549L1968 537M1956 549L1955 552M1968 537L1978 541M1978 541L1980 546M1980 546L1979 549M1982 563L1979 549M1962 559L1961 556M1944 558L1955 552M1982 533L1978 541M1989 547L1980 546M2062 293L2056 291M2059 282L2056 287M2056 287L2056 291M2051 276L2054 277M2049 286L2056 287M2048 295L2054 296M2054 296L2056 291M2054 296L2056 301M2062 293L2063 302M2063 302L2056 301M2053 306L2056 301M1702 389L1693 377M1716 361L1701 366M1701 366L1693 377M1702 389L1685 388M1685 388L1687 378M1693 377L1687 378M1694 346L1689 346M1701 366L1684 360M1689 346L1684 360M1682 375L1687 378M1670 381L1682 375M1654 369L1648 368M1654 369L1660 379M1648 368L1643 376M1662 334L1668 337M1677 319L1674 334M1668 337L1674 334M1692 327L1684 337M1674 334L1684 337M1689 346L1685 343M1684 337L1685 343M1590 307L1592 316M1581 322L1584 321M1584 321L1592 316M1612 294L1610 308M1612 294L1618 291M1622 293L1618 291M1622 293L1628 305M1610 308L1622 314M1628 305L1622 314M1598 290L1612 294M1592 316L1593 316M1593 316L1600 315M1600 315L1610 308M1638 286L1622 293M1638 305L1628 305M1600 315L1615 325M1623 317L1622 314M1623 317L1615 325M1633 324L1623 317M1387 256L1388 262M1388 262L1391 264M1393 265L1396 266M1392 251L1387 256M1392 251L1396 251M1396 251L1399 261M1548 345L1544 343M1548 345L1566 333M1556 323L1549 325M1544 343L1549 325M1536 310L1540 322M1536 310L1545 304M1545 304L1557 307M1549 325L1540 322M1232 497L1238 488M1239 503L1247 494M1238 488L1244 488M1247 494L1244 488M1253 507L1256 499M1256 499L1256 497M1247 494L1256 497M1233 461L1237 462M1251 437L1243 460M1237 462L1243 460M1237 486L1239 476M1237 486L1226 481M1226 481L1226 477M1226 477L1238 475M1238 475L1239 476M1219 494L1226 481M1238 488L1237 486M1224 473L1226 477M1237 462L1238 475M1429 516L1440 508M1429 516L1424 513M1428 498L1424 500M1424 513L1424 500M1371 462L1375 475M1371 462L1366 459M1366 459L1357 473M1375 475L1363 479M1363 479L1357 473M1353 437L1366 459M1384 459L1371 462M1341 581L1325 581M1341 581L1351 595M1331 609L1335 610M1335 610L1351 595M1346 577L1341 581M1359 579L1346 577M1359 579L1363 592M1351 595L1363 592M1347 679L1347 662M1347 662L1340 656M1336 688L1347 679M1340 656L1338 657M1338 657L1323 647M1335 610L1339 614M1339 614L1338 632M1324 640L1338 632M1378 761L1386 762M1394 768L1386 762M1386 762L1398 746M1398 746L1396 742M1393 740L1396 742M1393 740L1380 738M1378 761L1375 758M1380 738L1375 758M1375 758L1362 758M1394 598L1412 597M1412 597L1416 606M1393 598L1394 598M1393 598L1390 614M1403 621L1416 606M1403 621L1395 621M1390 614L1395 621M1374 701L1384 708M1374 701L1379 687M1384 708L1395 698M1395 698L1390 685M1379 687L1390 685M1463 678L1448 665M1463 678L1465 677M1475 667L1468 654M1468 654L1466 653M1448 665L1466 653M1461 487L1445 488M1461 487L1462 476M1462 476L1461 474M1441 480L1446 471M1446 471L1461 474M1461 487L1466 493M1466 493L1480 490M1480 490L1483 486M1462 476L1477 475M1483 486L1477 475M1463 512L1461 504M1463 512L1475 515M1480 507L1464 501M1480 507L1476 515M1464 501L1461 504M1476 515L1475 515M1444 508L1453 520M1451 503L1461 504M1453 520L1460 518M1460 518L1463 512M1472 527L1475 515M1460 518L1461 520M1482 506L1480 490M1482 506L1480 507M1466 493L1464 501M1486 522L1498 523M1486 522L1485 522M1485 522L1482 534M1482 534L1494 533M1494 533L1498 523M1476 515L1485 522M1491 508L1486 522M1491 508L1482 506M1480 535L1482 534M1480 535L1474 532M1480 535L1491 547M1480 535L1475 545M1475 545L1478 555M1491 547L1478 555M1502 540L1501 539M1501 539L1494 533M1480 535L1480 535M1492 548L1491 547M1463 556L1477 559M1463 556L1462 569M1472 571L1468 572M1472 571L1477 565M1477 565L1478 560M1462 569L1468 572M1477 559L1478 560M1483 583L1472 571M1486 582L1483 583M1486 573L1477 565M1490 562L1478 560M1478 555L1477 559M1394 598L1393 579M1413 596L1413 591M1408 574L1413 591M1412 597L1413 596M1408 574L1399 573M1393 579L1399 573M1393 598L1373 592M1373 592L1380 576M1393 579L1380 576M1359 579L1362 571M1363 592L1367 594M1373 592L1367 594M1362 571L1379 575M1380 576L1379 575M1428 578L1413 591M1428 576L1428 578M1408 574L1413 569M1428 576L1424 571M1424 571L1413 569M1428 576L1438 568M1438 568L1434 561M1434 561L1429 562M1424 571L1429 562M1435 549L1436 558M1435 549L1439 545M1439 545L1446 548M1436 558L1446 560M1434 561L1436 558M1429 562L1417 549M1417 549L1435 549M1438 568L1445 571M1445 571L1445 571M1445 571L1447 561M1445 571L1452 575M1458 570L1454 564M1452 575L1458 570M1463 553L1470 545M1457 544L1458 538M1470 545L1459 537M1459 537L1458 538M1475 545L1470 545M1463 556L1462 555M1458 570L1462 569M1462 535L1459 537M1429 516L1432 522M1424 513L1411 519M1411 519L1418 534M1432 522L1418 534M1468 654L1492 641M1464 649L1466 653M1462 637L1464 649M1462 637L1470 633M1470 633L1485 635M1485 635L1492 641M1501 616L1495 628M1502 646L1493 641M1495 628L1493 641M1543 700L1543 692M1543 700L1522 698M1543 692L1535 684M1535 684L1522 697M1554 646L1547 640M1551 491L1557 475M1551 491L1555 505M1526 538L1530 519M1534 484L1551 491M1534 484L1538 504M1555 505L1538 504M1489 616L1485 612M1489 616L1489 621M1485 612L1478 622M1489 621L1481 624M1478 622L1481 624M1495 628L1489 621M1501 615L1489 616M1493 641L1492 641M1485 635L1481 624M1476 621L1478 622M1470 633L1476 621M1486 583L1488 598M1488 598L1493 601M1483 583L1480 585M1480 585L1478 599M1488 598L1478 599M1485 612L1485 611M1493 601L1485 611M1476 621L1473 618M1473 618L1475 606M1485 611L1475 606M1643 376L1631 376M1628 380L1631 376M843 491L830 483M843 491L844 491M844 491L846 489M827 486L830 483M836 505L843 491M850 505L844 491M821 526L823 537M821 526L811 529M823 537L811 537M811 529L810 534M811 537L810 534M825 538L823 537M823 524L821 526M808 524L811 529M821 548L810 542M823 548L821 548M810 542L811 537M798 534L810 534M810 542L805 547M822 777L824 766M822 777L808 777M808 777L801 764M824 766L824 766M824 766L811 758M801 764L811 758M844 763L842 781M844 763L843 762M843 762L824 766M824 781L822 777M822 795L807 796M804 782L808 777M822 795L823 794M842 748L843 762M842 748L829 745M829 745L828 746M828 746L824 766M812 749L828 746M812 749L811 758M810 746L812 749M812 846L830 841M812 846L814 821M830 841L818 820M814 821L818 820M810 848L812 846M838 843L830 841M805 819L795 835M805 819L814 821M805 819L800 812M800 812L806 797M822 795L825 814M825 814L818 820M892 761L889 781M859 814L857 802M851 816L838 818M857 802L843 800M843 800L834 815M838 818L834 815M860 798L885 796M860 798L857 802M840 831L838 818M860 798L858 785M843 782L858 785M840 797L843 800M825 814L834 815M849 642L842 653M848 638L849 642M832 634L830 637M832 634L848 638M830 637L836 653M836 653L842 653M813 678L813 683M813 678L809 670M813 683L803 681M809 670L801 669M797 573L802 571M794 564L801 563M802 571L801 563M804 580L808 574M802 571L808 574M804 551L807 557M807 557L801 563M811 602L803 611M794 598L799 609M803 611L799 609M785 603L785 611M799 609L785 611M803 618L800 622M803 618L817 622M800 622L801 632M816 629L801 633M816 629L817 622M801 632L801 633M817 622L817 622M803 611L803 618M822 600L822 601M822 601L817 622M817 644L811 643M817 644L820 639M820 639L816 629M811 643L803 638M803 638L801 633M820 639L830 637M833 624L832 624M833 624L832 634M832 624L817 622M795 648L803 638M790 647L787 634M787 634L801 632M795 648L790 647M822 601L832 624M1436 173L1434 174M1436 173L1447 176M1438 186L1447 183M1438 186L1434 174M1434 174L1434 174M1447 176L1447 183M1441 162L1436 173M1428 166L1434 174M1453 171L1453 159M1453 171L1447 176M1466 185L1464 179M1453 171L1464 179M1460 195L1456 193M1456 193L1447 183M1413 172L1421 180M1434 174L1423 180M1423 180L1421 180M1464 179L1474 164M1487 172L1476 164M1476 164L1474 164M1455 157L1462 154M1474 164L1462 154M1458 135L1463 152M1462 154L1463 152M1478 123L1490 123M1478 123L1473 128M1473 128L1478 141M1490 123L1493 136M1478 141L1488 145M1493 136L1489 145M1489 145L1488 145M1499 115L1490 123M1476 108L1478 123M1464 128L1473 128M1463 152L1478 141M1476 164L1488 145M1500 153L1489 145M1375 186L1374 191M1362 192L1361 186M1362 192L1366 196M1374 191L1366 196M1405 178L1405 194M1396 194L1399 196M1405 194L1399 196M1352 180L1342 182M1339 168L1337 169M1337 169L1342 182M1324 195L1321 184M1321 184L1333 184M1332 195L1324 195M1332 195L1337 186M1333 184L1337 186M1329 166L1330 169M1329 166L1323 163M1323 163L1311 168M1329 170L1330 169M1329 170L1320 177M1320 177L1313 172M1311 168L1313 172M1320 156L1323 163M1309 166L1311 168M1337 169L1330 169M1338 186L1337 186M1342 182L1338 186M1333 184L1329 170M1321 184L1320 183M1320 183L1320 177M1320 183L1310 187M1307 180L1313 172M1344 149L1341 156M1344 149L1338 146M1341 156L1332 156M1338 146L1330 151M1330 151L1332 156M1351 146L1351 146M1351 146L1344 149M1342 158L1341 156M1337 139L1338 146M1347 136L1351 146M1329 166L1332 156M1328 150L1330 151M1339 224L1342 215M1353 224L1350 216M1350 216L1342 215M1329 214L1325 220M1326 221L1325 220M1329 214L1341 214M1342 215L1341 214M1324 195L1321 198M1307 193L1310 194M1310 194L1321 198M1336 201L1332 195M1336 201L1328 209M1328 209L1321 202M1321 198L1321 202M1317 217L1315 208M1317 217L1309 222M1307 220L1309 222M1307 220L1303 208M1315 208L1310 207M1303 208L1310 207M1329 214L1328 209M1325 220L1317 217M1321 202L1315 208M1308 229L1309 222M1297 218L1307 220M1297 218L1297 226M1310 194L1310 207M1302 207L1300 194M1302 207L1303 208M1288 206L1285 208M1288 206L1296 211M1285 208L1286 222M1286 222L1296 216M1296 216L1296 211M1292 194L1288 206M1278 206L1285 208M1302 207L1296 211M1286 222L1286 222M1297 218L1296 216M1378 252L1376 253M1378 252L1380 244M1380 244L1373 239M1375 253L1376 253M1375 253L1368 241M1373 239L1368 241M1382 267L1388 262M1387 256L1378 252M1375 263L1376 253M1387 240L1388 240M1392 251L1388 240M1387 240L1380 244M1377 230L1387 240M1377 230L1373 239M1369 254L1375 253M1365 241L1368 241M1255 218L1256 218M1255 218L1241 223M1256 218L1255 231M1241 223L1252 232M1255 231L1252 232M1250 207L1255 218M1263 218L1256 218M1240 223L1241 223M1261 232L1255 231M1249 243L1252 232M1210 248L1217 251M1222 250L1217 251M1203 251L1210 248M1212 258L1217 251M1225 252L1222 250M1258 362L1256 357M1241 364L1243 360M1256 357L1243 360M1240 306L1239 323M1222 312L1222 313M1222 313L1239 323M1197 330L1217 330M1222 313L1217 330M1309 449L1306 463M1309 449L1316 456M1312 464L1316 456M1312 464L1310 465M1306 463L1310 465M1293 461L1296 456M1293 461L1295 469M1296 456L1306 463M1306 463L1299 471M1295 469L1299 471M1280 462L1293 461M1298 427L1296 412M1306 463L1306 463M1298 427L1309 449M1307 473L1310 469M1310 465L1310 469M1299 471L1299 471M1299 471L1307 473M1295 38L1300 34M1300 20L1300 34M1314 44L1314 39M1300 34L1314 39M1359 65L1350 81M1354 84L1350 81M1332 88L1338 90M1340 74L1345 80M1338 90L1345 80M1345 80L1350 81M1890 465L1898 458M1909 464L1905 460M1898 458L1905 460M1915 448L1913 448M1905 460L1913 448M1907 439L1909 445M1909 445L1913 448M1894 411L1893 411M2063 302L2065 303M2111 301L2121 304M2120 294L2122 299M2121 304L2122 299M2129 297L2128 297M2128 297L2122 299M2121 304L2123 311M2110 302L2112 309M1663 353L1662 361M1663 353L1669 349M1669 349L1671 349M1671 349L1682 361M1662 361L1670 366M1670 366L1679 364M1679 364L1682 361M1650 350L1643 362M1643 362L1648 368M1654 369L1662 361M1653 349L1663 353M1668 337L1669 349M1685 343L1671 349M1684 360L1682 361M1667 380L1670 366M1682 375L1679 364M1615 325L1613 336M1593 316L1605 338M1605 338L1613 336M1619 339L1618 339M1618 339L1613 336M1611 392L1598 401M1598 401L1595 420M1390 237L1388 240M1390 237L1404 244M1396 251L1404 247M1404 244L1404 247M1408 262L1409 251M1404 247L1409 251M1544 225L1523 237M1523 237L1505 244M1555 283L1542 287M1534 261L1542 287M1545 304L1542 288M1542 287L1542 288M1256 497L1257 496M1257 496L1257 487M1244 488L1250 481M1257 487L1250 481M1427 479L1427 479M1427 479L1416 488M1424 500L1419 498M1416 488L1419 498M1325 581L1329 561M1346 577L1346 564M1346 564L1329 561M1326 557L1328 559M1329 561L1328 559M1384 459L1392 466M1392 466L1399 460M1378 478L1391 478M1391 478L1392 477M1378 478L1375 475M1392 477L1393 473M1392 466L1393 473M1408 485L1416 488M1426 478L1427 479M1426 478L1426 478M1407 482L1412 476M1407 482L1408 485M1426 478L1412 476M1392 477L1407 482M1393 473L1410 468M1412 476L1410 468M1320 467L1330 467M1320 474L1320 467M1320 474L1328 473M1328 473L1331 469M1330 467L1331 469M1367 598L1362 614M1367 598L1382 616M1362 614L1374 621M1382 616L1374 621M1367 594L1367 598M1339 614L1353 618M1353 618L1362 614M1390 614L1382 616M1356 715L1361 706M1356 715L1358 729M1361 706L1377 724M1358 729L1370 732M1370 732L1375 732M1377 724L1375 732M1339 696L1360 701M1361 703L1360 701M1361 703L1361 706M1385 715L1384 708M1385 715L1377 724M1361 703L1374 701M1358 752L1370 732M1380 738L1375 732M1393 740L1398 720M1385 715L1398 720M1353 618L1358 632M1338 632L1345 640M1358 632L1345 640M1340 656L1346 646M1347 662L1360 662M1360 662L1365 646M1365 646L1346 646M1346 646L1345 640M1369 669L1371 682M1369 669L1369 669M1369 669L1354 681M1371 682L1361 690M1361 690L1354 681M1347 679L1354 681M1360 662L1369 669M1379 687L1371 682M1360 701L1361 690M1394 768L1403 765M1398 746L1407 752M1407 752L1403 765M1396 742L1411 730M1398 720L1405 718M1405 718L1411 730M1403 621L1414 630M1416 606L1422 610M1422 610L1414 630M1374 627L1386 637M1374 627L1364 635M1367 644L1364 635M1367 644L1377 647M1377 647L1386 637M1395 621L1392 636M1374 621L1374 627M1392 636L1386 637M1358 632L1364 635M1365 646L1367 644M1379 651L1371 668M1371 668L1369 669M1379 651L1377 647M1390 685L1392 680M1371 668L1389 671M1392 680L1389 671M1493 443L1476 450M1495 446L1486 462M1476 450L1477 461M1486 462L1479 462M1477 461L1479 462M1468 440L1476 450M1468 440L1482 424M1461 474L1465 463M1465 463L1477 461M1477 475L1479 462M1446 471L1445 466M1426 478L1434 460M1445 466L1434 460M1494 467L1495 473M1486 462L1494 467M1483 486L1489 486M1489 486L1495 473M1532 482L1525 485M1518 495L1525 485M1534 484L1532 482M1538 504L1536 505M1518 495L1519 498M1519 498L1536 505M1530 519L1529 518M1529 518L1536 505M1501 539L1505 524M1498 523L1500 522M1505 524L1500 522M1518 537L1512 523M1505 524L1512 523M1468 572L1467 584M1453 583L1453 583M1452 575L1453 583M1453 583L1467 584M1480 585L1468 586M1467 584L1468 586M1436 582L1432 581M1436 582L1442 588M1432 581L1429 592M1442 588L1441 591M1441 591L1432 593M1432 593L1429 592M1445 571L1436 582M1428 578L1432 581M1453 583L1442 588M1413 596L1429 592M1430 609L1434 606M1434 606L1432 593M1430 609L1424 610M1424 610L1422 610M1413 569L1413 549M1417 549L1414 548M1414 548L1413 549M1399 573L1393 561M1413 549L1393 561M1379 575L1382 559M1382 559L1386 557M1386 557L1393 561M1439 545L1439 543M1418 535L1432 536M1418 535L1413 546M1413 546L1414 548M1439 543L1432 536M1418 534L1418 535M1432 522L1438 525M1432 536L1438 525M1462 637L1460 635M1473 618L1467 619M1460 635L1460 635M1467 619L1460 635M1543 692L1550 685M1535 684L1536 679M1478 599L1476 600M1475 606L1474 605M1474 605L1476 600M1468 586L1467 589M1476 600L1467 589M1580 419L1572 403M1595 420L1580 419M1598 401L1586 395M1586 395L1572 403M844 598L855 595M844 598L842 620M842 620L851 627M864 598L855 595M864 598L863 621M863 621L858 626M851 627L858 626M833 624L842 620M824 599L837 595M837 595L844 598M848 638L851 627M867 567L853 578M853 578L855 595M892 634L863 621M916 629L892 634M866 641L858 626M866 641L881 640M892 634L881 640M861 645L849 642M861 645L866 641M852 563L852 575M852 563L843 561M852 575L842 572M843 561L840 569M840 569L842 572M858 560L852 563M853 578L852 575M843 560L843 561M836 588L842 572M837 595L836 588M829 570L840 569M827 563L829 570M829 560L827 563M836 588L828 574M828 574L829 570M762 620L758 624M762 618L762 620M790 647L780 650M778 649L776 636M787 634L786 633M786 633L776 636M762 620L774 623M764 636L776 636M774 623L776 636M776 636L776 636M810 746L811 735M805 729L811 735M829 745L825 732M811 735L825 732M842 748L847 743M847 743L843 730M843 730L826 731M825 732L826 731M859 784L875 780M859 784L858 765M875 778L873 766M873 766L861 764M858 765L861 764M880 784L875 780M858 785L859 784M844 763L858 765M892 761L891 761M882 760L891 761M882 760L873 766M882 760L872 745M872 745L866 745M864 745L866 745M864 745L861 764M864 745L857 742M847 743L857 742M873 660L885 665M873 660L881 640M916 629L897 657M885 665L897 657M861 649L851 663M861 649L870 661M870 661L870 662M870 662L852 663M851 663L852 663M842 653L849 663M849 663L851 663M861 645L861 649M873 660L870 661M860 674L852 663M870 662L860 674M870 662L870 662M832 656L835 675M832 656L821 657M821 657L821 657M821 657L822 668M822 668L833 676M833 676L835 675M836 653L832 656M849 663L844 672M844 672L835 675M817 644L821 657M816 685L814 684M813 683L814 684M829 687L816 685M829 687L833 676M813 678L822 668M797 653L804 653M797 653L796 659M800 663L812 660M804 653L813 660M813 660L812 660M795 648L797 653M811 643L804 653M809 670L812 660M821 657L813 660M800 696L813 702M811 714L813 713M813 713L815 706M813 702L815 706M814 684L801 694M805 729L811 714M816 685L813 702M825 720L826 731M825 720L813 713M834 713L825 720M830 700L834 713M830 700L815 706M829 687L833 692M833 692L830 700M809 573L811 559M809 573L816 577M816 577L817 576M817 576L819 562M819 562L814 559M814 559L811 559M808 574L809 573M807 557L811 559M816 577L816 577M828 574L817 576M827 563L819 562M821 548L814 559M1438 186L1437 190M1423 180L1429 192M1429 192L1437 190M1456 193L1443 196M1443 196L1437 190M1404 244L1406 236M1406 236L1404 230M1390 237L1392 233M1392 233L1404 230M1399 196L1394 208M1394 208L1387 209M1391 193L1384 198M1387 209L1384 198M1374 191L1379 198M1384 198L1379 198M1356 206L1341 203M1356 206L1353 196M1353 196L1350 194M1341 203L1346 195M1341 203L1341 203M1346 195L1350 194M1341 214L1341 203M1356 207L1356 209M1350 216L1356 209M1356 207L1356 206M1362 192L1353 196M1366 200L1356 207M1366 196L1366 200M1353 183L1350 194M1338 186L1346 195M1336 201L1341 203M1234 348L1235 348M1234 348L1222 339M1235 348L1243 341M1222 339L1222 337M1222 337L1242 326M1243 341L1242 326M1223 362L1234 348M1243 360L1235 348M1217 345L1222 339M1217 330L1222 337M1242 325L1242 326M1239 323L1242 325M1303 481L1299 474M1303 481L1295 487M1299 474L1293 481M1295 487L1293 481M1326 20L1320 32M1320 32L1318 33M1318 33L1305 16M1330 35L1320 32M1314 39L1318 33M1338 99L1340 95M1338 99L1346 112M1383 107L1380 108M1338 90L1340 95M1326 104L1338 99M2080 316L2081 313M2078 321L2072 324M2072 324L2070 323M2053 306L2053 312M2101 306L2107 311M2112 309L2107 311M1617 364L1632 363M1617 364L1615 360M1615 360L1620 351M1620 351L1633 353M1633 353L1635 360M1635 360L1632 363M1614 378L1617 364M1631 376L1632 363M1618 339L1620 351M1635 346L1633 353M1643 362L1635 360M1417 237L1422 243M1417 237L1416 238M1416 238L1412 250M1412 250L1421 251M1420 232L1427 230M1420 232L1417 237M1412 225L1420 232M1405 229L1404 230M1412 225L1405 229M1406 236L1416 238M1409 251L1412 250M1412 263L1418 263M1425 260L1426 258M1454 254L1454 256M1437 261L1440 267M1454 256L1441 267M1440 267L1441 267M1503 261L1505 267M1511 264L1505 267M1489 262L1491 268M1505 267L1504 269M1491 268L1504 269M1454 256L1457 259M1463 263L1457 259M1441 267L1450 275M1457 259L1450 275M1491 268L1487 280M1504 269L1506 275M1506 275L1488 281M1487 280L1488 281M1538 366L1532 359M1552 357L1538 366M1544 343L1535 342M1532 359L1535 342M1540 322L1532 330M1532 330L1535 342M1535 342L1535 342M1885 439L1885 446M1885 439L1896 436M1885 446L1898 450M1896 436L1899 449M1899 449L1898 450M1909 445L1899 449M1901 432L1896 436M1898 458L1898 450M1881 455L1881 453M1881 453L1871 445M1871 445L1866 446M1889 465L1887 462M1885 460L1881 455M1885 446L1881 453M1889 422L1885 423M1885 439L1883 437M1885 423L1883 437M1871 445L1878 437M1883 437L1878 437M1893 411L1875 411M1879 386L1874 410M1875 411L1874 410M1885 423L1877 420M1875 411L1877 420M1873 434L1878 437M1873 434L1872 424M1877 420L1872 424M1849 435L1853 434M1853 434L1857 439M1873 434L1864 435M1863 439L1864 435M1248 477L1249 465M1248 477L1250 479M1250 479L1260 475M1260 475L1258 464M1258 464L1249 465M1239 476L1248 477M1243 460L1249 465M1250 481L1250 479M1259 463L1258 464M1378 478L1374 490M1391 478L1390 490M1374 490L1387 494M1390 490L1387 494M1408 485L1404 496M1390 490L1404 496M1419 498L1406 503M1404 496L1406 503M1413 546L1397 539M1386 557L1389 541M1389 541L1397 539M1374 490L1365 495M1363 479L1362 494M1365 495L1362 494M1324 547L1326 557M1324 547L1310 538M1310 538L1308 538M1420 467L1411 466M1420 467L1425 459M1425 459L1416 451M1416 451L1411 463M1411 463L1411 466M1426 478L1420 467M1410 468L1411 466M1434 460L1433 460M1433 460L1425 459M1410 428L1416 451M1399 460L1411 463M1339 455L1330 464M1339 455L1324 454M1330 464L1323 458M1324 454L1322 456M1322 456L1323 458M1353 437L1344 453M1344 453L1339 455M1330 467L1330 464M1320 467L1320 467M1320 467L1323 458M1316 456L1322 456M1312 464L1320 467M1344 457L1335 470M1344 457L1349 473M1349 473L1349 473M1349 473L1336 472M1336 472L1335 470M1344 453L1344 457M1331 469L1335 470M1350 474L1349 473M1357 473L1350 474M1448 665L1444 666M1455 687L1446 684M1446 684L1439 678M1463 678L1455 687M1439 678L1444 666M1407 679L1411 667M1411 667L1419 665M1414 687L1427 686M1414 687L1407 679M1427 686L1430 682M1430 682L1419 665M1395 698L1404 701M1405 718L1408 714M1408 714L1404 701M1407 679L1392 680M1414 687L1410 695M1404 701L1410 695M1425 727L1414 731M1425 727L1432 737M1414 731L1418 750M1432 742L1432 737M1432 742L1422 751M1422 751L1418 750M1407 752L1418 750M1411 730L1414 731M1438 734L1432 737M1442 622L1440 627M1430 609L1442 622M1424 610L1430 631M1430 631L1440 627M1460 635L1449 635M1464 649L1440 648M1449 635L1440 648M1413 637L1415 651M1413 637L1415 634M1415 634L1426 635M1426 635L1434 653M1415 651L1423 658M1423 658L1434 653M1434 653L1434 653M1430 631L1426 635M1414 630L1415 634M1449 635L1440 627M1440 648L1434 653M1439 678L1430 682M1444 666L1434 653M1419 665L1423 658M1388 656L1393 663M1388 656L1397 640M1393 663L1401 660M1401 660L1403 654M1403 654L1400 642M1397 640L1400 642M1379 651L1388 656M1389 671L1393 663M1392 636L1397 640M1411 667L1401 660M1415 651L1403 654M1413 637L1400 642M1458 457L1451 458M1458 457L1465 441M1451 458L1440 436M1465 441L1439 429M1439 429L1440 436M1465 463L1458 457M1445 466L1451 458M1468 440L1465 441M1433 460L1440 436M1438 428L1439 429M1554 417L1579 420M1554 417L1554 417M1554 417L1567 438M1579 420L1568 439M1568 439L1567 438M1580 419L1579 420M1563 400L1572 403M1558 401L1563 400M1558 401L1554 417M1512 415L1517 420M1512 415L1527 402M1527 402L1532 402M1532 402L1538 421M1517 420L1538 421M1532 402L1540 392M1554 417L1540 423M1544 392L1558 401M1544 392L1542 392M1542 392L1540 392M1538 421L1540 423M1509 493L1500 508M1509 493L1507 490M1507 490L1493 489M1493 489L1495 507M1495 507L1498 509M1498 509L1500 508M1518 495L1509 493M1512 474L1508 476M1525 485L1512 474M1508 476L1507 490M1489 486L1493 489M1508 476L1495 473M1491 508L1495 507M1500 522L1498 509M1517 505L1521 516M1517 505L1506 509M1506 509L1514 521M1521 516L1514 521M1519 498L1517 505M1529 518L1521 516M1500 508L1506 509M1512 523L1514 521M1472 605L1474 605M1472 605L1466 603M1467 589L1462 596M1466 603L1462 596M1452 534L1445 536M1452 534L1452 522M1445 536L1438 525M1452 522L1441 523M1441 523L1438 525M1458 538L1452 534M1439 543L1445 536M1453 520L1452 522M1438 525L1438 525M1442 509L1441 523M1467 619L1463 616M1472 605L1463 613M1463 613L1463 616M1466 603L1458 608M1463 613L1458 608M1460 635L1454 619M1463 616L1454 619M1442 622L1449 616M1454 619L1449 616M1434 606L1435 606M1435 606L1449 616M1449 616L1449 616M1540 648L1541 653M1583 363L1603 358M1583 363L1588 344M1589 343L1602 342M1589 343L1588 344M1602 342L1604 356M1604 356L1603 358M1584 321L1589 343M1605 338L1602 342M1568 333L1571 340M1571 340L1588 344M1615 360L1604 356M1602 367L1603 358M1582 365L1583 368M1582 365L1577 363M1568 387L1572 385M1568 387L1561 376M1561 376L1560 372M1583 363L1582 365M1571 340L1568 352M1586 395L1584 390M1563 400L1568 387M1544 392L1561 376M1544 375L1542 392M1544 375L1560 372M1544 375L1538 366M1538 366L1538 366M1451 416L1438 428M1451 416L1450 403M1433 399L1436 395M1450 403L1450 403M1436 395L1450 403M791 620L785 611M791 620L786 627M786 627L778 620M778 620L781 613M781 613L785 611M785 611L785 611M800 622L791 620M786 633L786 627M774 623L778 620M772 610L781 613M896 736L892 744M894 749L892 744M891 761L894 749M896 685L893 678M893 678L897 674M897 657L897 674M946 683L929 682M884 675L885 665M884 675L893 678M1443 196L1440 203M1461 197L1453 206M1440 203L1453 206M1475 210L1469 214M1467 216L1455 224M1453 206L1451 214M1383 226L1391 230M1383 226L1385 219M1391 230L1393 220M1385 219L1393 220M1377 230L1377 229M1377 229L1383 226M1392 233L1391 230M1398 217L1405 229M1398 217L1393 220M1360 229L1360 229M1356 209L1363 213M1363 213L1360 229M1377 229L1372 225M1372 225L1360 229M1376 203L1383 211M1376 203L1371 204M1371 204L1369 213M1382 213L1383 211M1382 213L1373 217M1373 217L1369 213M1379 198L1376 203M1387 209L1383 211M1366 200L1371 204M1363 213L1369 213M1399 216L1394 208M1399 216L1398 217M1385 219L1382 213M1372 225L1373 217M1429 192L1427 195M1421 180L1411 195M1427 195L1411 195M1405 194L1408 196M1411 195L1408 196M1399 216L1406 213M1406 213L1409 197M1408 196L1409 197M1256 357L1257 353M1243 341L1247 343M1257 353L1247 343M1276 351L1269 346M1257 353L1269 346M1280 329L1268 336M1269 346L1268 336M1270 499L1274 497M1270 499L1267 505M1274 497L1279 508M1256 499L1266 505M1261 495L1270 499M1257 496L1261 495M1287 507L1284 506M1290 514L1287 507M1284 506L1279 508M1286 497L1287 501M1284 506L1287 501M1286 497L1280 494M1274 497L1274 495M1280 494L1274 495M1291 489L1286 497M1291 489L1283 486M1280 494L1283 486M1261 495L1269 488M1269 488L1272 489M1274 495L1272 489M1270 468L1270 471M1280 462L1283 472M1270 471L1272 475M1283 472L1272 475M1268 480L1267 485M1268 480L1262 475M1262 475L1261 475M1261 475L1262 484M1262 484L1267 485M1272 475L1272 477M1272 477L1268 480M1270 471L1262 475M1260 475L1261 475M1257 487L1262 484M1269 488L1267 485M2079 332L2072 327M2078 333L2072 334M2070 328L2072 327M2072 324L2072 327M1424 270L1422 274M1424 270L1434 272M1422 274L1425 282M1434 272L1435 279M1425 282L1426 283M1426 283L1433 282M1433 282L1435 279M1424 267L1424 270M1415 274L1422 274M1440 267L1434 272M1417 284L1425 282M1422 294L1424 293M1424 293L1426 283M1433 282L1437 288M1424 293L1427 295M1437 288L1427 295M1439 296L1431 297M1435 346L1442 344M1435 346L1433 356M1442 344L1446 351M1446 351L1437 357M1437 357L1433 356M1440 338L1442 343M1429 342L1435 346M1442 343L1442 344M1422 340L1423 357M1423 357L1433 356M1439 364L1450 366M1452 363L1450 366M1452 363L1449 353M1439 364L1437 357M1449 353L1446 351M1534 261L1530 266M1511 264L1519 268M1530 266L1519 268M1506 275L1510 279M1519 268L1510 279M1536 310L1530 308M1528 328L1523 316M1532 330L1528 328M1530 308L1523 316M1449 353L1451 351M1456 340L1457 343M1442 343L1450 338M1454 349L1457 343M1467 270L1466 276M1467 270L1476 265M1466 276L1484 282M1476 265L1486 280M1486 280L1484 282M1463 263L1467 270M1480 260L1476 265M1487 280L1486 280M1466 276L1464 277M1450 275L1450 275M1464 277L1450 275M1540 392L1527 381M1527 402L1514 392M1514 392L1518 383M1518 383L1527 381M1538 366L1529 374M1527 381L1529 374M1862 411L1863 412M1862 411L1854 410M1863 412L1863 423M1854 410L1852 411M1852 411L1850 422M1850 422L1856 426M1856 426L1861 426M1863 423L1861 426M1874 410L1863 412M1872 424L1863 423M1845 407L1852 411M1843 425L1850 422M1853 434L1856 426M1864 435L1861 426M1405 505L1401 505M1405 505L1409 518M1401 505L1390 515M1409 518L1398 524M1398 524L1391 520M1390 515L1391 520M1386 500L1401 505M1386 500L1387 494M1406 503L1405 505M1411 519L1409 518M1381 507L1390 515M1386 500L1381 507M1397 539L1398 524M1391 520L1381 527M1389 541L1383 537M1383 537L1381 527M1354 551L1365 536M1354 551L1357 558M1360 560L1370 556M1360 560L1357 558M1370 556L1372 540M1372 540L1365 536M1328 559L1347 545M1347 545L1354 551M1346 564L1357 558M1382 559L1370 556M1362 571L1360 560M1383 537L1372 540M1350 474L1348 488M1362 494L1359 494M1359 494L1348 488M1364 515L1372 509M1364 515L1358 526M1377 524L1363 530M1377 524L1373 509M1373 509L1372 509M1358 526L1363 530M1352 503L1359 494M1351 507L1364 515M1351 507L1352 503M1365 495L1372 509M1381 527L1377 524M1365 536L1363 530M1381 507L1373 509M1324 547L1330 539M1347 545L1343 534M1343 534L1343 534M1330 539L1343 534M1343 534L1344 533M1358 526L1352 527M1352 527L1344 533M1351 507L1347 512M1352 527L1347 512M1320 474L1319 475M1310 469L1317 475M1319 475L1317 475M1287 501L1295 500M1295 500L1296 496M1291 489L1294 488M1296 496L1294 488M1455 687L1459 698M1467 706L1459 698M1438 734L1444 716M1446 684L1441 700M1459 698L1441 700M1500 414L1512 415M1517 420L1521 439M1521 439L1517 443M1494 467L1507 457M1512 474L1515 465M1455 594L1457 596M1455 594L1444 598M1457 596L1454 607M1444 600L1444 598M1444 600L1452 608M1452 608L1454 607M1453 583L1455 594M1462 596L1457 596M1441 591L1444 598M1458 608L1454 607M1435 606L1444 600M1449 616L1452 608M1554 646L1554 646M1541 653L1541 653M1541 653L1554 646M1556 652L1554 646M1536 679L1539 678M1538 665L1539 678M1550 685L1544 677M1544 677L1539 678M1439 364L1436 366M1436 366L1440 377M1450 366L1449 375M1449 375L1447 377M1447 377L1440 377M1450 403L1460 391M1460 391L1449 385M1450 403L1446 388M1449 385L1446 388M1436 395L1436 392M1446 388L1436 392M870 662L873 678M884 675L881 677M873 678L881 677M896 736L895 731M895 731L904 723M917 722L904 723M881 677L884 691M896 685L893 689M893 689L884 691M1427 195L1429 203M1440 203L1438 205M1429 203L1438 205M1439 213L1438 205M1267 335L1261 334M1267 335L1265 317M1261 334L1247 323M1265 317L1256 315M1247 323L1253 316M1256 315L1253 316M1247 343L1261 334M1268 336L1267 335M1271 315L1265 317M1242 325L1247 323M1258 307L1256 315M1245 304L1253 316M1276 485L1283 486M1276 485L1276 481M1276 481L1285 474M1283 486L1286 475M1286 475L1286 475M1286 475L1285 474M1272 489L1276 485M1283 486L1283 486M1272 477L1276 481M1283 472L1285 474M1293 481L1286 475M1295 487L1294 488M1294 488L1294 488M1295 469L1286 475M1299 471L1299 474M1510 305L1515 301M1510 305L1513 313M1513 313L1518 317M1523 316L1518 317M1530 308L1524 299M1524 299L1515 301M1443 293L1442 291M1443 293L1455 293M1442 291L1447 280M1455 293L1457 291M1457 291L1448 279M1447 280L1448 279M1437 288L1442 291M1435 279L1447 280M1450 275L1448 279M1464 277L1464 289M1464 289L1457 291M1494 289L1488 281M1494 289L1488 300M1488 300L1482 302M1484 282L1476 295M1482 302L1475 298M1464 289L1472 296M1455 293L1456 300M1456 308L1456 311M1482 302L1480 317M1480 317L1487 319M1482 302L1494 314M1487 319L1494 314M1501 304L1488 300M1502 305L1501 304M1502 305L1497 313M1482 302L1482 302M1497 313L1494 314M1513 313L1502 320M1502 305L1510 305M1497 313L1502 320M1328 473L1330 480M1336 472L1335 478M1330 480L1335 478M1319 475L1324 483M1324 483L1330 482M1330 480L1330 482M1349 473L1338 480M1335 478L1338 480M1307 473L1309 479M1303 481L1306 481M1306 481L1309 479M1317 475L1313 479M1309 479L1313 479M1324 483L1324 483M1324 483L1317 488M1313 479L1315 487M1317 488L1315 487M1431 698L1439 702M1431 698L1423 706M1439 702L1442 715M1442 715L1427 719M1423 706L1422 713M1427 719L1422 713M1427 686L1431 698M1441 700L1439 702M1410 695L1423 706M1444 716L1442 715M1425 727L1427 719M1408 714L1422 713M1532 482L1533 481M1521 460L1530 463M1539 432L1534 436M1539 432L1554 443M1534 436L1538 453M1538 453L1551 452M1554 443L1551 452M1540 423L1539 432M1521 439L1534 436M1567 438L1554 443M1530 463L1538 453M1553 456L1551 452M1544 677L1549 673M1544 658L1553 658M1544 658L1543 662M1543 662L1549 671M1549 671L1555 662M1553 658L1555 662M1541 653L1544 658M1556 652L1553 658M1538 665L1543 662M1549 673L1549 671M1433 387L1439 378M1439 378L1422 370M1414 370L1422 370M1447 377L1449 385M1440 377L1439 378M1436 392L1433 387M1436 366L1422 370M1423 357L1414 370M839 715L844 726M839 715L845 710M845 710L854 719M854 719L849 725M844 726L849 725M843 730L844 726M834 713L839 715M857 742L858 733M858 733L856 728M856 728L849 725M884 730L882 729M884 730L888 742M882 729L878 742M888 742L878 742M895 731L891 729M891 729L884 730M892 744L888 742M872 745L873 745M873 745L878 742M1428 214L1425 207M1428 214L1422 220M1425 207L1419 209M1419 209L1415 217M1422 220L1415 217M1415 217L1415 217M1429 203L1425 207M1436 217L1428 214M1427 228L1422 220M1409 197L1419 209M1406 213L1415 217M1412 225L1415 217M1510 279L1510 280M1494 289L1496 289M1510 280L1496 289M1501 304L1501 294M1515 301L1509 291M1509 291L1501 294M1496 289L1501 294M1518 317L1511 330M1502 320L1502 326M1502 326L1507 329M1511 330L1507 329M1528 328L1513 333M1511 330L1513 333M1454 349L1464 356M1457 343L1463 345M1463 345L1465 354M1348 488L1345 489M1338 480L1341 486M1345 489L1341 486M1330 482L1332 485M1341 486L1332 485M1304 496L1305 503M1296 496L1304 496M1295 500L1297 503M1297 503L1305 503M1287 507L1296 508M1297 503L1296 508M886 708L890 704M883 692L890 704M886 708L878 703M883 692L878 694M878 703L878 694M884 691L883 692M873 678L873 678M878 694L876 693M876 693L870 687M873 678L870 687M860 674L861 675M873 678L861 675M844 672L851 683M861 675L857 681M851 683L857 681M893 689L897 696M890 704L891 704M891 704L897 696M907 698L897 696M875 726L875 726M875 726L868 729M875 726L874 719M874 719L868 717M866 728L868 729M866 728L862 723M868 717L861 720M862 723L861 720M882 729L881 727M873 745L875 726M881 727L875 726M866 745L868 729M858 733L866 728M856 728L862 723M857 718L854 719M857 718L861 720M886 721L881 714M886 721L892 719M892 719L893 718M893 718L886 709M886 709L881 714M881 727L886 721M877 715L874 719M877 715L881 714M891 729L892 719M904 723L894 717M894 717L893 718M873 706L878 703M886 708L886 709M877 715L873 706M1511 281L1511 284M1511 281L1526 279M1511 284L1525 294M1526 279L1530 289M1530 289L1525 294M1510 280L1511 281M1509 291L1511 284M1530 266L1526 279M1524 299L1525 294M1542 288L1530 289M1463 345L1470 343M1470 343L1468 330M1480 317L1470 323M1518 383L1509 372M1529 374L1515 362M1509 372L1515 362M1532 359L1515 360M1515 362L1515 360M1345 489L1340 494M1332 485L1332 491M1332 491L1340 494M1324 483L1327 494M1332 491L1327 494M1321 497L1317 488M1322 497L1327 494M1322 497L1321 497M1327 494L1327 494M1323 503L1331 504M1331 504L1334 501M1322 497L1323 503M1327 494L1334 501M1352 503L1339 499M1340 494L1339 499M1338 510L1336 501M1338 510L1341 513M1346 512L1341 513M1346 512L1339 500M1339 500L1336 501M1334 501L1336 501M1331 508L1331 504M1331 508L1338 510M1344 533L1337 520M1347 512L1346 512M1337 520L1339 514M1339 514L1341 513M1339 499L1339 500M1306 494L1310 494M1306 494L1305 490M1310 494L1313 488M1305 490L1307 486M1307 486L1313 488M1294 488L1305 490M1304 496L1306 494M1306 481L1307 486M1315 487L1313 488M1321 497L1320 497M1310 494L1311 496M1320 497L1311 496M1316 509L1310 514M1316 509L1313 504M1310 514L1309 503M1313 504L1310 503M1309 503L1310 503M1320 497L1313 504M1311 496L1310 503M1305 503L1305 503M1305 503L1309 503M1337 520L1328 520M1339 514L1329 513M1329 513L1328 520M1331 508L1329 512M1329 513L1329 512M1323 503L1321 509M1329 512L1321 509M1316 509L1321 509M1321 509L1321 509M1304 508L1298 512M1304 508L1310 514M1310 514L1310 514M1310 514L1304 518M1299 516L1298 513M1298 513L1298 512M1296 508L1298 512M1305 503L1304 508M1310 514L1310 514M1290 514L1298 513M868 717L866 709M873 706L869 706M866 709L869 706M857 718L858 708M866 709L858 708M876 693L867 699M869 706L867 699M845 710L845 710M845 710L857 707M858 708L857 707M849 687L857 698M849 687L837 693M837 693L845 700M845 700L857 698M857 698L857 698M833 692L837 693M851 683L849 687M845 710L845 700M857 707L857 698M897 713L895 706M897 713L904 711M895 706L902 706M904 711L902 706M894 717L897 713M891 704L895 706M917 722L904 711M907 698L902 706M1535 342L1529 343M1515 360L1515 359M1529 343L1515 359M1513 333L1514 336M1514 336L1520 340M1529 343L1520 340M1507 329L1498 345M1514 336L1508 346M1498 345L1508 346M1520 340L1514 357M1508 346L1514 357M1515 359L1514 359M1514 357L1514 359M1326 524L1323 528M1326 524L1326 522M1326 522L1320 518M1318 530L1314 522M1318 530L1323 528M1320 518L1315 519M1314 522L1315 519M1330 539L1323 528M1343 534L1326 524M1328 520L1326 522M1321 509L1320 518M1309 525L1314 522M1310 538L1318 530M1310 514L1315 519M862 697L857 698M862 697L867 687M857 698L861 685M867 687L861 685M867 699L862 697M857 698L857 698M870 687L867 687M857 681L861 685M1498 345L1498 345M1514 359L1497 356M1497 356L1498 345M1481 381L1497 373M1498 398L1500 375M1498 398L1494 403M1500 375L1497 373M1451 416L1480 412M1460 391L1469 389M1514 392L1498 398M1509 372L1500 375M1497 356L1490 362M1490 362L1497 373M1490 362L1486 361M1486 361L1477 374M1452 363L1457 363M1449 375L1463 377M1502 326L1492 330M1498 345L1496 344M1496 344L1492 330M1470 323L1483 333M1487 319L1491 330M1483 333L1491 330M1491 330L1492 330M1471 357L1482 357M1471 357L1471 343M1482 357L1483 346M1471 343L1481 343M1481 343L1483 346M1486 361L1482 357M1467 359L1471 357M1470 343L1471 343M1496 344L1483 346M1483 333L1481 343" fill="none" stroke="#d2d2d2" stroke-width="0.85" stroke-dasharray="2.5 1.5 0.8 1.5"/><path d="M485.6 68.4L485.6 140.5L495.1 154.3L510.9 169.6L519.2 178.6L523.3 189.3M548.9 68.4L548.9 189.3M599.6 68.4L603.4 189.3M643.0 189.3L643.0 151.1L682.6 106.5M742.2 164.6L742.2 203.6L758.0 218.4L773.8 225.6M365.2 68.4L460.3 68.4L599.6 68.4L645.2 68.4M884.1 165.6L884.1 159.4L842.3 159.4L840.4 149.0L824.5 143.7L818.8 127.5L837.2 125.3L842.3 104.8L837.2 64.6M825.8 198.9L817.6 199.8L808.7 204.5M840.4 217.5L841.6 219.3M504.6 189.3L504.6 213.8L505.2 218.4L507.8 222.0L504.6 233.6L504.6 252.7M459.0 252.7L542.6 252.7M485.6 252.7L485.6 277.7L519.8 309.5L519.2 327.0M523.3 252.7L523.3 293.8L519.8 300.9L519.8 309.5M542.6 226.5L542.6 261.2L586.6 261.2L586.6 226.5L542.6 226.5M510.6 189.3L510.6 198.9L520.4 211.0L521.7 222.0L529.9 231.0L542.3 231.0M586.6 189.3L586.6 226.5M586.6 218.0L633.8 218.0M586.6 244.1L621.8 244.1L634.5 248.4M630.0 189.3L632.6 208.3L633.8 222.9L634.8 239.8L634.5 248.4L638.3 259.5L642.1 269.5L646.5 276.9L646.5 297.7M586.6 261.2L599.3 261.2L599.3 269.5L642.1 269.5M555.0 261.2L555.0 337.1M523.3 293.8L646.5 293.8M593.3 293.8L593.3 332.2L570.5 332.2M593.3 297.7L612.3 297.7L612.3 312.5L625.0 317.1L634.5 318.7L647.1 319.8L650.0 324.7L650.0 339.7L653.5 339.7L651.6 349.2M646.5 297.7L674.4 297.7L678.8 297.7M647.8 306.4L647.1 319.8M650.0 324.7L668.0 324.7L668.0 339.7L677.6 339.7L678.2 345.6M634.8 239.8L668.0 239.8M638.9 264.5L666.8 264.5L666.8 266.2M661.1 211.0L657.3 220.2L658.5 228.3L668.0 239.8L668.7 247.6L674.4 254.4L668.7 263.7L666.8 266.2L674.4 279.3L678.8 291.4L680.7 293.8L678.8 297.7L675.0 309.5L669.9 317.1L668.0 324.7M673.1 212.0L687.7 219.3L690.9 225.6M691.5 248.4L671.8 248.4M691.5 255.3L691.5 275.3L688.3 286.6L687.7 289.8L680.7 293.8M708.6 254.8L708.6 276.9M693.4 254.8L717.5 255.0M687.7 289.8L697.8 285.8L704.2 281.8L708.6 276.9L715.6 280.6L722.5 282.6L727.0 289.8L715.6 297.0L678.8 297.7M722.5 282.6L726.3 277.7L735.8 264.5L735.8 250.1M735.8 271.8L765.6 271.8L768.1 271.2M740.3 250.6L740.3 252.7L768.5 252.7L772.6 257.8M742.2 271.8L742.2 276.1L749.8 274.4L753.6 275.3L757.4 278.5L758.6 284.2M727.0 289.8L737.1 289.8L749.8 274.4M715.6 297.0L765.0 297.4M673.7 309.5L687.1 309.5L711.8 309.5L719.4 309.5L724.4 300.9L728.2 297.0M687.1 309.5L685.8 344.1M703.5 309.5L707.3 330.8L707.3 339.7L690.9 339.7L691.5 344.1M707.3 339.7L708.0 341.9L725.1 343.0L726.3 341.5L729.5 341.9M719.4 309.5L721.3 313.3L728.2 324.0L732.7 331.5M711.8 309.5L719.4 309.5M724.4 307.9L732.7 308.7L733.9 311.0L740.9 311.0L748.2 318.3M781.1 226.5L781.4 238.9L780.2 252.3L780.2 258.6M781.8 246.3L794.1 246.7L797.3 245.0M780.2 252.3L790.9 252.5L793.5 252.5M786.5 226.5L786.5 246.5M795.4 223.8L796.0 243.3M790.9 252.5L790.6 258.6M517.3 328.5L531.2 361.5L531.2 361.5M555.3 337.5L556.6 359.4L568.0 372.2L576.2 371.5L585.1 351.4M592.0 354.3L595.2 368.7L602.8 382.8L610.4 372.2L614.2 363.7M865.7 634.7L878.4 603.6L875.8 592.8L886.0 560.3L887.9 534.4M927.1 547.7L911.9 559.1L919.5 581.3L938.6 580.7L954.4 554.0M783.3 593.4L802.3 606.9L822.6 609.4M875.8 592.8L927.8 608.8L927.1 628.2L910.0 662.3L879.6 663.7M927.1 628.2L954.4 628.8L954.4 612.0L965.2 613.9L983.5 602.4L988.6 593.4L1000.6 594.7L1024.1 594.0M954.4 628.8L955.0 643.8L946.2 649.1L946.2 665.7L922.7 675.7L910.0 662.3M965.2 637.3L989.2 647.8L993.7 662.3M922.7 675.7L963.9 694.8M899.9 713.5L937.9 717.1M905.0 725.6L931.0 740.7M802.3 792.7L834.0 791.1L844.2 791.1L844.2 831.6M791.6 840.1L841.6 840.1M792.2 875.3L818.2 875.3M848.6 691.4L854.9 731.3L873.3 731.3M2063.0 641.9L2063.0 758.3M2120.0 652.4L2120.0 717.1M2063.0 717.1L2139.0 717.1L2139.0 807.0M2139.0 738.5L2189.7 738.5L2202.4 737.0L2218.2 732.7M2139.0 775.7L2151.7 783.3L2164.4 791.1L2177.0 791.1L2184.6 797.4L2195.9 803.0M1751.3 297.7L1784.3 301.7L1816.0 299.3L1822.3 279.3L1854.0 273.6L1860.3 245.8M1816.0 299.3L1822.3 320.9L1860.3 328.5L1873.0 354.3L1871.1 365.1M1860.3 328.5L1892.0 324.7L1904.6 328.5L1933.1 332.2L1942.6 339.7M1854.0 273.6L1879.3 277.7L1904.6 289.8L1920.5 277.7L1923.6 249.3M1904.6 328.5L1917.3 354.3L1912.9 372.2L1904.6 372.2L1904.0 399.4M1920.5 277.7L1947.7 273.6L1968.0 271.2L1968.0 248.4L2005.4 211.0M1947.7 273.6L1945.8 312.5L1980.7 312.5L1993.3 309.5M1942.6 339.7L1980.7 347.0L1996.5 336.0L2012.3 339.7M1912.9 372.2L1942.6 375.7L1968.0 382.8L1987.0 391.8M1942.6 375.7L1939.5 406.9M2002.8 258.6L2028.2 239.8L2044.0 217.5L2075.7 212.9L2088.4 198.9M2015.5 145.9L2044.0 217.5M1689.9 376.4L1717.8 386.2L1730.4 386.2L1741.2 370.1L1736.8 357.9L1717.8 347.0M1717.8 386.2L1714.6 406.9L1707.0 415.7M1714.6 406.9L1755.8 406.9L1765.3 389.7L1741.2 370.1M1755.8 406.9L1757.7 430.5L1771.6 427.1L1783.0 422.4M1736.8 430.5L1757.7 430.5M1715.2 450.3L1736.8 430.5L1730.4 456.8L1739.9 466.6L1733.6 492.4M1739.9 466.6L1754.5 460.7M1765.3 389.7L1777.9 386.2L1803.3 382.8L1803.9 372.9M1777.9 386.2L1796.9 403.5L1796.9 406.9M1499.2 183.5L1511.9 169.6L1543.5 174.6M1562.5 159.4L1587.9 138.4L1625.9 133.0L1633.5 138.9M1587.9 138.4L1587.9 93.0L1625.9 80.9L1663.9 80.9L1689.2 87.0L1727.3 93.0L1777.9 93.0L1806.4 55.5L1854.0 87.0L1879.3 138.4L1872.3 158.4M1625.9 133.0L1625.9 80.9M1694.3 124.1L1689.2 87.0M1727.3 136.2L1727.3 93.0M1777.9 93.0L1771.6 143.7L1753.2 171.6M1806.4 55.5L1816.0 127.5L1814.0 180.6M1879.3 138.4L1930.0 93.0L1980.7 104.8L2006.0 143.7M1930.0 93.0L1911.0 42.3L1923.6 14.3M1980.7 104.8L2018.7 110.6L2075.7 118.5L2123.2 107.1M2073.2 190.3L2075.7 159.4L2075.7 118.5M1499.2 183.5L1524.5 203.6L1544.2 199.8M1487.8 207.3L1499.2 208.3L1524.5 203.6M1524.5 203.6L1530.9 235.4L1546.7 237.1M1484.6 222.9L1505.5 226.5L1530.9 235.4M1435.8 116.3L1473.9 104.8L1499.2 93.0L1537.2 93.0L1587.9 93.0M1440.9 129.7L1473.9 138.4L1499.2 133.0L1511.9 169.6M1473.9 138.4L1473.9 104.8M1499.2 133.0L1499.2 93.0M1537.2 93.0L1543.5 174.6M1429.5 73.4L1461.2 80.9L1473.9 104.8M1461.2 80.9L1486.5 55.5L1499.2 93.0M1486.5 55.5L1473.9 28.5M1581.6 164.6L1600.6 194.1L1594.2 222.0M1600.6 194.1L1638.6 203.6L1663.9 194.1L1689.2 174.6L1694.3 124.1M1638.6 203.6L1632.9 231.9M1663.9 194.1L1676.6 222.0L1663.9 244.1M1689.2 174.6L1727.3 194.1L1752.6 198.9L1772.9 206.4M1727.3 194.1L1714.6 222.0L1695.6 248.0M1169.8 393.5L1195.1 403.5L1206.5 410.3M1168.5 423.8L1201.5 423.8L1207.8 437.1M1233.1 382.8L1277.5 382.8L1305.3 374.3M1226.8 341.9L1264.8 354.3L1307.2 360.1M1264.8 354.3L1277.5 382.8L1293.3 411.6M1334.5 368.7L1372.5 368.7L1404.2 368.7M1353.5 339.7L1347.2 368.7L1347.2 393.5M1372.5 368.7L1372.5 406.9M1404.2 368.7L1458.0 368.7M1429.5 341.2L1426.3 403.5M1404.2 430.5L1448.5 430.5L1473.9 427.1M1416.8 463.3L1416.8 430.5L1397.8 443.7M1416.8 463.3L1448.5 456.8L1474.5 465.3M1448.5 456.8L1448.5 430.5M1344.0 437.8L1372.5 443.7L1397.8 445.7M1359.8 495.6L1359.8 463.3L1340.8 469.2M1290.1 417.1L1309.1 437.1L1331.3 453.6M1272.7 438.4L1296.5 443.7L1309.1 437.1M1220.5 423.8L1220.5 443.7L1211.6 447.0M1220.5 423.8L1253.1 409.6M1220.5 443.7L1254.0 448.3M1372.5 616.5L1372.5 650.4L1385.2 650.4M1334.5 623.0L1359.8 619.7L1386.4 617.8M1331.3 639.2L1359.8 642.5L1362.4 658.4M1353.5 689.3L1372.5 689.3M1347.2 710.0L1372.5 710.0M1372.5 734.2L1397.8 734.9L1407.3 749.4L1424.4 750.2M1397.8 734.9L1404.2 717.1L1408.0 714.2M1363.0 760.6L1391.5 760.6L1407.3 749.4M1423.2 737.0L1435.8 720.6L1440.9 722.0M1467.5 584.5L1486.5 590.9L1495.4 597.2M1448.5 571.8L1467.5 584.5L1454.9 605.6M1461.2 555.9L1467.5 568.6L1484.0 565.4M1473.9 540.1L1486.5 546.4L1499.2 559.1M1486.5 521.0L1486.5 495.6L1499.2 489.2L1518.2 479.5M1467.5 495.6L1486.5 495.6M1486.5 495.6L1477.0 476.3L1474.5 465.3M1499.2 489.2L1504.3 456.2M1372.5 518.5L1385.2 546.4L1410.5 559.1L1429.5 563.5M1385.2 546.4L1359.8 559.1L1348.4 560.3M1385.2 584.5L1410.5 578.1L1432.0 584.5M1385.2 584.5L1383.9 592.8M1410.5 578.1L1410.5 559.1M1410.5 578.1L1420.0 600.4L1428.9 600.4M1397.8 615.9L1404.2 597.2L1385.2 584.5" fill="none" stroke="#c6c6c6" stroke-width="0.9" stroke-dasharray="3 1.5 1 1.5" stroke-linejoin="round"/><path d="M352.6 -76.1L352.6 64.6L365.2 68.4L374.7 82.1L387.4 72.2L400.7 88.2L410.8 109.4L422.2 117.4L420.3 129.7M464.7 189.3L643.0 189.3L643.0 185.4L646.5 192.2L656.6 193.2L666.1 197.9L678.8 198.9L685.8 196.0L708.6 209.2L710.5 212.9L716.2 216.6L716.8 219.3L723.2 223.8L725.7 238.9L723.2 247.6L719.4 251.0L721.9 255.3L731.4 251.0L745.3 245.8L744.7 240.6L747.2 238.9L759.3 238.9L762.4 233.6L770.7 226.5L792.8 226.5L797.3 222.9L800.4 218.4L802.3 211.0L807.4 204.1L813.1 205.0L816.3 207.3L816.3 220.2L818.8 224.7L821.4 228.3M504.0 328.5L519.2 327.0L518.5 328.5L542.6 337.5L560.4 337.5L560.4 333.7L571.1 333.7L580.6 341.9L583.8 349.9L592.0 354.3L596.5 348.5L603.4 348.5L610.4 359.4L615.5 365.1L618.0 372.9L630.0 376.4M661.7 453.6L661.7 449.0L664.9 443.0L673.1 443.0L673.1 441.1L666.8 435.4L669.3 435.4L669.3 431.8L681.0 431.8L681.0 430.5L686.4 427.1M681.0 431.8L680.7 444.4L682.6 444.4M687.1 445.7L680.7 450.9L679.8 454.2L675.0 458.4M679.8 454.2L685.2 457.5L689.6 460.7M690.2 463.3L695.9 461.4L700.4 456.8L707.3 452.9L710.5 452.2L718.7 450.3M702.9 475.6L709.2 476.3L715.6 476.9M720.6 494.9L720.6 489.2L722.5 485.9M752.3 500.7L756.7 496.2L755.5 491.7M791.6 419.1L791.6 425.8L790.9 430.5M794.1 471.1L788.4 475.6L783.3 485.9L786.5 493.0L787.1 499.4L796.0 501.9L805.5 507.7L818.2 507.0L816.3 517.9L819.5 524.8L816.3 528.7L821.4 538.8L822.0 538.8M822.0 538.8L820.7 535.6L815.0 535.0L803.6 535.6L803.6 539.4L807.4 542.6L802.3 542.9L802.3 547.7L806.2 553.4L803.0 573.0M803.0 573.0L797.9 570.5L802.3 563.5L784.0 561.6L778.9 554.6L768.8 547.0M768.8 547.0L762.4 543.9L754.8 542.0L746.0 537.5M768.8 547.0L769.4 552.4L766.9 555.9L760.5 562.9L750.4 568.0L749.1 571.1L745.3 578.1L738.4 573.7L736.5 568.6M803.0 573.0L784.0 578.7L782.1 585.1L777.0 593.4L784.0 604.3L788.4 610.1L798.5 606.9L798.5 616.5L804.9 616.2M804.9 616.2L810.6 626.2L808.7 641.2L806.2 646.5L808.7 650.4L804.9 657.7L805.5 659.0L799.8 664.7M804.9 616.2L811.9 616.5L823.9 609.4L831.5 608.1L832.1 619.7L837.8 625.6L848.0 629.5L854.3 632.7L862.5 634.7L865.1 650.4L875.8 651.1L876.5 657.7L881.5 663.7L877.7 674.4L877.1 676.8M877.1 676.8L871.4 671.0L854.9 673.1L851.1 679.1L848.9 691.0M848.9 691.0L841.0 689.3L838.5 694.8L832.8 690.0L826.4 688.0L820.1 694.8M820.1 694.8L815.7 694.8L813.8 684.5L810.6 678.4L811.9 671.7L808.7 669.0L805.5 659.0M820.1 694.8L821.4 696.2L812.5 706.6L811.9 719.2L804.9 734.2L802.3 748.7L799.2 756.8L802.3 770.3L803.6 777.2L799.2 785.7L796.0 795.1L795.4 813.5L791.6 827.4L791.6 840.1L789.0 853.0L794.1 864.5L791.6 879.9L787.8 898.7L781.4 908.3L782.7 920.2L787.8 923.2L789.7 933.4L812.5 936.5M811.2 940.1L811.2 964.2M848.9 691.0L859.4 701.7L872.0 707.3L880.9 712.8L874.6 725.6L888.5 727.7L893.6 725.6L899.9 714.2M877.1 676.8L879.0 690.0L891.0 691.4L893.6 699.6L894.8 703.1L901.8 703.8L899.9 714.2M899.9 714.2L905.0 718.5L905.6 724.9L892.3 734.2L880.9 747.2M880.9 747.2L877.1 760.6L875.8 774.9M880.9 747.2L891.0 752.4L899.9 756.8L906.9 764.3L907.5 773.4M865.7 492.4L867.0 493.6L858.7 503.9L857.5 509.0L861.3 513.4M861.3 513.4L856.8 517.9L847.3 522.9L838.5 520.4L838.5 530.6L844.2 532.5L830.9 541.3L822.0 538.8M861.3 513.4L865.7 514.1L868.9 521.0L866.3 531.8L872.0 538.2L878.4 536.9L887.9 534.4M883.4 508.3L882.8 514.7L878.4 521.0L882.8 525.5L887.9 534.4M887.9 534.4L891.7 530.6L899.9 531.8L910.7 532.5L918.3 520.4M903.7 510.2L901.2 514.7L903.7 523.6L899.9 531.8M1231.9 308.7L1234.4 314.1L1235.0 322.5L1238.2 329.3L1227.4 332.2L1223.0 338.9L1222.7 341.9L1212.9 347.8L1201.5 350.7L1190.9 356.5L1190.9 366.5L1215.2 382.8M1190.9 363.9L1162.4 363.9M1190.9 366.5L1190.9 375.7L1169.8 375.7L1169.8 393.5L1163.4 396.6L1162.8 408.0L1138.4 408.0M1215.2 382.8L1204.6 382.8L1211.0 440.4L1211.9 447.0L1185.6 447.6L1178.0 447.6L1172.9 446.3L1168.5 451.6M1215.2 382.8L1253.1 409.6L1257.2 415.0L1266.1 418.4L1266.7 423.8L1272.7 422.8M1272.7 422.8L1282.5 420.4L1293.3 411.6L1321.8 393.2M1321.8 393.2L1309.1 386.2L1305.3 374.3L1308.5 370.8L1307.2 360.1L1308.5 348.5L1306.0 345.6M1306.0 345.6L1303.4 336.0L1293.3 323.2L1297.7 313.3L1298.4 305.6L1300.3 294.6M1306.0 345.6L1311.1 340.4L1311.1 333.7L1318.7 327.8L1318.7 323.6M1404.2 335.2L1402.3 345.6L1404.2 352.9L1404.2 403.5L1404.2 417.1L1397.8 417.1L1397.8 420.4M1397.8 420.4L1347.2 393.5L1340.8 396.6L1335.8 399.4L1321.8 393.2M1404.2 403.5L1444.1 403.5L1445.4 402.1L1445.4 403.5L1479.6 403.5M1397.8 420.4L1397.8 445.7L1390.9 447.0L1388.3 455.5L1385.2 463.3L1390.9 473.7L1390.9 476.9M1335.8 399.4L1342.1 406.9L1344.6 417.1L1344.0 437.8L1331.3 453.6L1332.0 458.8M1332.0 458.8L1321.8 462.7L1309.1 461.4L1295.2 461.4L1285.1 459.1L1271.8 460.1L1268.6 471.8M1272.7 422.8L1272.7 438.4L1268.0 447.6L1254.0 448.3L1247.1 450.9M1247.1 450.9L1247.7 455.5L1252.1 460.7L1259.1 465.3L1261.0 468.5L1263.5 467.2L1268.6 471.8M1247.1 450.9L1239.5 450.9L1233.1 455.5L1226.8 458.8L1219.2 462.0L1217.9 465.9L1212.2 471.1L1211.0 479.8M1211.0 479.8L1206.5 478.9L1195.8 481.4L1193.2 476.3L1188.8 467.9L1180.5 468.5L1173.6 469.2L1173.6 466.9L1168.5 451.6M1141.3 443.0L1153.9 439.7L1162.2 445.7L1168.5 451.6M1173.6 466.9L1159.0 465.9L1147.6 465.3L1140.0 467.6M1139.4 459.4L1150.1 458.1L1158.4 460.1L1158.4 461.4L1149.5 461.4L1139.4 462.7M1159.0 465.9L1159.0 471.8L1150.8 476.6M1161.5 489.2L1167.2 483.4L1174.8 482.7L1178.6 487.2L1180.5 492.4L1172.9 502.6M1180.5 492.4L1186.3 499.4L1192.0 498.1L1193.2 506.4L1198.3 509.6L1198.0 518.5M1192.0 498.1L1195.8 492.4L1195.8 481.4M1211.0 479.8L1216.7 484.7L1228.7 485.9L1225.5 503.2L1228.1 514.1M1228.7 485.9L1227.4 476.3L1245.8 475.6L1249.0 492.4L1250.2 505.1L1253.4 507.7M1245.8 475.6L1251.5 476.3L1254.7 487.2L1256.3 506.7M1251.5 476.3L1258.5 473.7L1261.0 468.5M1268.6 471.8L1269.9 479.5L1263.2 489.2L1262.9 505.8M1299.6 516.6L1304.7 505.8L1312.3 501.9L1320.6 501.9L1326.3 491.1L1333.2 476.3L1338.3 473.1L1335.8 467.2L1335.1 462.7L1332.0 458.8M1335.1 462.7L1340.8 469.2L1340.8 477.6L1344.6 482.7L1334.5 483.4L1343.4 498.1M1343.4 498.1L1353.5 497.5L1363.6 494.9L1366.8 489.2L1374.4 488.5L1383.3 478.9L1390.9 476.9M1343.4 498.1L1337.7 507.7L1338.9 517.2L1346.5 527.4L1348.4 532.5L1330.1 532.5L1317.4 532.5L1307.9 531.8M1317.4 532.5L1317.4 540.1L1307.9 540.1M1390.9 476.9L1395.3 483.4L1394.7 491.1L1399.1 491.1L1405.4 499.4L1413.0 504.5L1419.4 514.1M1419.4 514.1L1406.7 513.4L1390.9 516.0L1387.7 520.4L1376.3 518.5L1369.3 514.1L1363.6 519.1L1363.6 524.2L1356.7 523.6L1348.4 532.5M1363.6 524.2L1360.5 532.5L1358.6 544.5L1357.9 550.2L1348.4 560.3L1347.2 568.6L1342.1 573.7L1337.0 577.5L1330.7 576.8L1328.2 575.6L1324.4 579.4L1323.1 583.2M1330.1 532.5L1335.8 537.5L1333.9 546.4L1337.7 550.2L1337.0 558.4L1335.1 561.6L1328.2 561.0L1319.3 561.6L1321.2 568.6L1316.1 571.1M1323.1 583.8L1330.7 583.8L1351.0 583.8L1353.5 592.8L1368.7 597.2L1372.5 590.9L1383.9 592.8L1384.5 599.2L1383.9 606.9L1386.4 617.8L1397.8 615.9M1397.8 615.9L1397.8 629.5L1385.2 629.5L1385.2 650.4L1394.0 659.7M1397.8 615.9L1406.1 618.5L1416.2 622.3L1420.0 624.3L1427.0 628.8L1433.3 632.1L1434.6 624.3L1429.5 625.6L1425.7 621.7L1427.0 608.1L1428.9 600.4L1440.3 598.5M1440.3 598.5L1432.0 584.5L1430.8 567.3L1429.5 563.5L1433.3 555.3L1433.3 549.6L1435.2 543.2L1440.9 535.6L1444.1 532.5L1440.9 531.2L1440.9 524.2M1440.9 524.2L1432.7 517.9L1423.2 518.5L1419.4 514.1M1440.9 524.2L1448.5 523.6L1458.0 522.6L1461.2 519.8L1464.4 524.2L1467.5 535.6L1464.4 539.4L1461.2 545.1L1460.6 552.7M1433.3 555.3L1439.0 552.7L1460.6 552.7L1484.0 565.4L1484.6 568.6L1494.1 576.2M1439.0 553.4L1440.9 561.0L1439.0 561.6L1440.3 567.3L1435.8 574.3L1432.0 574.6M1429.5 563.5L1435.2 563.5L1439.0 561.6M1461.2 519.8L1473.2 517.2L1479.6 518.5L1487.2 523.6L1496.0 524.8L1504.3 519.8L1511.2 521.4L1505.5 528.7L1505.5 551.5L1509.3 557.2M1511.2 521.4L1518.2 517.2L1530.9 515.3L1549.9 495.6L1543.5 495.6L1524.5 489.2L1518.2 479.5L1516.3 476.3L1510.6 476.3L1514.4 467.2L1518.8 465.3M1516.3 476.3L1519.8 473.1M1514.4 467.2L1504.3 456.2L1492.9 452.9L1485.9 450.9L1477.0 454.9L1479.6 440.4L1490.3 430.5M1477.0 454.9L1474.5 465.3L1468.2 471.1L1463.1 479.5L1461.8 485.9L1461.8 491.7L1454.9 496.2L1465.6 503.9L1469.4 512.1L1473.2 517.2M1399.1 491.1L1402.9 484.0L1404.8 480.8L1414.9 485.9L1422.5 485.3L1428.9 486.6L1435.2 480.8L1440.9 484.7L1443.5 484.0L1449.2 469.8L1456.1 468.5L1455.5 478.2L1460.6 481.4L1461.8 485.9M1501.7 613.3L1489.7 619.1L1483.4 621.0L1477.0 621.0L1467.3 620.2L1464.4 607.5L1454.9 606.9L1454.2 606.2L1442.8 601.1L1440.3 598.5M1454.9 606.9L1456.8 615.2L1456.8 626.2L1454.2 633.4L1456.1 636.0M1467.3 620.2L1465.0 620.4L1463.7 624.3L1464.7 632.7L1473.2 641.9L1472.6 649.1L1468.8 654.4L1469.4 656.4L1463.7 651.1L1463.1 647.8L1465.0 639.2L1456.1 636.0L1437.1 642.5L1438.4 646.8M1438.4 646.8L1428.9 649.1L1416.8 662.0L1406.1 661.0M1438.4 646.8L1438.4 649.1L1454.2 653.7L1454.9 658.4L1454.2 669.0L1453.0 679.1L1451.1 684.5L1444.1 692.1M1444.1 692.1L1432.0 690.7L1423.2 686.6L1421.3 679.1L1411.8 673.7L1406.1 661.0L1400.4 659.0L1394.0 662.3L1378.8 662.3L1378.8 689.3L1372.5 689.3L1372.5 708.6L1372.5 734.2L1366.2 737.8L1356.0 736.3L1350.3 735.6M1320.2 657.4L1333.9 658.4L1362.4 658.4L1394.0 659.7L1406.1 661.0M1372.5 708.6L1377.6 722.7L1389.0 717.8L1391.5 712.1L1408.0 714.2L1415.6 705.2L1425.1 693.4L1432.0 690.7M1444.1 692.1L1448.5 706.6L1448.5 716.4L1449.2 722.7L1454.2 723.1M1448.5 716.4L1444.1 715.0L1440.9 722.0L1443.5 725.6L1448.5 722.7M1416.8 742.9L1423.2 737.0L1431.4 739.2L1430.8 745.0L1424.4 750.2L1419.4 748.0L1416.8 742.9M1190.1 253.6L1193.9 251.9L1204.0 253.6L1206.5 256.1L1202.1 261.2L1202.1 267.8L1201.5 272.0L1198.3 272.8L1201.5 284.2L1198.9 292.2M1234.4 241.1L1241.4 245.0L1250.2 245.8L1256.6 248.4L1265.8 248.9M1293.3 237.1L1290.1 233.6L1289.5 224.7L1290.1 218.4L1288.9 217.5L1285.1 214.7L1284.4 212.0L1290.1 203.6L1293.9 202.7L1297.7 189.3L1286.3 184.5L1282.5 184.0L1276.2 178.6L1272.4 179.6L1262.0 168.6M1267.3 165.6L1273.0 165.6L1277.5 164.6L1282.5 167.6L1281.9 171.6L1283.8 172.1L1283.8 161.5L1288.9 160.0L1290.5 153.2L1291.4 145.9M1283.8 172.1L1286.3 176.6L1284.4 178.6L1287.0 181.5L1286.3 184.5M1282.5 184.0L1282.2 179.6L1284.4 178.6M1293.9 202.7L1300.3 201.7L1306.6 203.6L1312.3 203.6L1323.1 201.7L1328.2 203.6L1327.5 197.0L1333.2 191.7M1290.1 218.4L1295.8 217.5L1299.6 213.8L1302.8 218.4L1304.7 212.9L1309.8 214.7L1312.0 209.2L1306.6 207.8L1306.6 203.6M1312.0 209.2L1323.1 207.8L1324.4 211.0L1332.6 212.9M1333.2 191.7L1325.0 182.5L1323.1 176.6L1328.2 174.6L1336.4 169.6L1339.6 171.1L1340.8 166.6L1338.3 159.4L1335.4 150.6L1337.0 145.9L1335.8 139.5M1300.3 128.6L1308.5 129.7M1339.6 171.1L1348.4 173.1L1352.9 176.6L1357.9 176.6L1363.6 180.1L1365.2 184.5L1371.2 187.4L1376.3 185.4L1388.3 188.4M1333.2 191.7L1340.8 189.3L1352.9 193.2L1357.9 190.3L1365.2 184.5M1352.9 193.2L1354.1 198.9L1364.9 200.8L1375.7 194.1L1385.8 195.1L1388.3 188.4M1354.1 198.9L1350.3 204.5L1347.8 209.7L1338.3 213.8L1332.6 212.9L1332.0 218.4L1333.2 221.1M1332.6 222.5L1338.3 221.1L1342.7 222.0L1345.3 215.6L1351.0 212.9L1347.8 209.7M1351.0 212.9L1357.9 217.9L1365.5 218.4L1374.4 216.1L1380.1 213.8L1390.9 199.4L1385.8 195.1M1345.9 224.7L1352.9 224.3L1366.2 227.4L1368.7 232.7L1367.4 239.8L1363.0 248.4M1345.9 224.7L1347.2 233.6L1357.3 244.1L1363.0 248.4M1365.5 218.4L1366.2 227.4M1367.4 239.8L1374.4 245.8L1373.1 248.4L1368.7 253.6M1374.4 245.8L1382.6 250.1L1387.7 250.1M1373.1 248.4L1375.7 251.0L1375.7 258.6L1378.8 262.4L1376.3 268.7L1372.5 272.0M1375.7 251.0L1382.6 250.1M1378.8 262.4L1390.9 258.6L1401.0 257.8L1411.1 255.3L1414.3 258.6L1410.5 263.3M1411.1 255.3L1420.0 252.7L1423.2 252.7M1390.9 258.6L1387.7 250.1L1387.7 245.8L1389.6 233.6L1391.5 237.1L1407.3 238.5L1416.8 234.5L1427.0 237.6M1374.4 216.1L1381.4 224.7L1381.4 228.3L1388.3 229.2L1389.6 233.6M1390.9 199.4L1403.5 201.7L1414.3 196.5L1424.4 212.0L1424.4 222.5L1433.9 224.7M1414.3 196.5L1421.9 194.6L1430.1 199.8L1435.2 212.9L1428.9 213.8L1424.4 222.5M1388.3 188.4L1389.6 183.5L1397.8 173.6L1395.3 164.6L1395.3 153.2L1397.2 139.5L1394.7 138.4L1390.2 134.6L1371.2 133.5M1390.2 134.6L1389.0 127.5L1380.7 124.7M1394.7 138.4L1407.3 136.2L1409.2 128.6L1414.3 120.2L1404.2 114.0L1390.9 111.7L1379.2 115.5M1414.3 120.2L1424.4 114.6L1421.3 100.1L1419.4 98.4L1410.5 95.4L1399.7 94.8M1419.4 98.4L1421.3 94.2L1420.0 82.1L1423.2 75.3M1424.4 114.6L1441.6 120.8L1440.9 129.7L1447.3 140.5L1453.0 144.8L1444.7 146.9L1447.3 158.4M1395.3 164.6L1407.3 160.5L1423.2 164.6L1439.0 166.6L1447.3 158.4L1461.2 155.3L1470.1 169.6L1477.0 176.6L1486.5 180.6L1499.8 183.5L1497.9 198.9L1488.4 202.7L1487.8 207.3M1421.9 62.0L1434.6 47.6L1446.0 29.9L1435.8 14.3M1316.1 80.9L1320.6 70.9L1325.0 55.5L1322.5 46.3L1323.7 38.2L1322.5 21.5M1198.9 127.5L1194.5 133.0L1199.6 137.3L1206.5 137.3M1509.0 257.0L1516.9 257.0L1522.0 260.3L1522.6 268.7L1529.6 272.0L1527.1 274.4L1526.4 282.6L1529.6 292.2L1525.2 291.4L1514.4 293.0L1505.5 293.0L1491.6 296.2L1480.8 296.6L1478.3 299.7L1474.8 302.8M1499.2 240.6L1515.0 242.4L1529.6 247.6L1539.7 253.6L1548.6 259.5L1553.7 254.0M1522.0 260.3L1530.9 258.6L1539.7 253.6M1530.9 258.6L1534.7 262.8L1537.2 267.8L1540.4 278.5M1529.6 272.0L1540.4 278.5L1548.6 272.0L1555.6 282.2M1514.4 293.0L1506.8 311.0L1491.6 321.7L1478.9 330.0L1473.2 327.0L1471.6 322.8L1477.7 315.6L1473.5 312.2M1471.6 322.8L1468.2 324.0M1491.6 321.7L1494.1 331.1L1501.7 332.6L1512.5 338.9L1529.0 352.9L1540.4 353.6L1548.0 357.9L1552.4 357.6M1494.1 331.1L1480.2 336.0L1486.5 343.4L1483.4 347.0L1474.5 352.9L1467.2 351.8M1471.0 329.3L1470.7 336.0L1467.2 350.7M1462.8 337.5L1466.9 350.7M1529.6 292.2L1533.4 301.7L1537.2 308.7L1533.4 317.1L1537.8 324.7L1547.3 330.8L1548.0 339.7L1549.9 343.4L1553.4 347.4M1540.4 353.6L1544.2 347.0L1549.6 347.0M1516.9 441.1L1520.7 433.8L1533.4 435.1L1543.5 437.4L1551.1 429.1L1575.2 423.8L1594.2 417.1L1598.7 403.5L1595.5 398.7L1579.0 397.0L1572.7 388.3M1575.2 423.8L1582.2 439.4M1598.7 403.5L1600.6 389.0L1603.1 383.5M1567.6 384.5L1570.2 385.5M1587.3 291.0L1593.0 290.6L1608.8 284.2L1621.5 289.8L1633.5 297.0L1633.5 304.8L1629.1 317.1L1631.6 336.0L1637.3 336.7L1631.4 348.1L1636.7 356.5L1643.6 360.1L1646.2 370.1L1637.3 374.3L1636.0 381.4M1631.4 348.1L1641.7 351.4L1665.8 348.1L1668.3 338.2L1684.8 333.0L1686.1 324.0L1691.2 321.7L1696.2 316.4L1696.9 301.7L1711.4 294.6L1720.3 292.2M1633.5 304.8L1643.0 307.5L1654.4 299.3L1667.1 290.6L1675.3 292.2L1684.8 293.0L1690.5 289.0L1698.8 286.6L1699.4 296.2L1710.2 290.2L1720.3 292.2M1677.8 391.8L1681.6 387.6L1695.6 386.9L1689.9 376.4L1686.1 368.7L1691.8 361.5L1707.6 354.3L1717.8 338.9L1723.5 330.0L1716.5 326.2L1714.6 317.1L1733.6 305.6L1738.7 305.6M1720.3 292.2L1726.0 296.2L1733.0 304.0L1738.7 305.6L1744.4 316.4L1746.3 329.3L1744.4 338.2L1759.6 345.6L1765.9 344.8L1777.9 355.0L1790.6 361.5L1803.9 362.2M1759.6 345.6L1753.2 355.8L1773.5 366.2L1784.3 370.8L1803.9 372.9L1803.9 362.2L1808.3 366.5M1808.3 366.5L1814.0 360.1L1826.1 362.9L1829.3 369.4L1814.7 370.8L1808.3 366.5M1826.1 362.9L1841.3 352.9L1854.6 351.4L1862.2 359.7M1803.9 372.9L1803.9 381.4L1809.0 387.6L1807.7 395.2L1809.6 404.2M1803.9 372.9L1814.7 375.7L1814.7 380.7L1831.2 382.1L1823.6 389.0L1825.5 396.6L1830.5 391.8L1832.4 403.6L1832.4 407.6L1830.5 412.3M1832.4 403.6L1836.9 390.4L1845.1 380.7L1848.9 371.5L1862.2 359.7L1871.1 365.1L1871.1 377.1L1864.1 386.9L1872.3 395.2L1876.1 397.3L1874.2 402.5L1880.6 407.2L1886.6 406.6M1886.6 406.6L1879.9 414.7L1872.3 418.4L1865.4 427.1L1871.1 441.7L1867.9 449.0L1873.6 458.1L1876.8 471.1L1871.7 480.2L1870.1 482.7M1886.6 406.6L1890.7 408.9L1893.2 400.7L1904.0 399.4L1912.9 394.6L1921.7 398.0L1921.7 403.5L1930.0 406.6M1893.2 400.7L1898.3 411.0L1908.4 414.4L1904.0 421.1L1912.2 426.4L1920.5 437.1L1926.8 445.0L1926.8 452.2L1927.4 466.6L1919.8 471.8L1918.6 476.3L1911.6 476.6L1907.5 480.0M1879.9 414.7L1883.1 420.4L1887.5 420.4L1886.9 433.8L1892.6 429.1L1900.8 427.8L1909.1 434.4L1909.1 440.4L1914.8 446.3L1912.2 454.9L1898.3 455.5L1895.1 459.4L1897.7 471.8M1912.2 454.9L1917.3 454.9L1926.8 452.2M1879.9 505.5L1886.3 510.6L1890.7 509.6L1892.6 506.7M1802.0 187.9L1809.0 197.9L1821.7 209.2L1822.3 224.7L1838.1 227.0L1850.2 232.7L1856.5 246.3L1879.3 247.1L1890.7 248.4L1911.0 256.1L1926.8 248.9L1943.3 247.1L1955.0 238.0L1951.5 231.9L1955.3 225.6L1965.5 228.7L1984.5 214.7L1989.5 212.0L2005.4 211.0L1996.5 199.8L1992.1 202.2L1978.1 199.8L1985.1 181.0M1802.0 187.9L1814.0 180.6L1830.5 171.6L1843.2 174.1L1862.2 182.0L1868.5 174.1L1865.4 169.6L1872.3 158.4L1893.2 166.6L1893.9 173.6L1913.5 175.1L1921.7 176.6L1933.1 186.4L1947.1 187.9L1960.4 184.5L1969.9 176.6L1985.1 181.0M1985.1 181.0L1992.1 184.5L2001.6 178.6L2006.6 163.0L2010.4 153.7L2006.0 145.9L2028.8 143.2L2041.5 148.5L2053.5 181.5L2073.2 190.3L2075.1 201.7L2099.1 195.1L2096.0 204.5L2089.0 225.6L2081.4 223.8L2077.6 239.8L2073.2 249.3M2073.2 249.3L2067.4 248.9L2056.7 252.7L2057.0 257.8L2049.7 254.4L2044.0 262.0L2033.9 269.5M2044.6 287.8L2051.0 283.4L2058.9 281.0M1557.5 213.8L1552.4 211.0L1544.2 199.8L1540.4 195.1L1542.3 186.4L1546.1 176.6L1554.3 180.6L1554.9 173.6L1567.6 162.5L1584.1 164.6L1591.7 169.6L1598.7 173.6L1617.0 168.6L1625.3 171.6L1634.8 171.6L1626.5 160.5L1632.2 150.1L1633.5 138.9L1658.8 134.6L1677.8 127.5L1694.3 124.1L1696.9 137.3L1710.8 139.5L1717.1 142.7L1730.4 136.8L1739.3 145.9L1753.2 171.6L1774.1 169.6L1786.2 183.5L1799.2 188.4L1802.0 187.9M1799.2 188.4L1789.3 195.1L1788.7 206.4L1772.9 206.4L1767.2 222.0L1755.1 226.1L1757.7 242.4L1753.9 251.9L1742.5 257.8L1733.0 261.2L1713.3 271.2L1712.4 274.0L1713.3 281.0L1720.3 282.2L1720.3 292.2M1753.9 251.9L1746.9 245.8L1726.0 245.0L1715.9 242.4L1711.4 248.9L1695.6 248.0L1695.0 250.6L1682.9 257.8L1677.2 261.2L1667.1 253.6L1663.9 249.3L1664.5 244.1L1632.9 231.9L1616.4 221.6L1600.6 226.5L1600.6 258.6L1593.6 253.6L1578.4 254.8M1600.6 258.6L1606.9 258.6L1617.0 246.7L1626.5 257.8L1637.9 260.3L1641.1 269.5L1652.5 278.5L1667.1 290.6M1667.1 290.6L1679.1 284.2L1677.8 273.6L1693.1 267.8L1695.0 250.6M1693.1 267.8L1712.4 274.0M1940.4 533.4L1943.9 540.1L1954.1 540.1L1961.0 536.9L1971.8 536.9L1974.3 528.0L1978.1 519.8L1990.8 520.1M2139.0 562.9L2139.0 604.3M2031.7 606.2L2037.7 604.3L2038.3 601.4" fill="none" stroke="#b0b0b0" stroke-width="1.2" stroke-linejoin="round"/><path d="M539.4 85.8L552.1 79.7L568.0 75.9L574.3 78.4L558.5 80.9L545.8 84.6ZM1902.7 164.6L1909.7 160.5L1917.3 153.2L1926.8 145.9L1934.4 135.1L1939.5 121.9L1942.0 118.5L1942.0 127.5L1937.6 140.5L1931.2 151.1L1922.4 159.4L1914.1 164.6L1906.5 165.6ZM1711.4 222.9L1715.9 215.6L1724.1 211.0L1736.8 212.0L1746.3 212.0L1746.3 216.6L1736.8 214.7L1727.3 215.6L1719.7 224.7L1714.6 227.4ZM1423.2 256.1L1421.3 246.7L1424.4 240.6L1427.0 237.1L1428.2 228.3L1433.9 223.8L1437.1 217.5L1440.9 212.9L1447.3 212.0L1451.7 216.6L1458.0 217.0L1452.3 222.0L1458.0 230.1L1463.1 231.4L1469.4 226.5L1477.0 223.8L1478.3 222.9L1468.8 221.1L1467.5 215.6L1477.0 211.0L1484.6 207.3L1494.1 206.4L1488.4 212.0L1485.3 217.5L1487.8 222.9L1480.2 225.6L1484.0 229.2L1490.3 232.7L1497.3 239.8L1502.4 243.3L1508.7 247.6L1509.3 255.3L1505.5 259.5L1499.2 261.2L1492.9 260.3L1486.5 261.2L1480.2 259.5L1473.9 255.3L1467.5 252.3L1461.2 253.1L1454.9 252.7L1448.5 255.3L1442.2 259.5L1435.8 259.9L1430.1 259.1ZM1546.7 221.1L1553.0 214.7L1559.4 212.9L1568.9 210.1L1578.4 210.1L1582.8 215.6L1581.6 223.8L1572.1 223.8L1570.2 230.1L1564.5 231.0L1570.2 239.8L1577.1 245.8L1579.7 254.4L1580.9 261.2L1587.9 261.2L1581.6 269.5L1586.0 276.1L1587.3 287.4L1587.3 293.8L1575.2 296.2L1565.7 292.2L1557.5 289.0L1555.6 281.8L1558.7 275.3L1559.4 267.0L1564.5 266.2L1557.5 259.5L1553.0 252.7L1548.0 244.1L1546.7 237.1L1542.3 231.0ZM717.5 255.3L723.2 257.8L732.7 255.3L742.2 250.1L746.0 245.8L739.0 247.6L730.8 247.6L723.8 251.9L718.7 251.9ZM504.6 55.5L514.1 58.1L523.6 52.9L533.1 45.0L545.8 35.5L552.1 31.3L539.4 29.9L526.8 39.6L517.3 42.3L507.8 45.0ZM709.2 218.4L716.8 216.6L728.2 217.5L737.7 222.0L740.3 228.3L732.7 230.1L728.2 232.7L728.2 241.5L723.8 244.1L722.5 237.1L716.8 238.0L714.3 236.3L718.1 230.1L716.8 223.8L712.4 221.1ZM1437.1 68.4L1435.8 55.5L1442.2 47.6L1453.6 52.9L1454.9 62.0L1448.5 67.1ZM790.3 476.9L794.1 478.2L796.0 484.7L792.2 488.5L788.4 485.3ZM1416.8 264.5L1423.2 261.2L1431.4 262.8L1429.5 266.2L1421.9 266.2ZM689.6 255.3L694.7 255.3L699.1 248.4L699.1 237.1L704.2 227.4L707.3 220.2L708.6 218.4L702.3 217.5L696.6 219.3L690.2 226.5L689.0 235.4L689.6 244.1ZM1463.7 55.5L1464.4 39.6L1470.7 34.1L1475.8 46.3L1472.0 56.8ZM740.3 241.5L748.5 241.5L758.0 241.5L763.1 238.9L761.8 234.5L754.8 235.8L746.6 236.7L742.2 238.0ZM593.9 112.9L598.4 102.5L599.6 93.0L603.4 99.0L599.6 111.7ZM663.0 211.0L672.5 209.2L678.8 210.1L686.4 204.5L691.5 209.2L697.8 212.9L707.3 212.0L709.9 212.9L708.6 203.6L702.3 198.9L697.8 192.2L687.1 191.3L680.1 198.9L672.5 202.7ZM1324.4 85.8L1329.4 77.2L1334.5 79.7L1330.7 88.2ZM1446.6 548.3L1453.6 544.5L1461.2 545.1L1461.8 552.7L1459.9 560.3L1453.6 562.9L1447.3 560.3L1446.0 554.0ZM631.3 175.6L635.1 173.6L635.7 164.6L632.6 157.4L627.5 149.0L626.2 140.5L619.9 140.5L617.4 148.0L621.8 157.4L627.5 163.5L630.7 169.6Z" fill="#e6e6e6"/><defs><path id="pin" d="M0 11.2C-1.8 8 -6.1 3.9 -6.1 0A6.1 6.1 0 0 1 6.1 0C6.1 3.900 1.800 8 0 11.2Z" fill="#d36086" stroke="#fff" stroke-width="1"/><g id="hs"><path d="M-8.3 -0.300L-0.300 -8.100L2.500 -5.300V-7.700H5.700V-2.200L8.300 -0.300V8.100H-8.300Z" fill="#fff"/><path d="M-7.400 -0.700L-0.300 -7.300L3.200 -4.100V-7.300H5.700V-1.700L7.400 -0.700Z" fill="#5b8fc4"/><path d="M-6.500 0.900H6.500V7.300H1.700V3.900H-1.500V7.300H-6.500Z" fill="#5b8fc4"/></g></defs><use href="#pin" x="471.6" y="190.8"/><use href="#pin" x="475.2" y="279.9"/><use href="#pin" x="497.4" y="303.8"/><use href="#pin" x="581.5" y="260.2"/><use href="#pin" x="639.1" y="247.3"/><use href="#pin" x="653.4" y="244.2"/><use href="#pin" x="648.1" y="265.0"/><use href="#pin" x="626.6" y="275.6"/><use href="#pin" x="632.5" y="314.6"/><use href="#pin" x="622.4" y="339.4"/><use href="#pin" x="691.3" y="243.0"/><use href="#pin" x="689.2" y="241.3"/><use href="#pin" x="710.6" y="306.1"/><use href="#pin" x="751.2" y="268.2"/><use href="#pin" x="748.6" y="285.5"/><use href="#pin" x="778.6" y="252.5"/><use href="#pin" x="780.8" y="251.1"/><use href="#pin" x="1245.4" y="152.8"/><use href="#pin" x="1276.9" y="143.6"/><use href="#pin" x="1300.8" y="166.5"/><use href="#pin" x="1261.1" y="179.2"/><use href="#pin" x="1378.9" y="145.2"/><use href="#pin" x="1382.6" y="154.1"/><use href="#pin" x="1378.9" y="163.0"/><use href="#pin" x="1385.1" y="167.8"/><use href="#pin" x="1366.6" y="169.6"/><use href="#pin" x="1965.5" y="299.2"/><use href="#pin" x="2103.1" y="299.6"/><use href="#pin" x="2202.4" y="762.4"/><use href="#hs" x="488.4" y="219.1"/><use href="#hs" x="475.2" y="292.5"/><use href="#hs" x="497.4" y="316.3"/><use href="#hs" x="639.1" y="258.6"/><use href="#hs" x="626.6" y="287.9"/><use href="#hs" x="720.4" y="269.8"/><use href="#hs" x="754.6" y="279.0"/><use href="#hs" x="757.2" y="278.7"/><use href="#hs" x="780.3" y="221.8"/><use href="#hs" x="781.2" y="263.6"/><use href="#hs" x="1206.6" y="145.5"/><use href="#hs" x="1276.9" y="155.5"/><use href="#hs" x="1300.8" y="178.4"/><use href="#hs" x="1261.1" y="191.1"/><use href="#hs" x="1360.4" y="77.2"/><use href="#hs" x="1378.5" y="175.4"/><use href="#hs" x="1465.6" y="331.7"/><use href="#hs" x="1565.3" y="375.7"/><use href="#hs" x="1595.9" y="382.6"/><use href="#hs" x="1706.7" y="423.3"/><use href="#hs" x="1742.1" y="434.7"/><use href="#hs" x="1916.7" y="291.4"/><use href="#hs" x="1982.2" y="270.7"/><use href="#hs" x="1965.9" y="311.4"/><use href="#hs" x="2047.3" y="290.9"/><use href="#hs" x="2048.9" y="289.5"/><use href="#hs" x="2103.1" y="311.8"/><use href="#hs" x="1968.0" y="402.1"/><use href="#hs" x="1362.7" y="775.8"/><use href="#hs" x="2202.4" y="773.7"/></g></svg>
</div>
<div class="a" style="left:50.8px;top:265.9px;width:643.2px;height:24.6px;background:#d3dae6;border-radius:3px"></div>
<svg style="left:63.5px;top:269.5px" width="15" height="15.5" viewBox="0 0 16 16" fill="none" stroke="#343741" stroke-width="1.3"><rect x="1.2" y="2.6" width="13.6" height="12.4" rx="1.6"/><path d="M1.2 6h13.6M4.6 0.6v3M11.4 0.6v3" /><path stroke-width="1.6" stroke-dasharray="1.6 1.6" d="M3.6 8.6h9M3.6 11.6h9"/></svg>
<span class="t" style="left:83.37px;top:267.84px;font-size:19.91px;letter-spacing:0.731px;color:#1a1c21;-webkit-text-stroke:0.45px #1a1c21;">Feb 14, 2024 @ 00:00:00.000 to Feb 14, 2024 @ 23:59:59.999</span>
<div class="a" style="left:46.3px;top:309.5px;width:41.5px;height:85px;background:#fff;border-radius:6px;box-shadow:0 8px 22px rgba(0,0,0,.13),0 2px 5px rgba(0,0,0,.08)"></div>
<svg style="left:56.5px;top:320.5px" width="20.4" height="20.4" viewBox="0 0 20 20"><circle cx="10" cy="10" r="10" fill="#2b2e36"/><path d="M10 5v10M5 10h10" stroke="#fff" stroke-width="1.8"/></svg>
<svg style="left:56.5px;top:363.6px" width="20.4" height="20.4" viewBox="0 0 20 20"><circle cx="10" cy="10" r="10" fill="#2b2e36"/><path d="M5 10h10" stroke="#fff" stroke-width="1.8"/></svg>
<div class="a" style="left:2448px;top:310.2px;width:42.5px;height:42.5px;background:#fff;border-radius:7px;box-shadow:0 8px 22px rgba(0,0,0,.13),0 2px 5px rgba(0,0,0,.08)"></div>
<svg style="left:2459.5px;top:326.5px" width="20" height="13" viewBox="0 0 20 13" fill="none" stroke="#343741" stroke-width="1.4"><path d="M6.5 0.8h13M1.2 6.5h18.3M6.5 12.2h13M5 2.500 1 6.500l4 4"/></svg>
<span class="t" style="left:2401.15px;top:1246.13px;font-size:18.75px;letter-spacing:-0.336px;color:#343741;font-weight:700;">zoom:</span>
<span class="t" style="left:2457.77px;top:1246.13px;font-size:18.75px;letter-spacing:-1.339px;color:#343741;">1.74</span>
<span class="t" style="left:1872.10px;top:1284.60px;font-size:18.31px;letter-spacing:0.234px;color:#343741;-webkit-text-stroke:0.4px #343741;">Elastic Maps Service</span>
<span class="t" style="left:2066.95px;top:1284.60px;font-size:18.31px;letter-spacing:1.203px;color:#343741;-webkit-text-stroke:0.4px #343741;">,</span>
<span class="t" style="left:2077.43px;top:1284.60px;font-size:18.31px;letter-spacing:0.139px;color:#343741;-webkit-text-stroke:0.4px #343741;">OpenMapTiles</span>
<span class="t" style="left:2217.95px;top:1284.60px;font-size:18.31px;letter-spacing:1.203px;color:#343741;-webkit-text-stroke:0.4px #343741;">,</span>
<span class="t" style="left:2228.83px;top:1284.60px;font-size:18.31px;letter-spacing:0.419px;color:#343741;-webkit-text-stroke:0.4px #343741;">OpenStreetMap contributors</span>
<svg style="left:2053.7px;top:1287.6px" width="13" height="13" viewBox="0 0 16 16" fill="none" stroke="#343741" stroke-width="1.5"><path d="M6.5 3H3.2A1.2 1.2 0 0 0 2 4.2v8.6A1.2 1.2 0 0 0 3.2 14h8.6a1.2 1.2 0 0 0 1.2-1.2V9.5M9 1.700h5.300V7M14 2 7 9"/></svg>
<svg style="left:2204.9px;top:1287.6px" width="13" height="13" viewBox="0 0 16 16" fill="none" stroke="#343741" stroke-width="1.5"><path d="M6.5 3H3.2A1.2 1.2 0 0 0 2 4.2v8.6A1.2 1.2 0 0 0 3.2 14h8.6a1.2 1.2 0 0 0 1.2-1.2V9.5M9 1.700h5.300V7M14 2 7 9"/></svg>
<svg style="left:2476.7px;top:1287.6px" width="13" height="13" viewBox="0 0 16 16" fill="none" stroke="#343741" stroke-width="1.5"><path d="M6.5 3H3.2A1.2 1.2 0 0 0 2 4.2v8.6A1.2 1.2 0 0 0 3.2 14h8.6a1.2 1.2 0 0 0 1.2-1.2V9.5M9 1.700h5.300V7M14 2 7 9"/></svg>
<section class="p" style="left:28px;top:1358px;width:595.5px;height:165.5px"></section>
<svg style="left:57.4px;top:1392.0px" width="17" height="10" viewBox="0 0 17 10" fill="none" stroke="#1a1c21" stroke-width="1.7"><path d="M1 1 8.5 8.3 16 1"/></svg>
<span class="t" style="left:81.24px;top:1389.17px;font-size:20.35px;letter-spacing:0.353px;color:#1a1c21;font-weight:700;">Network events</span>
<span class="t" style="left:65.64px;top:1429.78px;font-size:31.69px;letter-spacing:-0.595px;color:#343741;font-weight:700;">7,351,286</span>
<section class="p" style="left:656px;top:1358px;width:595.5px;height:165.5px"></section>
<svg style="left:685.4px;top:1392.0px" width="17" height="10" viewBox="0 0 17 10" fill="none" stroke="#1a1c21" stroke-width="1.7"><path d="M1 1 8.5 8.3 16 1"/></svg>
<span class="t" style="left:709.24px;top:1389.17px;font-size:20.35px;letter-spacing:0.059px;color:#1a1c21;font-weight:700;">DNS queries</span>
<span class="t" style="left:690.60px;top:1429.78px;font-size:31.69px;letter-spacing:-0.511px;color:#343741;font-weight:700;">176,299</span>
<section class="p" style="left:28px;top:1556px;width:595.5px;height:165.5px"></section>
<svg style="left:56.9px;top:1589.8px" width="17" height="10" viewBox="0 0 17 10" fill="none" stroke="#1a1c21" stroke-width="1.7"><path d="M1 1 8.5 8.3 16 1"/></svg>
<span class="t" style="left:80.88px;top:1586.97px;font-size:20.35px;letter-spacing:0.096px;color:#1a1c21;font-weight:700;">Unique flow IDs</span>
<span class="t" style="left:64.22px;top:1627.58px;font-size:31.69px;letter-spacing:-0.869px;color:#343741;font-weight:700;">412,236</span>
<section class="p" style="left:656px;top:1556px;width:595.5px;height:165.5px"></section>
<svg style="left:685.4px;top:1589.8px" width="17" height="10" viewBox="0 0 17 10" fill="none" stroke="#1a1c21" stroke-width="1.7"><path d="M1 1 8.5 8.3 16 1"/></svg>
<span class="t" style="left:710.37px;top:1586.97px;font-size:20.35px;letter-spacing:-0.004px;color:#1a1c21;font-weight:700;">TLS handshakes</span>
<span class="t" style="left:689.54px;top:1627.58px;font-size:31.69px;letter-spacing:-0.795px;color:#343741;font-weight:700;">62,735</span>
<section class="p" style="left:1284px;top:1358px;width:1225px;height:363.5px"></section>
<svg style="left:1314px;top:1392px" width="17" height="10" viewBox="0 0 17 10" fill="none" stroke="#1a1c21" stroke-width="1.7"><path d="M1 1 8.5 8.3 16 1"/></svg>
<span class="t" style="left:1337.98px;top:1389.17px;font-size:20.35px;letter-spacing:0.036px;color:#1a1c21;font-weight:700;">Unique private IPs</span>
<svg style="left:1310.4px;top:1433px" width="23" height="28.5" viewBox="0 0 23 28.5" fill="none" stroke="#d36086" stroke-width="1.7"><path d="M11.5 27.3C5 19.5 1.2 15.3 1.2 10.8a10.3 10.3 0 0 1 20.6 0c0 4.5-3.800 8.700-10.300 16.500z"/><circle cx="11.5" cy="10.800" r="4"/></svg>
<span class="t" style="left:1387.90px;top:1431.98px;font-size:31.69px;letter-spacing:-0.702px;color:#343741;font-weight:700;">23</span>
<span class="t" style="left:1470.64px;top:1420.97px;font-size:50.00px;letter-spacing:-1.980px;color:#1a1c21;font-weight:700;">source</span>
<svg style="left:1900.4px;top:1433px" width="23" height="28.5" viewBox="0 0 23 28.5" fill="none" stroke="#9170b8" stroke-width="1.7"><path d="M11.5 27.3C5 19.5 1.2 15.3 1.2 10.8a10.3 10.3 0 0 1 20.6 0c0 4.5-3.800 8.700-10.300 16.500z"/><circle cx="11.5" cy="10.800" r="4"/></svg>
<span class="t" style="left:1977.90px;top:1431.98px;font-size:31.69px;letter-spacing:0.153px;color:#343741;font-weight:700;">20</span>
<span class="t" style="left:2060.25px;top:1420.97px;font-size:50.00px;letter-spacing:-1.262px;color:#1a1c21;font-weight:700;">destination</span>
<div class="a" style="left:1306.8px;top:1505.5px;width:1180px;height:1.3px;background:#d3dae6"></div>
<svg style="left:0;top:0" width="2544" height="2252" viewBox="0 0 2544 2252"><path d="M1377.5 1561.7V1648" stroke="#e3e8f2" stroke-width="1.3" fill="none"/><path d="M1477.1 1561.7V1648" stroke="#e3e8f2" stroke-width="1.3" fill="none"/><path d="M1576.7 1561.7V1648" stroke="#e3e8f2" stroke-width="1.3" fill="none"/><path d="M1676.4 1561.7V1648" stroke="#e3e8f2" stroke-width="1.3" fill="none"/><path d="M1776.0 1561.7V1648" stroke="#e3e8f2" stroke-width="1.3" fill="none"/><path d="M1875.6 1561.7V1648" stroke="#e3e8f2" stroke-width="1.3" fill="none"/><path d="M1377.5 1648H1875.6" stroke="#e3e8f2" stroke-width="1.3"/><path d="M1377.5 1583.6H1875.6M1377.5 1626.5H1875.6" stroke="#e3e8f2" stroke-width="1.3" stroke-dasharray="5.3 5.3"/><rect x="1377.5" y="1567.3" width="458.2" height="32.6" fill="#d36086"/><rect x="1377.5" y="1610.4" width="398.3" height="32.3" fill="#9170b8"/></svg>
<span class="t" style="left:1339.82px;top:1575.13px;font-size:14.97px;letter-spacing:-0.456px;color:#646a77;">Src.</span>
<span class="t" style="left:1330.47px;top:1618.63px;font-size:14.97px;letter-spacing:-0.087px;color:#646a77;">Dest.</span>
<span class="t" style="left:1373.37px;top:1660.33px;font-size:14.97px;letter-spacing:-0.057px;color:#646a77;">0</span>
<span class="t" style="left:1472.97px;top:1660.33px;font-size:14.97px;letter-spacing:0.002px;color:#646a77;">5</span>
<span class="t" style="left:1568.50px;top:1660.33px;font-size:14.97px;letter-spacing:-0.727px;color:#646a77;">10</span>
<span class="t" style="left:1668.12px;top:1660.33px;font-size:14.97px;letter-spacing:-0.683px;color:#646a77;">15</span>
<span class="t" style="left:1768.13px;top:1660.33px;font-size:14.97px;letter-spacing:-1.115px;color:#646a77;">20</span>
<span class="t" style="left:1867.75px;top:1660.33px;font-size:14.97px;letter-spacing:-1.071px;color:#646a77;">25</span>
<svg style="left:0;top:0" width="2544" height="2252" viewBox="0 0 2544 2252"><path d="M1951.7 1635.0H2474.5" stroke="#e3e8f2" stroke-width="1.3" stroke-dasharray="5.3 5.3"/><path d="M1951.7 1616.7H2474.5" stroke="#e3e8f2" stroke-width="1.3" stroke-dasharray="5.3 5.3"/><path d="M1951.7 1598.3H2474.5" stroke="#e3e8f2" stroke-width="1.3" stroke-dasharray="5.3 5.3"/><path d="M1951.7 1580.0H2474.5" stroke="#e3e8f2" stroke-width="1.3" stroke-dasharray="5.3 5.3"/><path d="M1951.7 1561.7H2474.5" stroke="#e3e8f2" stroke-width="1.3" stroke-dasharray="5.3 5.3"/><path d="M1951.7 1653.3H2474.5" stroke="#e3e8f2" stroke-width="1.3"/><path d="M1951.7 1561.7V1653.3" stroke="#e3e8f2" stroke-width="1.3"/><path d="M1951.7 1653.3V1569.0H2278.4V1653.3Z" fill="#d36086" fill-opacity=".3"/><path d="M1951.7 1653.3L1951.7 1583.7 1973.5 1583.7 1984.4 1580.0 2006.2 1580.0 2017.0 1583.7 2049.7 1583.7 2060.6 1580.0 2071.5 1583.7 2093.3 1583.7 2104.2 1580.0 2147.8 1580.0 2158.6 1583.7 2278.4 1583.7V1653.3Z" fill="#9170b8" fill-opacity=".3"/><path d="M1951.7 1569.0H2278.4" stroke="#d36086" stroke-width="2.2" fill="none"/><path d="M1951.7 1583.7 1973.5 1583.7 1984.4 1580.0 2006.2 1580.0 2017.0 1583.7 2049.7 1583.7 2060.6 1580.0 2071.5 1583.7 2093.3 1583.7 2104.2 1580.0 2147.8 1580.0 2158.6 1583.7 2278.4 1583.7" stroke="#9170b8" stroke-width="2.2" fill="none" stroke-linejoin="round"/><path d="M2082.4 1561.7V1669.4" stroke="#9a9ea6" stroke-width="1.3"/><path d="M2213.1 1561.7V1669.4" stroke="#9a9ea6" stroke-width="1.3"/><path d="M2343.8 1561.7V1669.4" stroke="#9a9ea6" stroke-width="1.3"/><path d="M1951.7 1653.3V1682.6" stroke="#9a9ea6" stroke-width="1.3"/></svg>
<span class="t" style="left:1930.64px;top:1646.14px;font-size:14.24px;letter-spacing:0.191px;color:#646a77;">0</span>
<span class="t" style="left:1930.63px;top:1627.82px;font-size:14.24px;letter-spacing:0.246px;color:#646a77;">5</span>
<span class="t" style="left:1923.11px;top:1609.50px;font-size:14.24px;letter-spacing:-0.203px;color:#646a77;">10</span>
<span class="t" style="left:1923.11px;top:1591.18px;font-size:14.24px;letter-spacing:-0.161px;color:#646a77;">15</span>
<span class="t" style="left:1923.48px;top:1572.86px;font-size:14.24px;letter-spacing:-0.571px;color:#646a77;">20</span>
<span class="t" style="left:1923.48px;top:1554.54px;font-size:14.24px;letter-spacing:-0.530px;color:#646a77;">25</span>
<span class="t" style="left:1954.67px;top:1658.13px;font-size:13.66px;letter-spacing:0.669px;color:#646a77;">00:00</span>
<span class="t" style="left:2085.37px;top:1658.13px;font-size:13.66px;letter-spacing:0.669px;color:#646a77;">06:00</span>
<span class="t" style="left:2215.56px;top:1658.13px;font-size:13.66px;letter-spacing:0.796px;color:#646a77;">12:00</span>
<span class="t" style="left:2346.26px;top:1658.13px;font-size:13.66px;letter-spacing:0.796px;color:#646a77;">18:00</span>
<span class="t" style="left:1954.03px;top:1670.94px;font-size:14.24px;letter-spacing:-0.114px;color:#646a77;">February 14, 2024</span>
<nav>
<span class="t" style="left:32.19px;top:1767.48px;font-size:24.13px;letter-spacing:-0.024px;color:#006bb8;font-weight:700;">Events</span>
<span class="t" style="left:142.09px;top:1767.48px;font-size:24.13px;letter-spacing:-0.091px;color:#1a1c21;font-weight:700;">Flows</span>
<span class="t" style="left:241.29px;top:1767.48px;font-size:24.13px;letter-spacing:-0.543px;color:#1a1c21;font-weight:700;">DNS</span>
<span class="t" style="left:322.09px;top:1767.48px;font-size:24.13px;letter-spacing:0.481px;color:#1a1c21;font-weight:700;">HTTP</span>
<span class="t" style="left:419.53px;top:1767.48px;font-size:24.13px;letter-spacing:-1.028px;color:#1a1c21;font-weight:700;">TLS</span>
<span class="t" style="left:495.30px;top:1767.48px;font-size:24.13px;letter-spacing:-0.179px;color:#1a1c21;font-weight:700;">Anomalies</span>
<div class="a" style="left:28px;top:1806px;width:2481px;height:1.3px;background:#d3dae6"></div>
<div class="a" style="left:27.8px;top:1804px;width:87.7px;height:3px;background:#0b74c4"></div>
</nav>
<section class="p" style="left:28px;top:1839px;width:2481px;height:400px"></section>
<svg style="left:62.5px;top:1878px" width="17.5" height="10" viewBox="0 0 17 10" fill="none" stroke="#1a1c21" stroke-width="1.7"><path d="M1 1 8.5 8.3 16 1"/></svg>
<span class="t" style="left:90.47px;top:1863.46px;font-size:60.18px;letter-spacing:-0.968px;color:#1a1c21;font-weight:700;">Events</span>
<span class="t" style="left:49.57px;top:1939.12px;font-size:18.17px;letter-spacing:-0.751px;color:#69707d;">Showing: 7,351,305 events</span>
<div class="a" style="left:2185.5px;top:1868.8px;width:300.5px;height:51.6px;background:#fbfcfd;border:1.3px solid #d3dae6;border-radius:8px;overflow:hidden"><div class="a" style="left:0;top:0;width:115.5px;height:50px;background:#e9edf3"></div></div>
<span class="t" style="left:2202.49px;top:1883.96px;font-size:21.08px;letter-spacing:-0.524px;color:#1a1c21;font-weight:700;">Stack by</span>
<span class="t" style="left:2317.67px;top:1883.99px;font-size:19.50px;letter-spacing:0.394px;color:#343741;">event.action</span>
<svg style="left:2450px;top:1890px" width="18" height="10.5" viewBox="0 0 17 10" fill="none" stroke="#1a1c21" stroke-width="1.8"><path d="M1 1 8.5 8.3 16 1"/></svg>
<svg style="left:0;top:0" width="2544" height="2252" viewBox="0 0 2544 2252"><path d="M140.7 2124.5H2166.8" stroke="#e3e8f2" stroke-width="1.3" stroke-dasharray="5.3 5.3"/><path d="M140.7 2102.6H2166.8" stroke="#e3e8f2" stroke-width="1.3" stroke-dasharray="5.3 5.3"/><path d="M140.7 2080.7H2166.8" stroke="#e3e8f2" stroke-width="1.3" stroke-dasharray="5.3 5.3"/><path d="M140.7 2058.8H2166.8" stroke="#e3e8f2" stroke-width="1.3" stroke-dasharray="5.3 5.3"/><path d="M140.7 2036.9H2166.8" stroke="#e3e8f2" stroke-width="1.3" stroke-dasharray="5.3 5.3"/><path d="M140.7 2015.0H2166.8" stroke="#e3e8f2" stroke-width="1.3" stroke-dasharray="5.3 5.3"/><path d="M140.7 2146.4H2166.8" stroke="#e3e8f2" stroke-width="1.3"/><path d="M140.7 2015V2146.4" stroke="#d9dcec" stroke-width="1.6"/><path d="M225.1 2146.4V2162.6" stroke="#d3dae6" stroke-width="1.3"/><path d="M309.5 2146.4V2162.6" stroke="#d3dae6" stroke-width="1.3"/><path d="M393.9 2146.4V2162.6" stroke="#d3dae6" stroke-width="1.3"/><path d="M478.3 2146.4V2162.6" stroke="#d3dae6" stroke-width="1.3"/><path d="M562.7 2146.4V2162.6" stroke="#d3dae6" stroke-width="1.3"/><path d="M647.1 2146.4V2162.6" stroke="#d3dae6" stroke-width="1.3"/><path d="M731.5 2146.4V2162.6" stroke="#d3dae6" stroke-width="1.3"/><path d="M815.9 2146.4V2162.6" stroke="#d3dae6" stroke-width="1.3"/><path d="M900.3 2146.4V2162.6" stroke="#d3dae6" stroke-width="1.3"/><path d="M984.7 2146.4V2162.6" stroke="#d3dae6" stroke-width="1.3"/><path d="M1069.1 2146.4V2162.6" stroke="#d3dae6" stroke-width="1.3"/><path d="M1153.5 2146.4V2162.6" stroke="#d3dae6" stroke-width="1.3"/><path d="M1237.9 2146.4V2162.6" stroke="#d3dae6" stroke-width="1.3"/><path d="M1322.3 2146.4V2162.6" stroke="#d3dae6" stroke-width="1.3"/><path d="M1406.7 2146.4V2162.6" stroke="#d3dae6" stroke-width="1.3"/><path d="M1491.1 2146.4V2162.6" stroke="#d3dae6" stroke-width="1.3"/><path d="M1575.5 2146.4V2162.6" stroke="#d3dae6" stroke-width="1.3"/><path d="M1659.9 2146.4V2162.6" stroke="#d3dae6" stroke-width="1.3"/><path d="M1744.3 2146.4V2162.6" stroke="#d3dae6" stroke-width="1.3"/><path d="M1828.7 2146.4V2162.6" stroke="#d3dae6" stroke-width="1.3"/><path d="M1913.1 2146.4V2162.6" stroke="#d3dae6" stroke-width="1.3"/><path d="M1997.5 2146.4V2162.6" stroke="#d3dae6" stroke-width="1.3"/><path d="M2081.9 2146.4V2162.6" stroke="#d3dae6" stroke-width="1.3"/><path d="M647.1 2015V2162.6" stroke="#9a9ea6" stroke-width="1.3"/><path d="M1153.5 2015V2162.6" stroke="#9a9ea6" stroke-width="1.3"/><path d="M1659.9 2015V2162.6" stroke="#9a9ea6" stroke-width="1.3"/><rect x="141.8" y="2062.09" width="39.9" height="84.32" fill="#54b399"/><rect x="141.8" y="2061.43" width="39.9" height="0.66" fill="#6092c0"/><rect x="141.8" y="2060.11" width="39.9" height="1.31" fill="#d36086"/><rect x="141.8" y="2058.58" width="39.9" height="1.53" fill="#9170b8"/><rect x="184.0" y="2047.76" width="39.9" height="98.64" fill="#54b399"/><rect x="184.0" y="2047.11" width="39.9" height="0.66" fill="#6092c0"/><rect x="184.0" y="2046.23" width="39.9" height="0.88" fill="#d36086"/><rect x="184.0" y="2044.26" width="39.9" height="1.97" fill="#9170b8"/><rect x="226.2" y="2054.60" width="39.9" height="91.80" fill="#54b399"/><rect x="226.2" y="2053.72" width="39.9" height="0.88" fill="#6092c0"/><rect x="226.2" y="2052.41" width="39.9" height="1.31" fill="#d36086"/><rect x="226.2" y="2051.75" width="39.9" height="0.66" fill="#9170b8"/><rect x="268.4" y="2035.15" width="39.9" height="111.25" fill="#54b399"/><rect x="268.4" y="2034.05" width="39.9" height="1.10" fill="#6092c0"/><rect x="268.4" y="2032.74" width="39.9" height="1.31" fill="#d36086"/><rect x="268.4" y="2031.21" width="39.9" height="1.53" fill="#9170b8"/><rect x="310.6" y="2058.58" width="39.9" height="87.82" fill="#54b399"/><rect x="310.6" y="2057.92" width="39.9" height="0.66" fill="#6092c0"/><rect x="310.6" y="2056.39" width="39.9" height="1.53" fill="#d36086"/><rect x="310.6" y="2054.86" width="39.9" height="1.53" fill="#9170b8"/><rect x="352.8" y="2053.59" width="39.9" height="92.81" fill="#54b399"/><rect x="352.8" y="2052.93" width="39.9" height="0.66" fill="#6092c0"/><rect x="352.8" y="2051.18" width="39.9" height="1.75" fill="#d36086"/><rect x="352.8" y="2049.86" width="39.9" height="1.31" fill="#9170b8"/><rect x="395.0" y="2051.97" width="39.9" height="94.43" fill="#54b399"/><rect x="395.0" y="2051.31" width="39.9" height="0.66" fill="#6092c0"/><rect x="395.0" y="2049.12" width="39.9" height="2.19" fill="#d36086"/><rect x="395.0" y="2048.03" width="39.9" height="1.10" fill="#9170b8"/><rect x="437.2" y="2043.65" width="39.9" height="102.75" fill="#54b399"/><rect x="437.2" y="2042.99" width="39.9" height="0.66" fill="#6092c0"/><rect x="437.2" y="2041.46" width="39.9" height="1.53" fill="#d36086"/><rect x="437.2" y="2039.92" width="39.9" height="1.53" fill="#9170b8"/><rect x="479.4" y="2048.55" width="39.9" height="97.85" fill="#54b399"/><rect x="479.4" y="2047.67" width="39.9" height="0.88" fill="#6092c0"/><rect x="479.4" y="2046.58" width="39.9" height="1.10" fill="#d36086"/><rect x="479.4" y="2046.14" width="39.9" height="0.44" fill="#9170b8"/><rect x="521.6" y="2053.32" width="39.9" height="93.08" fill="#54b399"/><rect x="521.6" y="2052.45" width="39.9" height="0.88" fill="#6092c0"/><rect x="521.6" y="2051.14" width="39.9" height="1.31" fill="#d36086"/><rect x="521.6" y="2050.48" width="39.9" height="0.66" fill="#9170b8"/><rect x="563.8" y="2046.36" width="39.9" height="100.04" fill="#54b399"/><rect x="563.8" y="2045.70" width="39.9" height="0.66" fill="#6092c0"/><rect x="563.8" y="2044.39" width="39.9" height="1.31" fill="#d36086"/><rect x="563.8" y="2042.42" width="39.9" height="1.97" fill="#9170b8"/><rect x="606.0" y="2051.49" width="39.9" height="94.91" fill="#54b399"/><rect x="606.0" y="2050.61" width="39.9" height="0.88" fill="#6092c0"/><rect x="606.0" y="2049.30" width="39.9" height="1.31" fill="#d36086"/><rect x="606.0" y="2048.64" width="39.9" height="0.66" fill="#9170b8"/><rect x="648.2" y="2049.16" width="39.9" height="97.24" fill="#54b399"/><rect x="648.2" y="2048.51" width="39.9" height="0.66" fill="#6092c0"/><rect x="648.2" y="2047.63" width="39.9" height="0.88" fill="#d36086"/><rect x="648.2" y="2046.76" width="39.9" height="0.88" fill="#9170b8"/><rect x="690.4" y="2048.77" width="39.9" height="97.63" fill="#54b399"/><rect x="690.4" y="2048.11" width="39.9" height="0.66" fill="#6092c0"/><rect x="690.4" y="2047.24" width="39.9" height="0.88" fill="#d36086"/><rect x="690.4" y="2046.14" width="39.9" height="1.10" fill="#9170b8"/><rect x="732.6" y="2023.23" width="39.9" height="123.17" fill="#54b399"/><rect x="732.6" y="2022.58" width="39.9" height="0.66" fill="#6092c0"/><rect x="732.6" y="2021.70" width="39.9" height="0.88" fill="#d36086"/><rect x="732.6" y="2020.61" width="39.9" height="1.10" fill="#9170b8"/><rect x="774.8" y="2056.48" width="39.9" height="89.92" fill="#54b399"/><rect x="774.8" y="2055.82" width="39.9" height="0.66" fill="#6092c0"/><rect x="774.8" y="2054.95" width="39.9" height="0.88" fill="#d36086"/><rect x="774.8" y="2053.63" width="39.9" height="1.31" fill="#9170b8"/><rect x="817.0" y="2055.21" width="39.9" height="91.19" fill="#54b399"/><rect x="817.0" y="2054.55" width="39.9" height="0.66" fill="#6092c0"/><rect x="817.0" y="2053.68" width="39.9" height="0.88" fill="#d36086"/><rect x="817.0" y="2052.36" width="39.9" height="1.31" fill="#9170b8"/><rect x="859.2" y="2046.49" width="39.9" height="99.91" fill="#54b399"/><rect x="859.2" y="2045.84" width="39.9" height="0.66" fill="#6092c0"/><rect x="859.2" y="2044.96" width="39.9" height="0.88" fill="#d36086"/><rect x="859.2" y="2043.65" width="39.9" height="1.31" fill="#9170b8"/><rect x="901.4" y="2039.00" width="39.9" height="107.40" fill="#54b399"/><rect x="901.4" y="2038.35" width="39.9" height="0.66" fill="#6092c0"/><rect x="901.4" y="2037.25" width="39.9" height="1.10" fill="#d36086"/><rect x="901.4" y="2036.16" width="39.9" height="1.10" fill="#9170b8"/><rect x="943.6" y="2059.15" width="39.9" height="87.25" fill="#54b399"/><rect x="943.6" y="2058.49" width="39.9" height="0.66" fill="#6092c0"/><rect x="943.6" y="2057.40" width="39.9" height="1.10" fill="#d36086"/><rect x="943.6" y="2056.74" width="39.9" height="0.66" fill="#9170b8"/><rect x="985.8" y="2047.72" width="39.9" height="98.68" fill="#54b399"/><rect x="985.8" y="2047.06" width="39.9" height="0.66" fill="#6092c0"/><rect x="985.8" y="2046.19" width="39.9" height="0.88" fill="#d36086"/><rect x="985.8" y="2045.53" width="39.9" height="0.66" fill="#9170b8"/><rect x="1028.0" y="2045.00" width="39.9" height="101.40" fill="#54b399"/><rect x="1028.0" y="2044.35" width="39.9" height="0.66" fill="#6092c0"/><rect x="1028.0" y="2043.47" width="39.9" height="0.88" fill="#d36086"/><rect x="1028.0" y="2043.03" width="39.9" height="0.44" fill="#9170b8"/><rect x="1070.2" y="2037.12" width="39.9" height="109.28" fill="#54b399"/><rect x="1070.2" y="2036.46" width="39.9" height="0.66" fill="#6092c0"/><rect x="1070.2" y="2035.59" width="39.9" height="0.88" fill="#d36086"/><rect x="1070.2" y="2034.93" width="39.9" height="0.66" fill="#9170b8"/><rect x="1112.4" y="2055.82" width="39.9" height="90.58" fill="#54b399"/><rect x="1112.4" y="2055.16" width="39.9" height="0.66" fill="#6092c0"/><rect x="1112.4" y="2054.29" width="39.9" height="0.88" fill="#d36086"/><rect x="1112.4" y="2052.97" width="39.9" height="1.31" fill="#9170b8"/><rect x="1154.6" y="2040.23" width="39.9" height="106.17" fill="#54b399"/><rect x="1154.6" y="2039.57" width="39.9" height="0.66" fill="#6092c0"/><rect x="1154.6" y="2038.70" width="39.9" height="0.88" fill="#d36086"/><rect x="1154.6" y="2038.04" width="39.9" height="0.66" fill="#9170b8"/><rect x="1196.8" y="2048.99" width="39.9" height="97.41" fill="#54b399"/><rect x="1196.8" y="2048.33" width="39.9" height="0.66" fill="#6092c0"/><rect x="1196.8" y="2047.46" width="39.9" height="0.88" fill="#d36086"/><rect x="1196.8" y="2046.14" width="39.9" height="1.31" fill="#9170b8"/><rect x="1239.0" y="2036.51" width="39.9" height="109.89" fill="#54b399"/><rect x="1239.0" y="2035.85" width="39.9" height="0.66" fill="#6092c0"/><rect x="1239.0" y="2034.97" width="39.9" height="0.88" fill="#d36086"/><rect x="1239.0" y="2034.32" width="39.9" height="0.66" fill="#9170b8"/><rect x="1281.2" y="2051.70" width="39.9" height="94.70" fill="#54b399"/><rect x="1281.2" y="2051.05" width="39.9" height="0.66" fill="#6092c0"/><rect x="1281.2" y="2049.95" width="39.9" height="1.10" fill="#d36086"/><rect x="1281.2" y="2048.64" width="39.9" height="1.31" fill="#9170b8"/><rect x="1323.4" y="2042.38" width="39.9" height="104.03" fill="#54b399"/><rect x="1323.4" y="2041.72" width="39.9" height="0.66" fill="#6092c0"/><rect x="1323.4" y="2040.62" width="39.9" height="1.10" fill="#d36086"/><rect x="1323.4" y="2039.31" width="39.9" height="1.31" fill="#9170b8"/><rect x="1365.6" y="2050.48" width="39.9" height="95.92" fill="#54b399"/><rect x="1365.6" y="2049.82" width="39.9" height="0.66" fill="#6092c0"/><rect x="1365.6" y="2048.73" width="39.9" height="1.10" fill="#d36086"/><rect x="1365.6" y="2047.41" width="39.9" height="1.31" fill="#9170b8"/><rect x="1407.8" y="2110.79" width="39.9" height="35.61" fill="#54b399"/><rect x="1407.8" y="2110.35" width="39.9" height="0.44" fill="#6092c0"/><rect x="1407.8" y="2109.70" width="39.9" height="0.66" fill="#d36086"/><rect x="1407.8" y="2109.04" width="39.9" height="0.66" fill="#9170b8"/><path d="M140.7 2146.4V2175.5" stroke="#8a8e96" stroke-width="1.5"/><path d="M2166.8 2015V2175.5" stroke="#8a8e96" stroke-width="1.8"/><circle cx="2195.6" cy="2025.5" r="5.4" fill="#54b399"/><circle cx="2195.6" cy="2057" r="5.4" fill="#6092c0"/><circle cx="2195.6" cy="2088.6" r="5.4" fill="#d36086"/><circle cx="2195.6" cy="2120.4" r="5.4" fill="#9170b8"/><rect x="2466.7" y="2017.9" width="2.6" height="2.6" fill="none" stroke="#1a1c21" stroke-width="1"/><rect x="2466.7" y="2023.9" width="2.6" height="2.6" fill="none" stroke="#1a1c21" stroke-width="1"/><rect x="2466.7" y="2029.9" width="2.6" height="2.6" fill="none" stroke="#1a1c21" stroke-width="1"/><rect x="2466.7" y="2049.4" width="2.6" height="2.6" fill="none" stroke="#1a1c21" stroke-width="1"/><rect x="2466.7" y="2055.4" width="2.6" height="2.6" fill="none" stroke="#1a1c21" stroke-width="1"/><rect x="2466.7" y="2061.4" width="2.6" height="2.6" fill="none" stroke="#1a1c21" stroke-width="1"/><rect x="2466.7" y="2081.0" width="2.6" height="2.6" fill="none" stroke="#1a1c21" stroke-width="1"/><rect x="2466.7" y="2087.0" width="2.6" height="2.6" fill="none" stroke="#1a1c21" stroke-width="1"/><rect x="2466.7" y="2093.0" width="2.6" height="2.6" fill="none" stroke="#1a1c21" stroke-width="1"/><rect x="2466.7" y="2112.8" width="2.6" height="2.6" fill="none" stroke="#1a1c21" stroke-width="1"/><rect x="2466.7" y="2118.8" width="2.6" height="2.6" fill="none" stroke="#1a1c21" stroke-width="1"/><rect x="2466.7" y="2124.8" width="2.6" height="2.6" fill="none" stroke="#1a1c21" stroke-width="1"/></svg>
<span class="t" style="left:119.44px;top:2139.24px;font-size:14.24px;letter-spacing:0.391px;color:#646a77;">0</span>
<span class="t" style="left:83.13px;top:2117.34px;font-size:14.24px;letter-spacing:0.212px;color:#646a77;">50,000</span>
<span class="t" style="left:74.11px;top:2095.44px;font-size:14.24px;letter-spacing:0.359px;color:#646a77;">100,000</span>
<span class="t" style="left:74.11px;top:2073.54px;font-size:14.24px;letter-spacing:0.359px;color:#646a77;">150,000</span>
<span class="t" style="left:74.48px;top:2051.64px;font-size:14.24px;letter-spacing:0.297px;color:#646a77;">200,000</span>
<span class="t" style="left:74.48px;top:2029.74px;font-size:14.24px;letter-spacing:0.297px;color:#646a77;">250,000</span>
<span class="t" style="left:74.66px;top:2007.84px;font-size:14.24px;letter-spacing:0.268px;color:#646a77;">300,000</span>
<span class="t" style="left:143.65px;top:2150.97px;font-size:14.10px;letter-spacing:0.405px;color:#646a77;">00:00</span>
<span class="t" style="left:228.05px;top:2150.97px;font-size:14.10px;letter-spacing:0.405px;color:#646a77;">01:00</span>
<span class="t" style="left:312.45px;top:2150.97px;font-size:14.10px;letter-spacing:0.405px;color:#646a77;">02:00</span>
<span class="t" style="left:396.85px;top:2150.97px;font-size:14.10px;letter-spacing:0.405px;color:#646a77;">03:00</span>
<span class="t" style="left:481.25px;top:2150.97px;font-size:14.10px;letter-spacing:0.405px;color:#646a77;">04:00</span>
<span class="t" style="left:565.65px;top:2150.97px;font-size:14.10px;letter-spacing:0.405px;color:#646a77;">05:00</span>
<span class="t" style="left:650.05px;top:2150.97px;font-size:14.10px;letter-spacing:0.405px;color:#646a77;">06:00</span>
<span class="t" style="left:734.45px;top:2150.97px;font-size:14.10px;letter-spacing:0.405px;color:#646a77;">07:00</span>
<span class="t" style="left:818.85px;top:2150.97px;font-size:14.10px;letter-spacing:0.405px;color:#646a77;">08:00</span>
<span class="t" style="left:903.25px;top:2150.97px;font-size:14.10px;letter-spacing:0.405px;color:#646a77;">09:00</span>
<span class="t" style="left:987.13px;top:2150.97px;font-size:14.10px;letter-spacing:0.536px;color:#646a77;">10:00</span>
<span class="t" style="left:1071.53px;top:2150.97px;font-size:14.10px;letter-spacing:0.536px;color:#646a77;">11:00</span>
<span class="t" style="left:1155.93px;top:2150.97px;font-size:14.10px;letter-spacing:0.536px;color:#646a77;">12:00</span>
<span class="t" style="left:1240.33px;top:2150.97px;font-size:14.10px;letter-spacing:0.536px;color:#646a77;">13:00</span>
<span class="t" style="left:1324.73px;top:2150.97px;font-size:14.10px;letter-spacing:0.536px;color:#646a77;">14:00</span>
<span class="t" style="left:1409.13px;top:2150.97px;font-size:14.10px;letter-spacing:0.536px;color:#646a77;">15:00</span>
<span class="t" style="left:1493.53px;top:2150.97px;font-size:14.10px;letter-spacing:0.536px;color:#646a77;">16:00</span>
<span class="t" style="left:1577.93px;top:2150.97px;font-size:14.10px;letter-spacing:0.536px;color:#646a77;">17:00</span>
<span class="t" style="left:1662.33px;top:2150.97px;font-size:14.10px;letter-spacing:0.536px;color:#646a77;">18:00</span>
<span class="t" style="left:1746.73px;top:2150.97px;font-size:14.10px;letter-spacing:0.536px;color:#646a77;">19:00</span>
<span class="t" style="left:1831.49px;top:2150.97px;font-size:14.10px;letter-spacing:0.444px;color:#646a77;">20:00</span>
<span class="t" style="left:1915.89px;top:2150.97px;font-size:14.10px;letter-spacing:0.444px;color:#646a77;">21:00</span>
<span class="t" style="left:2000.29px;top:2150.97px;font-size:14.10px;letter-spacing:0.444px;color:#646a77;">22:00</span>
<span class="t" style="left:2084.69px;top:2150.97px;font-size:14.10px;letter-spacing:0.444px;color:#646a77;">23:00</span>
<span class="t" style="left:142.97px;top:2163.73px;font-size:14.97px;letter-spacing:-0.480px;color:#646a77;">February 14, 2024</span>
<span class="t" style="left:2211.55px;top:2016.90px;font-size:18.90px;letter-spacing:1.312px;color:#343741;">network_flow</span>
<span class="t" style="left:2212.00px;top:2048.40px;font-size:18.90px;letter-spacing:1.394px;color:#343741;">connection_attempted</span>
<span class="t" style="left:2212.01px;top:2080.00px;font-size:18.90px;letter-spacing:1.275px;color:#343741;">disconnect_received</span>
<span class="t" style="left:2212.00px;top:2111.80px;font-size:18.90px;letter-spacing:1.329px;color:#343741;">connection_accepted</span>
</body></html>
